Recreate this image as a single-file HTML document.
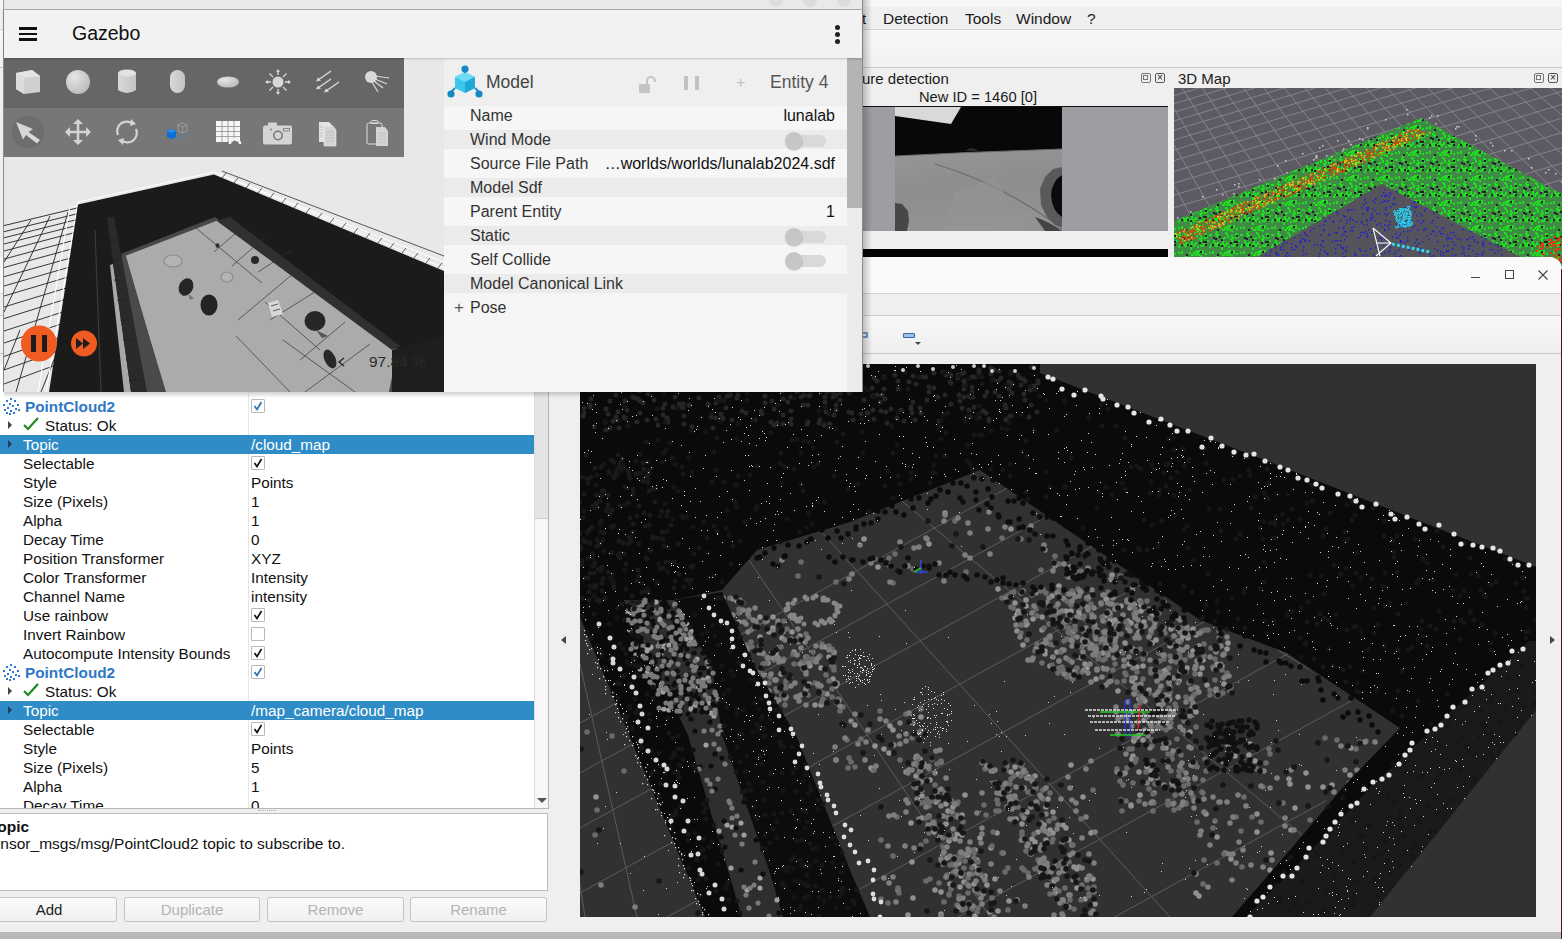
<!DOCTYPE html>
<html><head><meta charset="utf-8">
<style>
*{margin:0;padding:0;box-sizing:border-box}
html,body{width:1562px;height:939px;overflow:hidden;background:#efefef;font-family:"Liberation Sans",sans-serif;color:#1a1a1a}
.a{position:absolute}
.t{position:absolute;white-space:nowrap;line-height:1}
</style></head><body>

<!-- ============ BACK APP (top right) ============ -->
<div class="a" style="left:0;top:0;width:1562px;height:257px;background:#efefef">
  <div class="a" style="left:0;top:0;width:1562px;height:8px;background:#f7f7f7;border-bottom:1px solid #cfcfcf"></div>
  <div class="a" style="left:0;top:7px;width:1562px;height:23px;background:#efefef;border-bottom:1px solid #d2d2d2"></div>
  <div class="t" style="left:862px;top:11px;font-size:15px">t</div>
  <div class="t" style="left:883px;top:11px;font-size:15.5px">Detection</div>
  <div class="t" style="left:965px;top:11px;font-size:15.5px">Tools</div>
  <div class="t" style="left:1016px;top:11px;font-size:15.5px">Window</div>
  <div class="t" style="left:1087px;top:11px;font-size:15.5px">?</div>
  <div class="a" style="left:0;top:30px;width:1562px;height:38px;background:linear-gradient(#f8f8f8,#f1f1f1);border-bottom:1px solid #c9c9c9"></div>
  <!-- dock titles -->
  <div class="t" style="left:862px;top:71px;font-size:15px">ure detection</div>
  <div class="t" style="left:1178px;top:71px;font-size:15px">3D Map</div>
  <div class="t" style="left:919px;top:90px;font-size:14.7px">New ID = 1460 [0]</div>
  <!-- feature detection image -->
  <div class="a" style="left:862px;top:106px;width:306px;height:125px;background:#9e9da2;border-top:1px solid #111"></div>
  <svg class="a" style="left:895px;top:107px" width="167" height="124" viewBox="0 0 167 124">
    <defs><linearGradient id="gr" x1="0" y1="0" x2="0.2" y2="1"><stop offset="0" stop-color="#979797"/><stop offset="0.5" stop-color="#8d8d8d"/><stop offset="1" stop-color="#939393"/></linearGradient></defs>
    <rect width="167" height="124" fill="#080808"/>
    <polygon points="0,0 66,0 56,17 0,9" fill="#d9d9d9"/>
    <path d="M0 49 L73 45.5 L167 42 L167 124 L0 124Z" fill="url(#gr)"/>
    <path d="M0 49 L73 45.5 L167 42" stroke="#6a6a6a" stroke-width="1" fill="none"/>
    <path d="M70 44 Q77 38 83 44Z" fill="#2a2a2a"/>
    <path d="M40 57 Q110 78 167 122" stroke="#6c6c6c" stroke-width="1.3" fill="none"/>
    <path d="M60 85 L100 70 L130 124 L45 124Z" fill="#959595" opacity="0.6"/>
    <path d="M167 60 L158 62 L150 70 L145 82 L146 98 L152 110 L160 118 L167 120Z" fill="#5a5a5a"/>
    <path d="M167 68 Q157 74 156 88 Q157 104 167 110Z" fill="#0b0b0b"/>
    <path d="M0 96 L7 97 L13 104 L14 114 L12 124 L0 124Z" fill="#474747"/>
    <path d="M140 110 Q155 115 167 124 L150 124Z" fill="#444"/>
  </svg>
  <div class="a" style="left:862px;top:249px;width:306px;height:8px;background:#050505"></div>
  <!-- dock buttons -->
  <div class="a" style="left:1141px;top:73px;width:10px;height:10px;border:1px solid #777;border-radius:2px"></div><div class="a" style="left:1143px;top:75px;width:5px;height:5px;border:1px solid #777"></div>
  <div class="a" style="left:1155px;top:73px;width:10px;height:10px;border:1px solid #555;border-radius:2px;font-size:10px;line-height:8px;text-align:center;color:#222">&#215;</div>
  <div class="a" style="left:1534px;top:73px;width:10px;height:10px;border:1px solid #777;border-radius:2px"></div><div class="a" style="left:1536px;top:75px;width:5px;height:5px;border:1px solid #777"></div>
  <div class="a" style="left:1548px;top:73px;width:10px;height:10px;border:1px solid #555;border-radius:2px;font-size:10px;line-height:8px;text-align:center;color:#222">&#215;</div>
  <!-- 3D map -->
  <svg class="a" style="left:1174px;top:88px" width="388" height="182" viewBox="1174 88 388 182">
    <rect x="1174" y="88" width="388" height="182" fill="#5d5a64"/>
<!--MAP--><path d="M1174 60.0L1562 -56.4M1174 66.5L1562 -49.9M1174 73.3L1562 -43.1M1174 80.4L1562 -36.0M1174 87.8L1562 -28.6M1174 95.6L1562 -20.8M1174 103.7L1562 -12.7M1174 112.1L1562 -4.3M1174 121.0L1562 4.6M1174 130.2L1562 13.8M1174 139.9L1562 23.5M1174 150.0L1562 33.6M1174 160.5L1562 44.1M1174 171.5L1562 55.1M1174 183.1L1562 66.7M1174 195.1L1562 78.7M1174 207.7L1562 91.3M1174 220.8L1562 104.4M1174 234.6L1562 118.2M1174 248.9L1562 132.5M1174 263.9L1562 147.5M1174 279.6L1562 163.2M1174 296.0L1562 179.6M1174 313.1L1562 196.7M1095.9 80L1189.2 260M1116.1 80L1214.9 260M1136.4 80L1240.6 260M1156.6 80L1266.4 260M1176.9 80L1292.1 260M1197.1 80L1317.8 260M1217.4 80L1343.5 260M1237.7 80L1369.3 260M1257.9 80L1395.0 260M1278.2 80L1420.7 260M1298.4 80L1446.4 260M1318.7 80L1472.1 260M1338.9 80L1497.9 260M1359.2 80L1523.6 260M1379.5 80L1549.3 260M1399.7 80L1575.0 260M1420.0 80L1600.8 260M1440.2 80L1626.5 260M1460.5 80L1652.2 260M1480.7 80L1677.9 260M1501.0 80L1703.7 260M1521.2 80L1729.4 260M1541.5 80L1755.1 260M1561.8 80L1780.8 260M1582.0 80L1806.6 260M1602.3 80L1832.3 260M1622.5 80L1858.0 260M1642.8 80L1883.7 260M1663.0 80L1909.4 260M1683.3 80L1935.2 260M1703.6 80L1960.9 260M1723.8 80L1986.6 260M1744.1 80L2012.3 260M1764.3 80L2038.1 260M1784.6 80L2063.8 260M1804.8 80L2089.5 260M1825.1 80L2115.2 260M1845.4 80L2141.0 260M1865.6 80L2166.7 260M1885.9 80L2192.4 260" stroke="#8a888e" stroke-width="0.9" fill="none"/>
<defs><pattern id="gp" width="31" height="25" patternUnits="userSpaceOnUse"><rect width="31" height="25" fill="#3f8a45"/><path d="M7 18h2v2h-2zM17 4h2v2h-2zM11 19h2v2h-2zM15 20h2v2h-2zM18 2h2v2h-2zM19 0h2v2h-2zM29 15h2v2h-2zM8 17h2v2h-2zM7 6h2v2h-2zM22 15h2v2h-2zM17 17h2v2h-2zM15 12h2v2h-2zM20 4h2v2h-2zM7 20h2v2h-2zM4 16h2v2h-2zM12 23h2v2h-2zM0 21h2v2h-2zM24 2h2v2h-2zM5 18h2v2h-2zM1 9h2v2h-2zM24 0h2v2h-2zM26 8h2v2h-2zM15 19h2v2h-2zM23 12h2v2h-2zM22 13h2v2h-2zM12 23h2v2h-2zM25 18h2v2h-2zM14 4h2v2h-2zM28 11h2v2h-2zM3 1h2v2h-2zM4 15h2v2h-2zM6 8h2v2h-2zM21 13h2v2h-2zM24 20h2v2h-2zM27 9h2v2h-2zM13 16h2v2h-2zM26 12h2v2h-2zM18 11h2v2h-2zM17 18h2v2h-2zM13 18h2v2h-2zM7 10h2v2h-2zM21 0h2v2h-2zM27 8h2v2h-2zM19 21h2v2h-2zM22 5h2v2h-2zM22 10h2v2h-2zM17 18h2v2h-2zM18 3h2v2h-2zM22 20h2v2h-2zM6 20h2v2h-2zM26 18h2v2h-2zM8 9h2v2h-2zM3 2h2v2h-2zM15 20h2v2h-2zM15 2h2v2h-2zM11 2h2v2h-2zM13 4h2v2h-2zM0 9h2v2h-2zM13 13h2v2h-2zM27 3h2v2h-2zM1 19h2v2h-2zM19 1h2v2h-2zM12 22h2v2h-2zM18 10h2v2h-2zM17 8h2v2h-2zM16 7h2v2h-2zM1 9h2v2h-2zM0 2h2v2h-2zM3 19h2v2h-2zM17 1h2v2h-2z" fill="#1fe01f"/><path d="M6 13h2v2h-2zM9 19h2v2h-2zM8 4h2v2h-2zM22 1h2v2h-2zM27 10h2v2h-2zM10 11h2v2h-2zM4 12h2v2h-2zM12 14h2v2h-2zM27 16h2v2h-2zM12 20h2v2h-2zM27 19h2v2h-2zM21 17h2v2h-2zM3 19h2v2h-2zM25 16h2v2h-2z" fill="#222"/></pattern></defs>
<polygon points="1174,221 1300,168 1421,118 1562,194 1562,270 1545,270 1382,184 1235,270 1174,270" fill="url(#gp)"/>
<path d="M1336 165h1.6v1.6h-1.6zM1418 129h1.6v1.6h-1.6zM1269 200h1.6v1.6h-1.6zM1201 222h1.6v1.6h-1.6zM1258 206h1.6v1.6h-1.6zM1183 239h1.6v1.6h-1.6zM1325 176h1.6v1.6h-1.6zM1408 139h1.6v1.6h-1.6zM1205 231h1.6v1.6h-1.6zM1397 140h1.6v1.6h-1.6zM1343 170h1.6v1.6h-1.6zM1352 160h1.6v1.6h-1.6zM1280 193h1.6v1.6h-1.6zM1394 142h1.6v1.6h-1.6zM1181 243h1.6v1.6h-1.6zM1193 238h1.6v1.6h-1.6zM1186 233h1.6v1.6h-1.6zM1408 130h1.6v1.6h-1.6zM1400 135h1.6v1.6h-1.6zM1321 172h1.6v1.6h-1.6zM1368 154h1.6v1.6h-1.6zM1225 218h1.6v1.6h-1.6zM1228 222h1.6v1.6h-1.6zM1410 129h1.6v1.6h-1.6zM1195 225h1.6v1.6h-1.6zM1221 225h1.6v1.6h-1.6zM1264 204h1.6v1.6h-1.6zM1336 173h1.6v1.6h-1.6zM1280 186h1.6v1.6h-1.6zM1417 131h1.6v1.6h-1.6zM1218 215h1.6v1.6h-1.6zM1256 197h1.6v1.6h-1.6zM1306 186h1.6v1.6h-1.6zM1251 202h1.6v1.6h-1.6zM1366 150h1.6v1.6h-1.6zM1334 174h1.6v1.6h-1.6zM1183 239h1.6v1.6h-1.6zM1179 231h1.6v1.6h-1.6zM1224 218h1.6v1.6h-1.6zM1241 205h1.6v1.6h-1.6zM1216 216h1.6v1.6h-1.6zM1255 197h1.6v1.6h-1.6zM1255 198h1.6v1.6h-1.6zM1254 203h1.6v1.6h-1.6zM1229 218h1.6v1.6h-1.6zM1403 138h1.6v1.6h-1.6zM1278 189h1.6v1.6h-1.6zM1389 141h1.6v1.6h-1.6zM1320 170h1.6v1.6h-1.6zM1352 158h1.6v1.6h-1.6zM1257 196h1.6v1.6h-1.6zM1274 192h1.6v1.6h-1.6zM1379 151h1.6v1.6h-1.6zM1261 195h1.6v1.6h-1.6zM1399 134h1.6v1.6h-1.6zM1257 203h1.6v1.6h-1.6zM1419 132h1.6v1.6h-1.6zM1386 147h1.6v1.6h-1.6zM1309 179h1.6v1.6h-1.6zM1393 148h1.6v1.6h-1.6zM1233 207h1.6v1.6h-1.6zM1395 143h1.6v1.6h-1.6zM1348 160h1.6v1.6h-1.6zM1222 224h1.6v1.6h-1.6zM1357 164h1.6v1.6h-1.6zM1298 190h1.6v1.6h-1.6zM1273 192h1.6v1.6h-1.6zM1201 228h1.6v1.6h-1.6zM1203 224h1.6v1.6h-1.6zM1419 135h1.6v1.6h-1.6zM1219 224h1.6v1.6h-1.6zM1290 186h1.6v1.6h-1.6zM1304 183h1.6v1.6h-1.6zM1318 174h1.6v1.6h-1.6zM1345 165h1.6v1.6h-1.6zM1365 150h1.6v1.6h-1.6zM1256 203h1.6v1.6h-1.6zM1322 171h1.6v1.6h-1.6zM1387 150h1.6v1.6h-1.6zM1311 173h1.6v1.6h-1.6zM1309 179h1.6v1.6h-1.6zM1235 214h1.6v1.6h-1.6zM1391 149h1.6v1.6h-1.6zM1292 182h1.6v1.6h-1.6zM1218 213h1.6v1.6h-1.6zM1307 174h1.6v1.6h-1.6zM1235 206h1.6v1.6h-1.6zM1374 147h1.6v1.6h-1.6zM1292 193h1.6v1.6h-1.6zM1399 135h1.6v1.6h-1.6zM1384 147h1.6v1.6h-1.6zM1348 164h1.6v1.6h-1.6zM1195 234h1.6v1.6h-1.6zM1272 194h1.6v1.6h-1.6zM1201 229h1.6v1.6h-1.6zM1343 169h1.6v1.6h-1.6zM1346 157h1.6v1.6h-1.6zM1235 206h1.6v1.6h-1.6zM1317 177h1.6v1.6h-1.6zM1245 201h1.6v1.6h-1.6zM1237 206h1.6v1.6h-1.6zM1371 154h1.6v1.6h-1.6zM1266 194h1.6v1.6h-1.6zM1205 228h1.6v1.6h-1.6zM1404 132h1.6v1.6h-1.6zM1264 203h1.6v1.6h-1.6zM1299 186h1.6v1.6h-1.6zM1192 229h1.6v1.6h-1.6zM1231 211h1.6v1.6h-1.6zM1332 163h1.6v1.6h-1.6zM1201 234h1.6v1.6h-1.6zM1355 161h1.6v1.6h-1.6zM1386 146h1.6v1.6h-1.6zM1196 225h1.6v1.6h-1.6zM1193 229h1.6v1.6h-1.6zM1405 138h1.6v1.6h-1.6zM1353 157h1.6v1.6h-1.6zM1376 154h1.6v1.6h-1.6zM1404 140h1.6v1.6h-1.6zM1214 225h1.6v1.6h-1.6zM1218 219h1.6v1.6h-1.6zM1416 137h1.6v1.6h-1.6zM1299 187h1.6v1.6h-1.6zM1370 157h1.6v1.6h-1.6zM1385 147h1.6v1.6h-1.6zM1265 194h1.6v1.6h-1.6zM1259 197h1.6v1.6h-1.6zM1335 168h1.6v1.6h-1.6zM1316 170h1.6v1.6h-1.6zM1311 178h1.6v1.6h-1.6zM1268 198h1.6v1.6h-1.6zM1227 213h1.6v1.6h-1.6zM1372 148h1.6v1.6h-1.6zM1274 198h1.6v1.6h-1.6zM1419 133h1.6v1.6h-1.6zM1328 169h1.6v1.6h-1.6zM1203 225h1.6v1.6h-1.6zM1180 230h1.6v1.6h-1.6zM1268 200h1.6v1.6h-1.6zM1288 194h1.6v1.6h-1.6zM1232 220h1.6v1.6h-1.6zM1240 208h1.6v1.6h-1.6zM1236 208h1.6v1.6h-1.6zM1404 135h1.6v1.6h-1.6zM1400 138h1.6v1.6h-1.6zM1328 173h1.6v1.6h-1.6zM1276 193h1.6v1.6h-1.6zM1418 129h1.6v1.6h-1.6zM1382 150h1.6v1.6h-1.6zM1196 233h1.6v1.6h-1.6zM1217 222h1.6v1.6h-1.6zM1366 157h1.6v1.6h-1.6zM1300 188h1.6v1.6h-1.6zM1232 212h1.6v1.6h-1.6zM1333 170h1.6v1.6h-1.6zM1195 237h1.6v1.6h-1.6zM1219 226h1.6v1.6h-1.6zM1215 215h1.6v1.6h-1.6zM1339 168h1.6v1.6h-1.6zM1265 193h1.6v1.6h-1.6zM1344 170h1.6v1.6h-1.6zM1340 171h1.6v1.6h-1.6zM1423 134h1.6v1.6h-1.6zM1217 222h1.6v1.6h-1.6zM1183 242h1.6v1.6h-1.6zM1352 160h1.6v1.6h-1.6zM1286 190h1.6v1.6h-1.6zM1243 208h1.6v1.6h-1.6zM1237 206h1.6v1.6h-1.6zM1242 206h1.6v1.6h-1.6zM1203 233h1.6v1.6h-1.6zM1364 160h1.6v1.6h-1.6zM1344 165h1.6v1.6h-1.6zM1252 207h1.6v1.6h-1.6zM1196 226h1.6v1.6h-1.6zM1209 230h1.6v1.6h-1.6zM1327 169h1.6v1.6h-1.6zM1389 146h1.6v1.6h-1.6zM1291 183h1.6v1.6h-1.6zM1235 212h1.6v1.6h-1.6zM1216 215h1.6v1.6h-1.6zM1359 155h1.6v1.6h-1.6zM1351 165h1.6v1.6h-1.6zM1373 151h1.6v1.6h-1.6zM1212 218h1.6v1.6h-1.6zM1344 161h1.6v1.6h-1.6zM1192 229h1.6v1.6h-1.6zM1202 228h1.6v1.6h-1.6zM1247 205h1.6v1.6h-1.6zM1399 141h1.6v1.6h-1.6zM1278 198h1.6v1.6h-1.6zM1310 178h1.6v1.6h-1.6zM1373 154h1.6v1.6h-1.6zM1344 163h1.6v1.6h-1.6zM1376 152h1.6v1.6h-1.6zM1396 141h1.6v1.6h-1.6zM1178 232h1.6v1.6h-1.6zM1369 153h1.6v1.6h-1.6zM1332 167h1.6v1.6h-1.6zM1191 237h1.6v1.6h-1.6zM1229 212h1.6v1.6h-1.6zM1400 134h1.6v1.6h-1.6zM1331 165h1.6v1.6h-1.6zM1360 157h1.6v1.6h-1.6zM1363 161h1.6v1.6h-1.6zM1334 167h1.6v1.6h-1.6zM1231 214h1.6v1.6h-1.6zM1392 144h1.6v1.6h-1.6zM1412 135h1.6v1.6h-1.6zM1339 169h1.6v1.6h-1.6zM1330 168h1.6v1.6h-1.6zM1228 220h1.6v1.6h-1.6zM1251 211h1.6v1.6h-1.6zM1386 149h1.6v1.6h-1.6zM1239 211h1.6v1.6h-1.6zM1210 229h1.6v1.6h-1.6zM1383 142h1.6v1.6h-1.6zM1297 181h1.6v1.6h-1.6zM1253 200h1.6v1.6h-1.6zM1197 227h1.6v1.6h-1.6zM1399 145h1.6v1.6h-1.6zM1337 171h1.6v1.6h-1.6zM1336 165h1.6v1.6h-1.6zM1190 236h1.6v1.6h-1.6zM1355 157h1.6v1.6h-1.6zM1278 191h1.6v1.6h-1.6zM1380 154h1.6v1.6h-1.6zM1416 138h1.6v1.6h-1.6zM1305 180h1.6v1.6h-1.6zM1338 164h1.6v1.6h-1.6zM1202 228h1.6v1.6h-1.6zM1274 201h1.6v1.6h-1.6zM1344 169h1.6v1.6h-1.6zM1373 148h1.6v1.6h-1.6zM1349 166h1.6v1.6h-1.6zM1391 145h1.6v1.6h-1.6zM1296 185h1.6v1.6h-1.6zM1193 224h1.6v1.6h-1.6zM1259 205h1.6v1.6h-1.6zM1279 186h1.6v1.6h-1.6zM1405 139h1.6v1.6h-1.6zM1211 226h1.6v1.6h-1.6zM1221 222h1.6v1.6h-1.6zM1272 192h1.6v1.6h-1.6zM1271 195h1.6v1.6h-1.6zM1258 198h1.6v1.6h-1.6zM1345 163h1.6v1.6h-1.6zM1259 197h1.6v1.6h-1.6zM1271 191h1.6v1.6h-1.6zM1255 201h1.6v1.6h-1.6zM1185 231h1.6v1.6h-1.6zM1231 209h1.6v1.6h-1.6zM1305 182h1.6v1.6h-1.6zM1223 221h1.6v1.6h-1.6zM1294 186h1.6v1.6h-1.6zM1289 183h1.6v1.6h-1.6zM1194 230h1.6v1.6h-1.6zM1408 138h1.6v1.6h-1.6zM1344 162h1.6v1.6h-1.6zM1185 236h1.6v1.6h-1.6zM1237 210h1.6v1.6h-1.6zM1300 186h1.6v1.6h-1.6zM1245 213h1.6v1.6h-1.6zM1414 134h1.6v1.6h-1.6zM1249 207h1.6v1.6h-1.6zM1236 210h1.6v1.6h-1.6zM1218 218h1.6v1.6h-1.6zM1238 204h1.6v1.6h-1.6zM1249 210h1.6v1.6h-1.6zM1318 176h1.6v1.6h-1.6zM1320 180h1.6v1.6h-1.6zM1235 217h1.6v1.6h-1.6zM1417 130h1.6v1.6h-1.6zM1285 191h1.6v1.6h-1.6zM1182 230h1.6v1.6h-1.6zM1351 155h1.6v1.6h-1.6zM1407 131h1.6v1.6h-1.6zM1242 212h1.6v1.6h-1.6zM1360 151h1.6v1.6h-1.6zM1382 141h1.6v1.6h-1.6zM1176 233h1.6v1.6h-1.6zM1211 221h1.6v1.6h-1.6zM1334 163h1.6v1.6h-1.6zM1287 185h1.6v1.6h-1.6zM1188 238h1.6v1.6h-1.6zM1334 168h1.6v1.6h-1.6zM1221 220h1.6v1.6h-1.6zM1299 178h1.6v1.6h-1.6zM1295 184h1.6v1.6h-1.6zM1275 197h1.6v1.6h-1.6zM1282 187h1.6v1.6h-1.6zM1285 194h1.6v1.6h-1.6zM1362 159h1.6v1.6h-1.6zM1382 144h1.6v1.6h-1.6zM1190 239h1.6v1.6h-1.6zM1212 218h1.6v1.6h-1.6zM1241 207h1.6v1.6h-1.6zM1357 160h1.6v1.6h-1.6zM1183 242h1.6v1.6h-1.6zM1223 211h1.6v1.6h-1.6zM1394 140h1.6v1.6h-1.6zM1344 162h1.6v1.6h-1.6zM1190 231h1.6v1.6h-1.6zM1303 188h1.6v1.6h-1.6zM1214 221h1.6v1.6h-1.6zM1372 147h1.6v1.6h-1.6zM1322 167h1.6v1.6h-1.6zM1257 204h1.6v1.6h-1.6zM1206 222h1.6v1.6h-1.6zM1393 142h1.6v1.6h-1.6zM1189 234h1.6v1.6h-1.6zM1411 134h1.6v1.6h-1.6zM1294 192h1.6v1.6h-1.6zM1255 208h1.6v1.6h-1.6zM1368 159h1.6v1.6h-1.6zM1193 230h1.6v1.6h-1.6zM1336 169h1.6v1.6h-1.6zM1261 195h1.6v1.6h-1.6zM1296 191h1.6v1.6h-1.6zM1225 211h1.6v1.6h-1.6zM1368 159h1.6v1.6h-1.6zM1331 172h1.6v1.6h-1.6zM1345 167h1.6v1.6h-1.6zM1287 184h1.6v1.6h-1.6zM1253 205h1.6v1.6h-1.6zM1229 209h1.6v1.6h-1.6zM1203 233h1.6v1.6h-1.6zM1294 191h1.6v1.6h-1.6zM1318 171h1.6v1.6h-1.6zM1400 139h1.6v1.6h-1.6zM1382 147h1.6v1.6h-1.6zM1354 165h1.6v1.6h-1.6zM1367 155h1.6v1.6h-1.6zM1229 218h1.6v1.6h-1.6zM1360 162h1.6v1.6h-1.6zM1412 130h1.6v1.6h-1.6zM1370 151h1.6v1.6h-1.6zM1330 169h1.6v1.6h-1.6zM1312 173h1.6v1.6h-1.6zM1183 235h1.6v1.6h-1.6zM1181 236h1.6v1.6h-1.6zM1416 129h1.6v1.6h-1.6zM1411 136h1.6v1.6h-1.6zM1189 234h1.6v1.6h-1.6zM1311 175h1.6v1.6h-1.6zM1180 241h1.6v1.6h-1.6zM1182 236h1.6v1.6h-1.6zM1255 197h1.6v1.6h-1.6zM1192 236h1.6v1.6h-1.6zM1273 191h1.6v1.6h-1.6zM1187 238h1.6v1.6h-1.6zM1347 162h1.6v1.6h-1.6zM1232 209h1.6v1.6h-1.6zM1250 210h1.6v1.6h-1.6zM1249 207h1.6v1.6h-1.6zM1254 204h1.6v1.6h-1.6zM1258 208h1.6v1.6h-1.6zM1413 136h1.6v1.6h-1.6zM1263 204h1.6v1.6h-1.6zM1219 220h1.6v1.6h-1.6zM1214 216h1.6v1.6h-1.6zM1379 145h1.6v1.6h-1.6zM1307 180h1.6v1.6h-1.6zM1368 153h1.6v1.6h-1.6zM1390 149h1.6v1.6h-1.6zM1181 241h1.6v1.6h-1.6zM1335 169h1.6v1.6h-1.6zM1212 217h1.6v1.6h-1.6zM1308 178h1.6v1.6h-1.6zM1286 196h1.6v1.6h-1.6zM1414 130h1.6v1.6h-1.6zM1340 161h1.6v1.6h-1.6zM1224 215h1.6v1.6h-1.6zM1415 129h1.6v1.6h-1.6zM1323 179h1.6v1.6h-1.6zM1414 130h1.6v1.6h-1.6zM1220 214h1.6v1.6h-1.6zM1397 140h1.6v1.6h-1.6zM1204 221h1.6v1.6h-1.6zM1378 143h1.6v1.6h-1.6zM1357 154h1.6v1.6h-1.6zM1299 189h1.6v1.6h-1.6zM1264 201h1.6v1.6h-1.6zM1375 145h1.6v1.6h-1.6zM1211 228h1.6v1.6h-1.6zM1224 218h1.6v1.6h-1.6zM1218 223h1.6v1.6h-1.6zM1194 227h1.6v1.6h-1.6zM1204 226h1.6v1.6h-1.6zM1201 226h1.6v1.6h-1.6zM1338 163h1.6v1.6h-1.6zM1364 155h1.6v1.6h-1.6zM1208 224h1.6v1.6h-1.6zM1263 199h1.6v1.6h-1.6zM1419 135h1.6v1.6h-1.6zM1242 210h1.6v1.6h-1.6zM1228 219h1.6v1.6h-1.6zM1365 152h1.6v1.6h-1.6zM1266 195h1.6v1.6h-1.6zM1404 132h1.6v1.6h-1.6zM1397 142h1.6v1.6h-1.6zM1210 225h1.6v1.6h-1.6zM1254 198h1.6v1.6h-1.6zM1187 230h1.6v1.6h-1.6zM1274 199h1.6v1.6h-1.6zM1224 218h1.6v1.6h-1.6zM1199 226h1.6v1.6h-1.6zM1204 228h1.6v1.6h-1.6zM1242 209h1.6v1.6h-1.6zM1394 144h1.6v1.6h-1.6zM1270 199h1.6v1.6h-1.6zM1305 186h1.6v1.6h-1.6zM1208 220h1.6v1.6h-1.6zM1285 191h1.6v1.6h-1.6zM1318 177h1.6v1.6h-1.6zM1418 131h1.6v1.6h-1.6zM1402 138h1.6v1.6h-1.6zM1342 171h1.6v1.6h-1.6zM1303 176h1.6v1.6h-1.6zM1257 205h1.6v1.6h-1.6zM1185 237h1.6v1.6h-1.6zM1312 180h1.6v1.6h-1.6zM1189 237h1.6v1.6h-1.6zM1233 209h1.6v1.6h-1.6zM1409 131h1.6v1.6h-1.6zM1185 239h1.6v1.6h-1.6zM1279 189h1.6v1.6h-1.6zM1324 171h1.6v1.6h-1.6zM1192 238h1.6v1.6h-1.6zM1336 171h1.6v1.6h-1.6zM1379 143h1.6v1.6h-1.6zM1312 177h1.6v1.6h-1.6zM1207 220h1.6v1.6h-1.6zM1383 153h1.6v1.6h-1.6zM1238 215h1.6v1.6h-1.6zM1324 176h1.6v1.6h-1.6zM1264 198h1.6v1.6h-1.6zM1198 222h1.6v1.6h-1.6zM1385 146h1.6v1.6h-1.6zM1333 166h1.6v1.6h-1.6zM1185 232h1.6v1.6h-1.6zM1211 227h1.6v1.6h-1.6zM1350 160h1.6v1.6h-1.6zM1405 132h1.6v1.6h-1.6zM1301 185h1.6v1.6h-1.6zM1412 139h1.6v1.6h-1.6zM1241 203h1.6v1.6h-1.6zM1367 153h1.6v1.6h-1.6zM1314 183h1.6v1.6h-1.6zM1197 226h1.6v1.6h-1.6zM1263 196h1.6v1.6h-1.6zM1298 183h1.6v1.6h-1.6zM1365 156h1.6v1.6h-1.6zM1246 207h1.6v1.6h-1.6zM1210 225h1.6v1.6h-1.6zM1399 135h1.6v1.6h-1.6zM1251 204h1.6v1.6h-1.6zM1201 227h1.6v1.6h-1.6zM1387 139h1.6v1.6h-1.6zM1399 143h1.6v1.6h-1.6zM1402 139h1.6v1.6h-1.6zM1314 173h1.6v1.6h-1.6zM1304 179h1.6v1.6h-1.6zM1291 191h1.6v1.6h-1.6zM1243 204h1.6v1.6h-1.6zM1257 196h1.6v1.6h-1.6zM1405 137h1.6v1.6h-1.6zM1347 159h1.6v1.6h-1.6zM1351 155h1.6v1.6h-1.6zM1398 138h1.6v1.6h-1.6zM1249 201h1.6v1.6h-1.6zM1293 187h1.6v1.6h-1.6zM1330 171h1.6v1.6h-1.6zM1190 236h1.6v1.6h-1.6zM1279 197h1.6v1.6h-1.6zM1349 157h1.6v1.6h-1.6zM1268 201h1.6v1.6h-1.6zM1201 228h1.6v1.6h-1.6zM1233 216h1.6v1.6h-1.6zM1257 206h1.6v1.6h-1.6zM1282 194h1.6v1.6h-1.6zM1383 144h1.6v1.6h-1.6zM1322 177h1.6v1.6h-1.6zM1237 217h1.6v1.6h-1.6zM1230 214h1.6v1.6h-1.6zM1222 215h1.6v1.6h-1.6zM1181 239h1.6v1.6h-1.6zM1332 172h1.6v1.6h-1.6zM1334 174h1.6v1.6h-1.6zM1233 208h1.6v1.6h-1.6zM1307 175h1.6v1.6h-1.6zM1341 171h1.6v1.6h-1.6zM1374 150h1.6v1.6h-1.6zM1263 204h1.6v1.6h-1.6zM1308 178h1.6v1.6h-1.6zM1422 131h1.6v1.6h-1.6zM1219 225h1.6v1.6h-1.6zM1401 142h1.6v1.6h-1.6zM1193 229h1.6v1.6h-1.6zM1344 167h1.6v1.6h-1.6zM1368 150h1.6v1.6h-1.6zM1185 238h1.6v1.6h-1.6zM1284 197h1.6v1.6h-1.6zM1202 229h1.6v1.6h-1.6zM1361 157h1.6v1.6h-1.6zM1210 221h1.6v1.6h-1.6zM1300 182h1.6v1.6h-1.6zM1240 204h1.6v1.6h-1.6zM1237 209h1.6v1.6h-1.6zM1187 229h1.6v1.6h-1.6zM1394 137h1.6v1.6h-1.6zM1363 159h1.6v1.6h-1.6zM1402 137h1.6v1.6h-1.6zM1275 198h1.6v1.6h-1.6zM1368 152h1.6v1.6h-1.6zM1404 136h1.6v1.6h-1.6zM1358 153h1.6v1.6h-1.6zM1312 177h1.6v1.6h-1.6zM1272 193h1.6v1.6h-1.6zM1325 173h1.6v1.6h-1.6zM1364 162h1.6v1.6h-1.6zM1298 187h1.6v1.6h-1.6zM1211 227h1.6v1.6h-1.6zM1232 208h1.6v1.6h-1.6zM1188 235h1.6v1.6h-1.6zM1366 152h1.6v1.6h-1.6zM1255 206h1.6v1.6h-1.6zM1205 221h1.6v1.6h-1.6zM1188 232h1.6v1.6h-1.6zM1407 142h1.6v1.6h-1.6zM1348 165h1.6v1.6h-1.6zM1293 182h1.6v1.6h-1.6zM1297 181h1.6v1.6h-1.6zM1404 140h1.6v1.6h-1.6zM1257 208h1.6v1.6h-1.6zM1362 154h1.6v1.6h-1.6zM1340 170h1.6v1.6h-1.6zM1398 138h1.6v1.6h-1.6zM1266 196h1.6v1.6h-1.6zM1194 237h1.6v1.6h-1.6zM1218 227h1.6v1.6h-1.6zM1206 218h1.6v1.6h-1.6zM1372 155h1.6v1.6h-1.6zM1225 219h1.6v1.6h-1.6zM1246 211h1.6v1.6h-1.6zM1193 231h1.6v1.6h-1.6zM1181 229h1.6v1.6h-1.6zM1210 229h1.6v1.6h-1.6zM1247 203h1.6v1.6h-1.6zM1303 184h1.6v1.6h-1.6zM1213 228h1.6v1.6h-1.6zM1304 179h1.6v1.6h-1.6zM1266 200h1.6v1.6h-1.6zM1395 139h1.6v1.6h-1.6zM1385 148h1.6v1.6h-1.6zM1308 181h1.6v1.6h-1.6zM1230 214h1.6v1.6h-1.6zM1423 132h1.6v1.6h-1.6zM1198 222h1.6v1.6h-1.6zM1398 141h1.6v1.6h-1.6zM1240 210h1.6v1.6h-1.6zM1223 217h1.6v1.6h-1.6zM1268 201h1.6v1.6h-1.6zM1378 155h1.6v1.6h-1.6zM1269 193h1.6v1.6h-1.6zM1248 210h1.6v1.6h-1.6zM1329 166h1.6v1.6h-1.6zM1355 159h1.6v1.6h-1.6zM1300 178h1.6v1.6h-1.6zM1318 178h1.6v1.6h-1.6zM1314 179h1.6v1.6h-1.6zM1320 175h1.6v1.6h-1.6zM1407 135h1.6v1.6h-1.6zM1254 197h1.6v1.6h-1.6zM1424 132h1.6v1.6h-1.6zM1184 236h1.6v1.6h-1.6zM1310 177h1.6v1.6h-1.6zM1370 153h1.6v1.6h-1.6zM1288 193h1.6v1.6h-1.6zM1250 208h1.6v1.6h-1.6zM1230 211h1.6v1.6h-1.6zM1337 168h1.6v1.6h-1.6zM1333 165h1.6v1.6h-1.6zM1213 228h1.6v1.6h-1.6zM1293 180h1.6v1.6h-1.6zM1407 135h1.6v1.6h-1.6zM1253 206h1.6v1.6h-1.6zM1258 204h1.6v1.6h-1.6zM1243 202h1.6v1.6h-1.6zM1179 238h1.6v1.6h-1.6zM1297 189h1.6v1.6h-1.6zM1366 150h1.6v1.6h-1.6zM1299 183h1.6v1.6h-1.6zM1337 173h1.6v1.6h-1.6zM1333 169h1.6v1.6h-1.6zM1291 185h1.6v1.6h-1.6zM1215 225h1.6v1.6h-1.6zM1421 131h1.6v1.6h-1.6zM1307 181h1.6v1.6h-1.6zM1294 185h1.6v1.6h-1.6zM1409 140h1.6v1.6h-1.6zM1265 195h1.6v1.6h-1.6zM1265 204h1.6v1.6h-1.6zM1279 193h1.6v1.6h-1.6zM1214 222h1.6v1.6h-1.6zM1371 157h1.6v1.6h-1.6zM1191 231h1.6v1.6h-1.6zM1359 155h1.6v1.6h-1.6zM1217 224h1.6v1.6h-1.6zM1383 150h1.6v1.6h-1.6zM1201 232h1.6v1.6h-1.6zM1212 227h1.6v1.6h-1.6zM1202 230h1.6v1.6h-1.6zM1333 170h1.6v1.6h-1.6zM1189 229h1.6v1.6h-1.6zM1287 195h1.6v1.6h-1.6zM1241 213h1.6v1.6h-1.6zM1193 237h1.6v1.6h-1.6zM1401 135h1.6v1.6h-1.6zM1311 176h1.6v1.6h-1.6zM1380 151h1.6v1.6h-1.6zM1301 180h1.6v1.6h-1.6zM1283 189h1.6v1.6h-1.6zM1219 224h1.6v1.6h-1.6zM1245 202h1.6v1.6h-1.6zM1309 181h1.6v1.6h-1.6zM1259 197h1.6v1.6h-1.6zM1261 206h1.6v1.6h-1.6zM1265 195h1.6v1.6h-1.6zM1335 167h1.6v1.6h-1.6zM1375 144h1.6v1.6h-1.6zM1382 146h1.6v1.6h-1.6zM1203 228h1.6v1.6h-1.6zM1399 135h1.6v1.6h-1.6zM1282 191h1.6v1.6h-1.6zM1193 233h1.6v1.6h-1.6zM1259 200h1.6v1.6h-1.6zM1347 161h1.6v1.6h-1.6zM1281 189h1.6v1.6h-1.6zM1192 230h1.6v1.6h-1.6zM1311 179h1.6v1.6h-1.6zM1396 143h1.6v1.6h-1.6zM1220 214h1.6v1.6h-1.6zM1249 212h1.6v1.6h-1.6zM1270 199h1.6v1.6h-1.6zM1294 191h1.6v1.6h-1.6zM1180 242h1.6v1.6h-1.6zM1240 211h1.6v1.6h-1.6zM1342 161h1.6v1.6h-1.6zM1351 162h1.6v1.6h-1.6zM1347 158h1.6v1.6h-1.6zM1191 230h1.6v1.6h-1.6zM1403 141h1.6v1.6h-1.6zM1304 182h1.6v1.6h-1.6zM1312 183h1.6v1.6h-1.6zM1250 209h1.6v1.6h-1.6zM1408 131h1.6v1.6h-1.6zM1317 180h1.6v1.6h-1.6zM1351 162h1.6v1.6h-1.6zM1372 152h1.6v1.6h-1.6z" fill="#d04a10"/>
<path d="M1335 163h1.5v1.5h-1.5zM1209 220h1.5v1.5h-1.5zM1290 185h1.5v1.5h-1.5zM1212 222h1.5v1.5h-1.5zM1223 223h1.5v1.5h-1.5zM1248 207h1.5v1.5h-1.5zM1361 155h1.5v1.5h-1.5zM1226 216h1.5v1.5h-1.5zM1240 209h1.5v1.5h-1.5zM1302 178h1.5v1.5h-1.5zM1215 226h1.5v1.5h-1.5zM1386 144h1.5v1.5h-1.5zM1299 181h1.5v1.5h-1.5zM1375 149h1.5v1.5h-1.5zM1188 239h1.5v1.5h-1.5zM1257 202h1.5v1.5h-1.5zM1371 156h1.5v1.5h-1.5zM1283 186h1.5v1.5h-1.5zM1343 168h1.5v1.5h-1.5zM1344 162h1.5v1.5h-1.5zM1318 169h1.5v1.5h-1.5zM1252 201h1.5v1.5h-1.5zM1275 189h1.5v1.5h-1.5zM1384 149h1.5v1.5h-1.5zM1308 182h1.5v1.5h-1.5zM1406 135h1.5v1.5h-1.5zM1336 170h1.5v1.5h-1.5zM1239 211h1.5v1.5h-1.5zM1228 215h1.5v1.5h-1.5zM1399 143h1.5v1.5h-1.5zM1257 206h1.5v1.5h-1.5zM1231 215h1.5v1.5h-1.5zM1255 200h1.5v1.5h-1.5zM1330 176h1.5v1.5h-1.5zM1352 163h1.5v1.5h-1.5zM1385 147h1.5v1.5h-1.5zM1337 169h1.5v1.5h-1.5zM1220 216h1.5v1.5h-1.5zM1405 138h1.5v1.5h-1.5zM1358 152h1.5v1.5h-1.5zM1393 148h1.5v1.5h-1.5zM1179 237h1.5v1.5h-1.5zM1291 184h1.5v1.5h-1.5zM1333 174h1.5v1.5h-1.5zM1348 162h1.5v1.5h-1.5zM1313 181h1.5v1.5h-1.5zM1311 180h1.5v1.5h-1.5zM1231 210h1.5v1.5h-1.5zM1386 143h1.5v1.5h-1.5zM1383 143h1.5v1.5h-1.5zM1305 182h1.5v1.5h-1.5zM1232 215h1.5v1.5h-1.5zM1316 175h1.5v1.5h-1.5zM1397 144h1.5v1.5h-1.5zM1355 164h1.5v1.5h-1.5zM1299 188h1.5v1.5h-1.5zM1273 191h1.5v1.5h-1.5zM1269 197h1.5v1.5h-1.5zM1175 233h1.5v1.5h-1.5zM1314 183h1.5v1.5h-1.5zM1377 144h1.5v1.5h-1.5zM1392 140h1.5v1.5h-1.5zM1176 234h1.5v1.5h-1.5zM1187 234h1.5v1.5h-1.5zM1310 183h1.5v1.5h-1.5zM1423 133h1.5v1.5h-1.5zM1303 177h1.5v1.5h-1.5zM1212 227h1.5v1.5h-1.5zM1256 203h1.5v1.5h-1.5zM1322 174h1.5v1.5h-1.5zM1337 168h1.5v1.5h-1.5zM1385 141h1.5v1.5h-1.5zM1344 160h1.5v1.5h-1.5zM1393 140h1.5v1.5h-1.5zM1382 147h1.5v1.5h-1.5zM1264 194h1.5v1.5h-1.5zM1323 172h1.5v1.5h-1.5zM1243 211h1.5v1.5h-1.5zM1212 225h1.5v1.5h-1.5zM1256 207h1.5v1.5h-1.5zM1401 140h1.5v1.5h-1.5zM1292 181h1.5v1.5h-1.5zM1394 146h1.5v1.5h-1.5zM1241 214h1.5v1.5h-1.5zM1324 168h1.5v1.5h-1.5zM1419 134h1.5v1.5h-1.5zM1257 205h1.5v1.5h-1.5zM1401 145h1.5v1.5h-1.5zM1333 164h1.5v1.5h-1.5zM1351 161h1.5v1.5h-1.5zM1298 182h1.5v1.5h-1.5zM1333 164h1.5v1.5h-1.5zM1429 132h1.5v1.5h-1.5zM1218 223h1.5v1.5h-1.5zM1308 180h1.5v1.5h-1.5zM1238 215h1.5v1.5h-1.5zM1217 216h1.5v1.5h-1.5zM1345 158h1.5v1.5h-1.5zM1272 201h1.5v1.5h-1.5zM1235 211h1.5v1.5h-1.5zM1285 184h1.5v1.5h-1.5zM1415 131h1.5v1.5h-1.5zM1351 159h1.5v1.5h-1.5zM1263 206h1.5v1.5h-1.5zM1271 199h1.5v1.5h-1.5zM1182 238h1.5v1.5h-1.5zM1285 185h1.5v1.5h-1.5zM1366 149h1.5v1.5h-1.5zM1199 221h1.5v1.5h-1.5zM1219 218h1.5v1.5h-1.5zM1224 221h1.5v1.5h-1.5zM1208 227h1.5v1.5h-1.5zM1392 146h1.5v1.5h-1.5zM1275 189h1.5v1.5h-1.5zM1290 192h1.5v1.5h-1.5zM1322 174h1.5v1.5h-1.5zM1218 225h1.5v1.5h-1.5zM1388 147h1.5v1.5h-1.5zM1183 231h1.5v1.5h-1.5zM1219 224h1.5v1.5h-1.5zM1373 156h1.5v1.5h-1.5zM1294 188h1.5v1.5h-1.5zM1267 191h1.5v1.5h-1.5zM1306 186h1.5v1.5h-1.5zM1401 138h1.5v1.5h-1.5zM1406 139h1.5v1.5h-1.5zM1347 169h1.5v1.5h-1.5zM1222 222h1.5v1.5h-1.5zM1184 229h1.5v1.5h-1.5zM1289 182h1.5v1.5h-1.5zM1364 155h1.5v1.5h-1.5zM1176 236h1.5v1.5h-1.5zM1292 182h1.5v1.5h-1.5zM1263 201h1.5v1.5h-1.5zM1285 191h1.5v1.5h-1.5zM1250 207h1.5v1.5h-1.5zM1203 230h1.5v1.5h-1.5zM1406 140h1.5v1.5h-1.5zM1230 209h1.5v1.5h-1.5zM1418 137h1.5v1.5h-1.5zM1330 165h1.5v1.5h-1.5zM1395 136h1.5v1.5h-1.5zM1388 145h1.5v1.5h-1.5zM1337 171h1.5v1.5h-1.5zM1241 203h1.5v1.5h-1.5zM1406 133h1.5v1.5h-1.5zM1360 152h1.5v1.5h-1.5zM1277 198h1.5v1.5h-1.5zM1285 194h1.5v1.5h-1.5zM1192 226h1.5v1.5h-1.5zM1214 226h1.5v1.5h-1.5zM1198 229h1.5v1.5h-1.5zM1311 183h1.5v1.5h-1.5zM1337 170h1.5v1.5h-1.5zM1265 204h1.5v1.5h-1.5zM1197 231h1.5v1.5h-1.5zM1303 183h1.5v1.5h-1.5zM1364 159h1.5v1.5h-1.5zM1240 211h1.5v1.5h-1.5zM1279 190h1.5v1.5h-1.5zM1393 144h1.5v1.5h-1.5zM1245 208h1.5v1.5h-1.5zM1266 202h1.5v1.5h-1.5zM1239 207h1.5v1.5h-1.5zM1226 211h1.5v1.5h-1.5zM1285 188h1.5v1.5h-1.5zM1179 232h1.5v1.5h-1.5zM1404 142h1.5v1.5h-1.5zM1230 211h1.5v1.5h-1.5zM1259 201h1.5v1.5h-1.5zM1257 197h1.5v1.5h-1.5zM1416 135h1.5v1.5h-1.5zM1240 210h1.5v1.5h-1.5zM1297 189h1.5v1.5h-1.5zM1417 135h1.5v1.5h-1.5zM1268 201h1.5v1.5h-1.5zM1380 152h1.5v1.5h-1.5zM1417 129h1.5v1.5h-1.5zM1318 179h1.5v1.5h-1.5zM1357 152h1.5v1.5h-1.5zM1224 212h1.5v1.5h-1.5zM1196 224h1.5v1.5h-1.5zM1184 240h1.5v1.5h-1.5zM1320 177h1.5v1.5h-1.5zM1272 202h1.5v1.5h-1.5zM1351 155h1.5v1.5h-1.5zM1310 174h1.5v1.5h-1.5zM1381 142h1.5v1.5h-1.5zM1188 235h1.5v1.5h-1.5zM1237 207h1.5v1.5h-1.5zM1191 227h1.5v1.5h-1.5zM1375 147h1.5v1.5h-1.5zM1211 228h1.5v1.5h-1.5zM1224 214h1.5v1.5h-1.5zM1419 135h1.5v1.5h-1.5zM1355 159h1.5v1.5h-1.5zM1264 196h1.5v1.5h-1.5zM1179 237h1.5v1.5h-1.5zM1404 136h1.5v1.5h-1.5zM1210 225h1.5v1.5h-1.5zM1374 157h1.5v1.5h-1.5zM1387 150h1.5v1.5h-1.5zM1355 162h1.5v1.5h-1.5zM1223 224h1.5v1.5h-1.5zM1292 184h1.5v1.5h-1.5zM1323 179h1.5v1.5h-1.5zM1296 191h1.5v1.5h-1.5zM1199 226h1.5v1.5h-1.5zM1254 198h1.5v1.5h-1.5zM1199 233h1.5v1.5h-1.5zM1317 176h1.5v1.5h-1.5zM1308 183h1.5v1.5h-1.5zM1190 233h1.5v1.5h-1.5zM1197 228h1.5v1.5h-1.5zM1247 201h1.5v1.5h-1.5zM1395 137h1.5v1.5h-1.5zM1346 160h1.5v1.5h-1.5zM1218 216h1.5v1.5h-1.5zM1345 161h1.5v1.5h-1.5zM1376 147h1.5v1.5h-1.5zM1392 137h1.5v1.5h-1.5zM1379 143h1.5v1.5h-1.5zM1371 153h1.5v1.5h-1.5zM1236 210h1.5v1.5h-1.5zM1289 184h1.5v1.5h-1.5zM1288 193h1.5v1.5h-1.5zM1262 203h1.5v1.5h-1.5zM1353 160h1.5v1.5h-1.5zM1278 193h1.5v1.5h-1.5zM1356 162h1.5v1.5h-1.5zM1237 205h1.5v1.5h-1.5zM1363 157h1.5v1.5h-1.5zM1214 222h1.5v1.5h-1.5zM1403 132h1.5v1.5h-1.5zM1258 201h1.5v1.5h-1.5zM1249 209h1.5v1.5h-1.5zM1230 211h1.5v1.5h-1.5zM1252 206h1.5v1.5h-1.5zM1265 194h1.5v1.5h-1.5zM1230 221h1.5v1.5h-1.5zM1196 226h1.5v1.5h-1.5zM1238 218h1.5v1.5h-1.5zM1297 181h1.5v1.5h-1.5zM1219 226h1.5v1.5h-1.5zM1356 155h1.5v1.5h-1.5zM1276 195h1.5v1.5h-1.5zM1336 170h1.5v1.5h-1.5zM1354 155h1.5v1.5h-1.5zM1314 173h1.5v1.5h-1.5zM1325 169h1.5v1.5h-1.5zM1305 179h1.5v1.5h-1.5zM1389 149h1.5v1.5h-1.5zM1407 130h1.5v1.5h-1.5zM1221 213h1.5v1.5h-1.5zM1273 194h1.5v1.5h-1.5zM1191 237h1.5v1.5h-1.5zM1277 187h1.5v1.5h-1.5zM1398 139h1.5v1.5h-1.5zM1358 161h1.5v1.5h-1.5zM1411 132h1.5v1.5h-1.5zM1406 137h1.5v1.5h-1.5zM1416 134h1.5v1.5h-1.5zM1296 188h1.5v1.5h-1.5zM1206 222h1.5v1.5h-1.5z" fill="#d8d020"/>
<polygon points="1235,270 1382,184 1545,270" fill="#55535c"/>
<path d="M1485 269h1.4v1.4h-1.4zM1390 194h1.4v1.4h-1.4zM1369 270h1.4v1.4h-1.4zM1500 249h1.4v1.4h-1.4zM1494 252h1.4v1.4h-1.4zM1344 256h1.4v1.4h-1.4zM1358 237h1.4v1.4h-1.4zM1346 222h1.4v1.4h-1.4zM1323 229h1.4v1.4h-1.4zM1387 213h1.4v1.4h-1.4zM1342 248h1.4v1.4h-1.4zM1451 224h1.4v1.4h-1.4zM1374 220h1.4v1.4h-1.4zM1340 245h1.4v1.4h-1.4zM1372 200h1.4v1.4h-1.4zM1414 206h1.4v1.4h-1.4zM1404 224h1.4v1.4h-1.4zM1272 268h1.4v1.4h-1.4zM1425 227h1.4v1.4h-1.4zM1431 256h1.4v1.4h-1.4zM1423 220h1.4v1.4h-1.4zM1405 224h1.4v1.4h-1.4zM1417 220h1.4v1.4h-1.4zM1364 199h1.4v1.4h-1.4zM1329 268h1.4v1.4h-1.4zM1481 236h1.4v1.4h-1.4zM1294 237h1.4v1.4h-1.4zM1424 229h1.4v1.4h-1.4zM1430 233h1.4v1.4h-1.4zM1415 207h1.4v1.4h-1.4zM1395 262h1.4v1.4h-1.4zM1477 242h1.4v1.4h-1.4zM1468 248h1.4v1.4h-1.4zM1425 208h1.4v1.4h-1.4zM1356 221h1.4v1.4h-1.4zM1369 267h1.4v1.4h-1.4zM1352 219h1.4v1.4h-1.4zM1241 268h1.4v1.4h-1.4zM1322 241h1.4v1.4h-1.4zM1482 244h1.4v1.4h-1.4zM1387 225h1.4v1.4h-1.4zM1362 213h1.4v1.4h-1.4zM1253 264h1.4v1.4h-1.4zM1476 256h1.4v1.4h-1.4zM1506 260h1.4v1.4h-1.4zM1402 264h1.4v1.4h-1.4zM1376 242h1.4v1.4h-1.4zM1381 241h1.4v1.4h-1.4zM1401 220h1.4v1.4h-1.4zM1339 261h1.4v1.4h-1.4zM1472 236h1.4v1.4h-1.4zM1400 255h1.4v1.4h-1.4zM1458 258h1.4v1.4h-1.4zM1304 232h1.4v1.4h-1.4zM1256 265h1.4v1.4h-1.4zM1370 217h1.4v1.4h-1.4zM1350 209h1.4v1.4h-1.4zM1453 232h1.4v1.4h-1.4zM1433 264h1.4v1.4h-1.4zM1389 224h1.4v1.4h-1.4zM1467 260h1.4v1.4h-1.4zM1299 241h1.4v1.4h-1.4zM1384 230h1.4v1.4h-1.4zM1310 263h1.4v1.4h-1.4zM1296 259h1.4v1.4h-1.4zM1446 251h1.4v1.4h-1.4zM1341 263h1.4v1.4h-1.4zM1366 208h1.4v1.4h-1.4zM1319 253h1.4v1.4h-1.4zM1266 266h1.4v1.4h-1.4zM1344 216h1.4v1.4h-1.4zM1380 202h1.4v1.4h-1.4zM1365 231h1.4v1.4h-1.4zM1343 268h1.4v1.4h-1.4zM1406 261h1.4v1.4h-1.4zM1345 250h1.4v1.4h-1.4zM1435 235h1.4v1.4h-1.4zM1465 269h1.4v1.4h-1.4zM1437 241h1.4v1.4h-1.4zM1314 244h1.4v1.4h-1.4zM1385 209h1.4v1.4h-1.4zM1319 256h1.4v1.4h-1.4zM1423 229h1.4v1.4h-1.4zM1395 256h1.4v1.4h-1.4zM1400 241h1.4v1.4h-1.4zM1286 252h1.4v1.4h-1.4zM1376 224h1.4v1.4h-1.4zM1269 266h1.4v1.4h-1.4zM1388 200h1.4v1.4h-1.4zM1299 269h1.4v1.4h-1.4zM1372 217h1.4v1.4h-1.4zM1428 239h1.4v1.4h-1.4zM1439 265h1.4v1.4h-1.4zM1367 209h1.4v1.4h-1.4zM1328 234h1.4v1.4h-1.4zM1414 225h1.4v1.4h-1.4zM1317 244h1.4v1.4h-1.4zM1362 255h1.4v1.4h-1.4zM1322 246h1.4v1.4h-1.4zM1343 256h1.4v1.4h-1.4zM1355 254h1.4v1.4h-1.4zM1434 269h1.4v1.4h-1.4zM1333 221h1.4v1.4h-1.4zM1296 262h1.4v1.4h-1.4zM1389 244h1.4v1.4h-1.4zM1288 260h1.4v1.4h-1.4zM1420 223h1.4v1.4h-1.4zM1384 224h1.4v1.4h-1.4zM1367 235h1.4v1.4h-1.4zM1410 230h1.4v1.4h-1.4zM1403 221h1.4v1.4h-1.4zM1398 249h1.4v1.4h-1.4zM1374 229h1.4v1.4h-1.4zM1362 255h1.4v1.4h-1.4zM1309 240h1.4v1.4h-1.4zM1466 239h1.4v1.4h-1.4zM1375 198h1.4v1.4h-1.4zM1273 269h1.4v1.4h-1.4zM1332 221h1.4v1.4h-1.4zM1297 264h1.4v1.4h-1.4zM1383 201h1.4v1.4h-1.4zM1448 238h1.4v1.4h-1.4zM1421 265h1.4v1.4h-1.4zM1366 254h1.4v1.4h-1.4zM1375 262h1.4v1.4h-1.4zM1419 252h1.4v1.4h-1.4zM1418 243h1.4v1.4h-1.4zM1311 269h1.4v1.4h-1.4zM1398 260h1.4v1.4h-1.4zM1413 202h1.4v1.4h-1.4zM1433 267h1.4v1.4h-1.4zM1399 256h1.4v1.4h-1.4zM1433 255h1.4v1.4h-1.4zM1401 259h1.4v1.4h-1.4zM1386 194h1.4v1.4h-1.4zM1253 262h1.4v1.4h-1.4zM1363 204h1.4v1.4h-1.4zM1304 240h1.4v1.4h-1.4zM1506 266h1.4v1.4h-1.4zM1461 253h1.4v1.4h-1.4zM1401 214h1.4v1.4h-1.4zM1312 269h1.4v1.4h-1.4zM1467 262h1.4v1.4h-1.4zM1341 266h1.4v1.4h-1.4zM1477 242h1.4v1.4h-1.4zM1346 246h1.4v1.4h-1.4zM1260 263h1.4v1.4h-1.4zM1305 239h1.4v1.4h-1.4zM1355 264h1.4v1.4h-1.4zM1280 249h1.4v1.4h-1.4zM1360 235h1.4v1.4h-1.4zM1455 254h1.4v1.4h-1.4zM1381 233h1.4v1.4h-1.4zM1498 266h1.4v1.4h-1.4zM1374 210h1.4v1.4h-1.4zM1451 238h1.4v1.4h-1.4zM1497 250h1.4v1.4h-1.4zM1384 260h1.4v1.4h-1.4zM1410 219h1.4v1.4h-1.4zM1343 256h1.4v1.4h-1.4zM1388 265h1.4v1.4h-1.4zM1345 251h1.4v1.4h-1.4zM1443 227h1.4v1.4h-1.4zM1306 253h1.4v1.4h-1.4zM1365 250h1.4v1.4h-1.4zM1305 240h1.4v1.4h-1.4zM1416 206h1.4v1.4h-1.4zM1381 238h1.4v1.4h-1.4zM1495 244h1.4v1.4h-1.4zM1414 242h1.4v1.4h-1.4zM1305 234h1.4v1.4h-1.4zM1416 215h1.4v1.4h-1.4zM1283 242h1.4v1.4h-1.4zM1506 259h1.4v1.4h-1.4zM1275 252h1.4v1.4h-1.4zM1476 267h1.4v1.4h-1.4zM1370 219h1.4v1.4h-1.4zM1470 231h1.4v1.4h-1.4zM1464 264h1.4v1.4h-1.4zM1319 225h1.4v1.4h-1.4zM1379 213h1.4v1.4h-1.4zM1437 258h1.4v1.4h-1.4zM1329 234h1.4v1.4h-1.4zM1338 227h1.4v1.4h-1.4zM1393 198h1.4v1.4h-1.4zM1486 257h1.4v1.4h-1.4zM1343 233h1.4v1.4h-1.4zM1463 252h1.4v1.4h-1.4zM1504 268h1.4v1.4h-1.4zM1320 244h1.4v1.4h-1.4zM1420 213h1.4v1.4h-1.4zM1418 249h1.4v1.4h-1.4zM1282 245h1.4v1.4h-1.4zM1440 233h1.4v1.4h-1.4zM1399 225h1.4v1.4h-1.4zM1441 258h1.4v1.4h-1.4zM1400 240h1.4v1.4h-1.4zM1286 242h1.4v1.4h-1.4zM1437 250h1.4v1.4h-1.4zM1265 258h1.4v1.4h-1.4zM1442 252h1.4v1.4h-1.4zM1448 250h1.4v1.4h-1.4zM1398 221h1.4v1.4h-1.4zM1335 240h1.4v1.4h-1.4zM1405 221h1.4v1.4h-1.4zM1352 263h1.4v1.4h-1.4zM1356 270h1.4v1.4h-1.4zM1294 249h1.4v1.4h-1.4zM1437 217h1.4v1.4h-1.4zM1335 232h1.4v1.4h-1.4zM1420 248h1.4v1.4h-1.4zM1344 239h1.4v1.4h-1.4zM1346 219h1.4v1.4h-1.4zM1436 226h1.4v1.4h-1.4zM1336 211h1.4v1.4h-1.4zM1259 268h1.4v1.4h-1.4zM1353 209h1.4v1.4h-1.4zM1326 267h1.4v1.4h-1.4zM1400 233h1.4v1.4h-1.4zM1396 225h1.4v1.4h-1.4zM1275 247h1.4v1.4h-1.4zM1384 252h1.4v1.4h-1.4zM1302 250h1.4v1.4h-1.4zM1379 223h1.4v1.4h-1.4zM1352 230h1.4v1.4h-1.4zM1493 262h1.4v1.4h-1.4zM1248 263h1.4v1.4h-1.4zM1348 257h1.4v1.4h-1.4zM1395 233h1.4v1.4h-1.4zM1386 201h1.4v1.4h-1.4zM1472 265h1.4v1.4h-1.4zM1420 259h1.4v1.4h-1.4zM1299 235h1.4v1.4h-1.4zM1335 248h1.4v1.4h-1.4zM1440 264h1.4v1.4h-1.4zM1401 241h1.4v1.4h-1.4zM1482 243h1.4v1.4h-1.4zM1416 245h1.4v1.4h-1.4zM1322 262h1.4v1.4h-1.4zM1289 255h1.4v1.4h-1.4zM1285 255h1.4v1.4h-1.4zM1456 265h1.4v1.4h-1.4zM1408 223h1.4v1.4h-1.4zM1278 254h1.4v1.4h-1.4zM1407 240h1.4v1.4h-1.4zM1443 255h1.4v1.4h-1.4zM1292 249h1.4v1.4h-1.4zM1381 261h1.4v1.4h-1.4zM1510 266h1.4v1.4h-1.4zM1337 244h1.4v1.4h-1.4zM1464 268h1.4v1.4h-1.4zM1359 248h1.4v1.4h-1.4zM1399 235h1.4v1.4h-1.4zM1422 265h1.4v1.4h-1.4zM1483 245h1.4v1.4h-1.4zM1426 259h1.4v1.4h-1.4zM1315 269h1.4v1.4h-1.4zM1361 221h1.4v1.4h-1.4zM1384 195h1.4v1.4h-1.4zM1412 227h1.4v1.4h-1.4zM1279 257h1.4v1.4h-1.4zM1385 196h1.4v1.4h-1.4zM1265 254h1.4v1.4h-1.4zM1467 239h1.4v1.4h-1.4zM1345 231h1.4v1.4h-1.4zM1389 192h1.4v1.4h-1.4zM1369 260h1.4v1.4h-1.4zM1432 220h1.4v1.4h-1.4zM1429 266h1.4v1.4h-1.4zM1483 251h1.4v1.4h-1.4zM1322 246h1.4v1.4h-1.4zM1327 253h1.4v1.4h-1.4zM1269 255h1.4v1.4h-1.4zM1396 218h1.4v1.4h-1.4zM1474 241h1.4v1.4h-1.4zM1489 243h1.4v1.4h-1.4zM1483 241h1.4v1.4h-1.4zM1404 207h1.4v1.4h-1.4zM1324 250h1.4v1.4h-1.4zM1493 267h1.4v1.4h-1.4zM1308 264h1.4v1.4h-1.4zM1402 227h1.4v1.4h-1.4zM1297 261h1.4v1.4h-1.4zM1306 268h1.4v1.4h-1.4zM1363 224h1.4v1.4h-1.4zM1376 244h1.4v1.4h-1.4zM1433 212h1.4v1.4h-1.4zM1385 220h1.4v1.4h-1.4zM1405 221h1.4v1.4h-1.4zM1402 259h1.4v1.4h-1.4zM1324 221h1.4v1.4h-1.4zM1287 257h1.4v1.4h-1.4zM1337 240h1.4v1.4h-1.4zM1325 220h1.4v1.4h-1.4zM1347 210h1.4v1.4h-1.4zM1367 210h1.4v1.4h-1.4zM1441 228h1.4v1.4h-1.4zM1385 207h1.4v1.4h-1.4zM1327 265h1.4v1.4h-1.4zM1389 221h1.4v1.4h-1.4zM1394 197h1.4v1.4h-1.4zM1281 270h1.4v1.4h-1.4zM1354 255h1.4v1.4h-1.4zM1389 250h1.4v1.4h-1.4zM1306 258h1.4v1.4h-1.4zM1426 235h1.4v1.4h-1.4zM1383 192h1.4v1.4h-1.4zM1387 260h1.4v1.4h-1.4zM1468 255h1.4v1.4h-1.4zM1314 257h1.4v1.4h-1.4zM1285 256h1.4v1.4h-1.4zM1307 235h1.4v1.4h-1.4zM1464 255h1.4v1.4h-1.4zM1460 239h1.4v1.4h-1.4zM1447 234h1.4v1.4h-1.4zM1388 251h1.4v1.4h-1.4zM1440 251h1.4v1.4h-1.4zM1304 259h1.4v1.4h-1.4zM1468 245h1.4v1.4h-1.4zM1533 267h1.4v1.4h-1.4zM1372 208h1.4v1.4h-1.4zM1469 237h1.4v1.4h-1.4zM1342 253h1.4v1.4h-1.4zM1407 231h1.4v1.4h-1.4zM1390 206h1.4v1.4h-1.4zM1295 245h1.4v1.4h-1.4zM1381 226h1.4v1.4h-1.4zM1288 263h1.4v1.4h-1.4zM1375 199h1.4v1.4h-1.4zM1450 232h1.4v1.4h-1.4zM1408 249h1.4v1.4h-1.4zM1445 267h1.4v1.4h-1.4zM1406 212h1.4v1.4h-1.4zM1481 254h1.4v1.4h-1.4zM1336 232h1.4v1.4h-1.4zM1461 261h1.4v1.4h-1.4zM1462 229h1.4v1.4h-1.4zM1373 259h1.4v1.4h-1.4zM1447 266h1.4v1.4h-1.4zM1397 237h1.4v1.4h-1.4zM1416 239h1.4v1.4h-1.4zM1410 266h1.4v1.4h-1.4zM1489 249h1.4v1.4h-1.4zM1375 246h1.4v1.4h-1.4zM1402 220h1.4v1.4h-1.4zM1418 267h1.4v1.4h-1.4zM1300 240h1.4v1.4h-1.4zM1332 241h1.4v1.4h-1.4zM1366 224h1.4v1.4h-1.4zM1458 267h1.4v1.4h-1.4zM1403 231h1.4v1.4h-1.4zM1426 266h1.4v1.4h-1.4zM1323 230h1.4v1.4h-1.4zM1373 254h1.4v1.4h-1.4zM1472 250h1.4v1.4h-1.4zM1485 238h1.4v1.4h-1.4zM1463 249h1.4v1.4h-1.4zM1452 255h1.4v1.4h-1.4zM1291 243h1.4v1.4h-1.4zM1396 237h1.4v1.4h-1.4zM1310 230h1.4v1.4h-1.4zM1320 234h1.4v1.4h-1.4zM1381 261h1.4v1.4h-1.4zM1463 247h1.4v1.4h-1.4zM1339 270h1.4v1.4h-1.4zM1344 231h1.4v1.4h-1.4zM1429 253h1.4v1.4h-1.4zM1325 267h1.4v1.4h-1.4zM1292 258h1.4v1.4h-1.4zM1440 254h1.4v1.4h-1.4zM1276 254h1.4v1.4h-1.4zM1386 215h1.4v1.4h-1.4zM1352 262h1.4v1.4h-1.4zM1367 221h1.4v1.4h-1.4zM1390 247h1.4v1.4h-1.4zM1301 238h1.4v1.4h-1.4zM1482 253h1.4v1.4h-1.4zM1422 241h1.4v1.4h-1.4zM1343 215h1.4v1.4h-1.4zM1291 247h1.4v1.4h-1.4zM1396 215h1.4v1.4h-1.4zM1407 237h1.4v1.4h-1.4zM1446 237h1.4v1.4h-1.4zM1432 230h1.4v1.4h-1.4zM1303 246h1.4v1.4h-1.4zM1391 260h1.4v1.4h-1.4zM1343 226h1.4v1.4h-1.4zM1349 219h1.4v1.4h-1.4zM1395 251h1.4v1.4h-1.4zM1446 250h1.4v1.4h-1.4zM1341 235h1.4v1.4h-1.4zM1322 240h1.4v1.4h-1.4zM1411 268h1.4v1.4h-1.4zM1475 253h1.4v1.4h-1.4zM1340 240h1.4v1.4h-1.4zM1337 261h1.4v1.4h-1.4zM1384 213h1.4v1.4h-1.4zM1317 257h1.4v1.4h-1.4zM1379 237h1.4v1.4h-1.4zM1307 262h1.4v1.4h-1.4zM1509 261h1.4v1.4h-1.4zM1517 258h1.4v1.4h-1.4zM1473 239h1.4v1.4h-1.4zM1414 211h1.4v1.4h-1.4zM1404 242h1.4v1.4h-1.4zM1508 267h1.4v1.4h-1.4zM1398 210h1.4v1.4h-1.4zM1394 253h1.4v1.4h-1.4zM1276 267h1.4v1.4h-1.4zM1528 266h1.4v1.4h-1.4zM1501 264h1.4v1.4h-1.4zM1366 207h1.4v1.4h-1.4zM1327 254h1.4v1.4h-1.4zM1363 232h1.4v1.4h-1.4zM1432 220h1.4v1.4h-1.4zM1457 238h1.4v1.4h-1.4zM1365 202h1.4v1.4h-1.4zM1444 259h1.4v1.4h-1.4zM1411 205h1.4v1.4h-1.4zM1268 259h1.4v1.4h-1.4zM1461 246h1.4v1.4h-1.4zM1421 215h1.4v1.4h-1.4zM1303 254h1.4v1.4h-1.4zM1417 229h1.4v1.4h-1.4zM1313 228h1.4v1.4h-1.4zM1354 252h1.4v1.4h-1.4zM1353 226h1.4v1.4h-1.4zM1443 245h1.4v1.4h-1.4zM1347 209h1.4v1.4h-1.4zM1489 264h1.4v1.4h-1.4zM1283 249h1.4v1.4h-1.4zM1424 210h1.4v1.4h-1.4zM1394 204h1.4v1.4h-1.4zM1452 241h1.4v1.4h-1.4zM1320 249h1.4v1.4h-1.4zM1371 213h1.4v1.4h-1.4zM1392 236h1.4v1.4h-1.4zM1335 252h1.4v1.4h-1.4zM1361 207h1.4v1.4h-1.4zM1350 230h1.4v1.4h-1.4zM1295 262h1.4v1.4h-1.4zM1433 231h1.4v1.4h-1.4zM1383 269h1.4v1.4h-1.4zM1361 222h1.4v1.4h-1.4zM1395 258h1.4v1.4h-1.4zM1373 256h1.4v1.4h-1.4zM1422 221h1.4v1.4h-1.4zM1296 246h1.4v1.4h-1.4zM1492 249h1.4v1.4h-1.4zM1371 215h1.4v1.4h-1.4zM1353 263h1.4v1.4h-1.4zM1256 269h1.4v1.4h-1.4zM1388 228h1.4v1.4h-1.4zM1370 248h1.4v1.4h-1.4zM1414 201h1.4v1.4h-1.4zM1303 238h1.4v1.4h-1.4zM1383 245h1.4v1.4h-1.4zM1376 213h1.4v1.4h-1.4zM1452 248h1.4v1.4h-1.4zM1323 224h1.4v1.4h-1.4zM1451 267h1.4v1.4h-1.4zM1343 247h1.4v1.4h-1.4zM1501 254h1.4v1.4h-1.4zM1469 259h1.4v1.4h-1.4zM1366 236h1.4v1.4h-1.4zM1260 266h1.4v1.4h-1.4zM1409 222h1.4v1.4h-1.4zM1477 254h1.4v1.4h-1.4zM1434 248h1.4v1.4h-1.4zM1384 229h1.4v1.4h-1.4zM1366 219h1.4v1.4h-1.4zM1508 269h1.4v1.4h-1.4zM1332 259h1.4v1.4h-1.4zM1381 253h1.4v1.4h-1.4zM1366 233h1.4v1.4h-1.4zM1323 266h1.4v1.4h-1.4zM1373 260h1.4v1.4h-1.4zM1360 250h1.4v1.4h-1.4zM1488 269h1.4v1.4h-1.4zM1277 257h1.4v1.4h-1.4zM1396 191h1.4v1.4h-1.4zM1384 189h1.4v1.4h-1.4zM1343 228h1.4v1.4h-1.4zM1329 217h1.4v1.4h-1.4zM1442 260h1.4v1.4h-1.4zM1521 266h1.4v1.4h-1.4zM1280 247h1.4v1.4h-1.4zM1368 207h1.4v1.4h-1.4zM1366 267h1.4v1.4h-1.4zM1518 265h1.4v1.4h-1.4zM1337 213h1.4v1.4h-1.4zM1287 253h1.4v1.4h-1.4zM1454 244h1.4v1.4h-1.4zM1497 246h1.4v1.4h-1.4zM1338 258h1.4v1.4h-1.4zM1341 247h1.4v1.4h-1.4zM1325 252h1.4v1.4h-1.4zM1482 270h1.4v1.4h-1.4zM1488 258h1.4v1.4h-1.4zM1396 269h1.4v1.4h-1.4zM1388 196h1.4v1.4h-1.4zM1416 258h1.4v1.4h-1.4zM1449 237h1.4v1.4h-1.4zM1431 261h1.4v1.4h-1.4zM1374 202h1.4v1.4h-1.4zM1276 253h1.4v1.4h-1.4zM1297 262h1.4v1.4h-1.4zM1371 232h1.4v1.4h-1.4zM1300 242h1.4v1.4h-1.4zM1439 231h1.4v1.4h-1.4zM1384 200h1.4v1.4h-1.4zM1270 251h1.4v1.4h-1.4zM1381 195h1.4v1.4h-1.4zM1454 235h1.4v1.4h-1.4zM1442 233h1.4v1.4h-1.4zM1351 227h1.4v1.4h-1.4zM1360 232h1.4v1.4h-1.4zM1469 245h1.4v1.4h-1.4zM1350 217h1.4v1.4h-1.4zM1245 266h1.4v1.4h-1.4zM1452 266h1.4v1.4h-1.4zM1431 222h1.4v1.4h-1.4zM1270 249h1.4v1.4h-1.4zM1446 239h1.4v1.4h-1.4zM1517 265h1.4v1.4h-1.4zM1392 203h1.4v1.4h-1.4zM1368 229h1.4v1.4h-1.4zM1292 268h1.4v1.4h-1.4zM1254 268h1.4v1.4h-1.4zM1346 236h1.4v1.4h-1.4zM1340 220h1.4v1.4h-1.4zM1447 245h1.4v1.4h-1.4zM1258 265h1.4v1.4h-1.4z" fill="#1c1cd8"/>
<path d="M1401 224h1.6v1.6h-1.6zM1403 214h1.6v1.6h-1.6zM1399 210h1.6v1.6h-1.6zM1404 217h1.6v1.6h-1.6zM1395 226h1.6v1.6h-1.6zM1402 209h1.6v1.6h-1.6zM1408 216h1.6v1.6h-1.6zM1399 220h1.6v1.6h-1.6zM1399 222h1.6v1.6h-1.6zM1398 223h1.6v1.6h-1.6zM1406 216h1.6v1.6h-1.6zM1396 217h1.6v1.6h-1.6zM1396 212h1.6v1.6h-1.6zM1405 223h1.6v1.6h-1.6zM1394 213h1.6v1.6h-1.6zM1396 220h1.6v1.6h-1.6zM1402 221h1.6v1.6h-1.6zM1399 213h1.6v1.6h-1.6zM1393 211h1.6v1.6h-1.6zM1405 222h1.6v1.6h-1.6zM1396 218h1.6v1.6h-1.6zM1402 220h1.6v1.6h-1.6zM1406 209h1.6v1.6h-1.6zM1399 208h1.6v1.6h-1.6zM1410 218h1.6v1.6h-1.6zM1410 221h1.6v1.6h-1.6zM1408 206h1.6v1.6h-1.6zM1400 225h1.6v1.6h-1.6zM1399 218h1.6v1.6h-1.6zM1405 226h1.6v1.6h-1.6zM1410 221h1.6v1.6h-1.6zM1406 212h1.6v1.6h-1.6zM1395 212h1.6v1.6h-1.6zM1403 222h1.6v1.6h-1.6zM1401 208h1.6v1.6h-1.6zM1408 208h1.6v1.6h-1.6zM1406 213h1.6v1.6h-1.6zM1404 212h1.6v1.6h-1.6zM1409 221h1.6v1.6h-1.6zM1409 212h1.6v1.6h-1.6zM1396 214h1.6v1.6h-1.6zM1400 223h1.6v1.6h-1.6zM1405 225h1.6v1.6h-1.6zM1409 206h1.6v1.6h-1.6zM1402 222h1.6v1.6h-1.6zM1398 220h1.6v1.6h-1.6zM1400 208h1.6v1.6h-1.6zM1400 209h1.6v1.6h-1.6zM1402 226h1.6v1.6h-1.6zM1401 210h1.6v1.6h-1.6zM1408 220h1.6v1.6h-1.6zM1404 217h1.6v1.6h-1.6zM1407 213h1.6v1.6h-1.6zM1410 213h1.6v1.6h-1.6zM1401 221h1.6v1.6h-1.6zM1404 209h1.6v1.6h-1.6zM1401 219h1.6v1.6h-1.6zM1396 220h1.6v1.6h-1.6zM1395 215h1.6v1.6h-1.6zM1397 221h1.6v1.6h-1.6zM1403 222h1.6v1.6h-1.6zM1402 211h1.6v1.6h-1.6zM1408 206h1.6v1.6h-1.6zM1403 225h1.6v1.6h-1.6zM1397 210h1.6v1.6h-1.6zM1403 221h1.6v1.6h-1.6zM1402 217h1.6v1.6h-1.6zM1404 213h1.6v1.6h-1.6zM1401 224h1.6v1.6h-1.6zM1406 225h1.6v1.6h-1.6zM1409 216h1.6v1.6h-1.6zM1405 218h1.6v1.6h-1.6zM1411 224h1.6v1.6h-1.6zM1409 223h1.6v1.6h-1.6zM1405 215h1.6v1.6h-1.6zM1399 216h1.6v1.6h-1.6zM1397 213h1.6v1.6h-1.6zM1410 215h1.6v1.6h-1.6zM1410 213h1.6v1.6h-1.6zM1409 217h1.6v1.6h-1.6zM1396 220h1.6v1.6h-1.6zM1394 214h1.6v1.6h-1.6zM1398 220h1.6v1.6h-1.6zM1401 219h1.6v1.6h-1.6zM1400 215h1.6v1.6h-1.6zM1407 221h1.6v1.6h-1.6zM1398 215h1.6v1.6h-1.6zM1408 220h1.6v1.6h-1.6zM1396 218h1.6v1.6h-1.6zM1408 225h1.6v1.6h-1.6zM1399 218h1.6v1.6h-1.6zM1396 220h1.6v1.6h-1.6zM1404 216h1.6v1.6h-1.6zM1404 219h1.6v1.6h-1.6zM1406 212h1.6v1.6h-1.6zM1402 212h1.6v1.6h-1.6zM1404 216h1.6v1.6h-1.6zM1401 214h1.6v1.6h-1.6zM1406 214h1.6v1.6h-1.6zM1407 224h1.6v1.6h-1.6zM1394 210h1.6v1.6h-1.6zM1408 221h1.6v1.6h-1.6zM1397 225h1.6v1.6h-1.6zM1393 211h1.6v1.6h-1.6zM1396 227h1.6v1.6h-1.6zM1404 226h1.6v1.6h-1.6zM1400 211h1.6v1.6h-1.6zM1403 217h1.6v1.6h-1.6zM1405 208h1.6v1.6h-1.6zM1403 216h1.6v1.6h-1.6zM1409 217h1.6v1.6h-1.6zM1408 208h1.6v1.6h-1.6zM1408 208h1.6v1.6h-1.6zM1407 210h1.6v1.6h-1.6zM1404 222h1.6v1.6h-1.6zM1403 219h1.6v1.6h-1.6zM1403 215h1.6v1.6h-1.6zM1405 210h1.6v1.6h-1.6zM1402 211h1.6v1.6h-1.6zM1410 211h1.6v1.6h-1.6zM1403 226h1.6v1.6h-1.6zM1410 214h1.6v1.6h-1.6zM1399 222h1.6v1.6h-1.6zM1409 217h1.6v1.6h-1.6zM1396 217h1.6v1.6h-1.6zM1408 223h1.6v1.6h-1.6zM1404 222h1.6v1.6h-1.6zM1408 210h1.6v1.6h-1.6zM1408 220h1.6v1.6h-1.6zM1401 210h1.6v1.6h-1.6zM1396 216h1.6v1.6h-1.6zM1409 213h1.6v1.6h-1.6zM1403 208h1.6v1.6h-1.6zM1403 223h1.6v1.6h-1.6zM1398 210h1.6v1.6h-1.6zM1411 222h1.6v1.6h-1.6zM1398 226h1.6v1.6h-1.6zM1411 223h1.6v1.6h-1.6zM1397 212h1.6v1.6h-1.6zM1409 211h1.6v1.6h-1.6zM1409 219h1.6v1.6h-1.6zM1408 218h1.6v1.6h-1.6zM1407 218h1.6v1.6h-1.6zM1407 222h1.6v1.6h-1.6zM1402 222h1.6v1.6h-1.6zM1401 224h1.6v1.6h-1.6zM1407 206h1.6v1.6h-1.6zM1408 219h1.6v1.6h-1.6zM1395 218h1.6v1.6h-1.6zM1401 222h1.6v1.6h-1.6zM1397 225h1.6v1.6h-1.6zM1397 219h1.6v1.6h-1.6zM1406 225h1.6v1.6h-1.6zM1399 212h1.6v1.6h-1.6zM1402 210h1.6v1.6h-1.6zM1403 219h1.6v1.6h-1.6zM1404 209h1.6v1.6h-1.6zM1399 220h1.6v1.6h-1.6zM1406 212h1.6v1.6h-1.6zM1410 224h1.6v1.6h-1.6zM1408 219h1.6v1.6h-1.6zM1399 222h1.6v1.6h-1.6zM1394 213h1.6v1.6h-1.6zM1407 209h1.6v1.6h-1.6zM1409 225h1.6v1.6h-1.6z" fill="#27d0e8"/>
<path d="M1555 251h2v2h-2zM1540 259h2v2h-2zM1555 261h2v2h-2zM1559 248h2v2h-2zM1562 253h2v2h-2zM1555 257h2v2h-2zM1544 257h2v2h-2zM1554 250h2v2h-2zM1561 255h2v2h-2zM1550 259h2v2h-2zM1555 245h2v2h-2zM1545 261h2v2h-2zM1555 257h2v2h-2zM1542 260h2v2h-2zM1547 256h2v2h-2zM1557 239h2v2h-2zM1548 239h2v2h-2zM1553 254h2v2h-2zM1558 238h2v2h-2zM1536 250h2v2h-2zM1548 243h2v2h-2zM1558 260h2v2h-2zM1551 245h2v2h-2zM1556 255h2v2h-2zM1561 243h2v2h-2zM1542 244h2v2h-2zM1550 239h2v2h-2zM1550 252h2v2h-2zM1550 258h2v2h-2zM1559 237h2v2h-2zM1557 248h2v2h-2zM1541 248h2v2h-2zM1554 236h2v2h-2zM1559 257h2v2h-2zM1558 259h2v2h-2zM1551 248h2v2h-2zM1550 242h2v2h-2zM1556 248h2v2h-2zM1542 242h2v2h-2zM1556 239h2v2h-2zM1539 248h2v2h-2zM1554 250h2v2h-2zM1549 243h2v2h-2zM1542 259h2v2h-2zM1548 243h2v2h-2zM1558 244h2v2h-2zM1554 241h2v2h-2zM1552 241h2v2h-2zM1541 245h2v2h-2zM1552 258h2v2h-2zM1550 258h2v2h-2zM1541 243h2v2h-2zM1551 245h2v2h-2zM1555 244h2v2h-2zM1541 260h2v2h-2zM1542 253h2v2h-2zM1547 246h2v2h-2zM1552 258h2v2h-2zM1554 244h2v2h-2zM1537 246h2v2h-2zM1542 246h2v2h-2zM1539 258h2v2h-2zM1560 260h2v2h-2zM1559 259h2v2h-2zM1562 262h2v2h-2zM1539 248h2v2h-2zM1544 260h2v2h-2zM1561 241h2v2h-2zM1552 244h2v2h-2zM1549 242h2v2h-2zM1547 260h2v2h-2z" fill="#e03a10"/>
<path d="M1373 228 L1391 243 L1376 256 M1373 228 L1380 256 M1376 243 L1391 243" stroke="#fff" stroke-width="1.1" fill="none"/>
<path d="M1392 244 L1430 252" stroke="#30d8f0" stroke-width="3" stroke-dasharray="3 2"/>
<path d="M1316 156h1.5v1.5h-1.5zM1367 128h1.5v1.5h-1.5zM1316 155h1.5v1.5h-1.5zM1435 123h1.5v1.5h-1.5zM1548 169h1.5v1.5h-1.5zM1456 126h1.5v1.5h-1.5zM1431 115h1.5v1.5h-1.5zM1348 140h1.5v1.5h-1.5zM1406 109h1.5v1.5h-1.5zM1359 138h1.5v1.5h-1.5zM1322 145h1.5v1.5h-1.5zM1190 211h1.5v1.5h-1.5zM1555 173h1.5v1.5h-1.5zM1511 150h1.5v1.5h-1.5zM1342 150h1.5v1.5h-1.5zM1302 153h1.5v1.5h-1.5zM1216 189h1.5v1.5h-1.5zM1343 148h1.5v1.5h-1.5zM1475 139h1.5v1.5h-1.5zM1531 167h1.5v1.5h-1.5zM1337 140h1.5v1.5h-1.5zM1238 183h1.5v1.5h-1.5zM1285 160h1.5v1.5h-1.5zM1286 172h1.5v1.5h-1.5zM1475 135h1.5v1.5h-1.5zM1455 128h1.5v1.5h-1.5zM1277 165h1.5v1.5h-1.5zM1233 193h1.5v1.5h-1.5zM1202 196h1.5v1.5h-1.5zM1319 147h1.5v1.5h-1.5zM1313 159h1.5v1.5h-1.5zM1331 156h1.5v1.5h-1.5zM1367 127h1.5v1.5h-1.5zM1528 158h1.5v1.5h-1.5zM1561 181h1.5v1.5h-1.5zM1259 179h1.5v1.5h-1.5zM1458 126h1.5v1.5h-1.5zM1350 144h1.5v1.5h-1.5zM1177 217h1.5v1.5h-1.5zM1490 142h1.5v1.5h-1.5zM1315 157h1.5v1.5h-1.5zM1504 150h1.5v1.5h-1.5zM1234 184h1.5v1.5h-1.5zM1429 117h1.5v1.5h-1.5zM1222 194h1.5v1.5h-1.5zM1326 155h1.5v1.5h-1.5zM1407 114h1.5v1.5h-1.5zM1437 115h1.5v1.5h-1.5zM1492 145h1.5v1.5h-1.5zM1362 139h1.5v1.5h-1.5zM1545 172h1.5v1.5h-1.5zM1238 186h1.5v1.5h-1.5zM1385 119h1.5v1.5h-1.5zM1274 178h1.5v1.5h-1.5z" fill="#cfcfcf"/><!--/MAP-->
  </svg>
</div>

<!-- ============ RVIZ WINDOW ============ -->
<div class="a" id="rviz" style="left:0;top:257px;width:1562px;height:682px;background:#efefef;border-top-right-radius:12px">
  <div class="a" style="left:0;top:0;width:1561px;height:37px;background:#fafafa;border-top-right-radius:12px;border-bottom:1px solid #d3d3d3"></div>
  <div class="a" style="left:0;top:37px;width:1561px;height:22px;background:#efefef;border-bottom:1px solid #d0d0d0"></div>
  <div class="a" style="left:0;top:59px;width:1561px;height:38px;background:linear-gradient(#f7f7f7,#efefef);border-bottom:1px solid #c4c4c4"></div>
  <div class="a" style="left:1561px;top:12px;width:1px;height:670px;background:#5a1010"></div>
  <!-- title buttons -->
  <div class="a" style="left:1471px;top:20px;width:9px;height:1.2px;background:#444"></div>
  <div class="a" style="left:1505px;top:13px;width:9px;height:9px;border:1.1px solid #444"></div>
  <svg class="a" style="left:1537px;top:12px" width="12" height="12" viewBox="0 0 12 12"><path d="M1.5 1.5L10.5 10.5M10.5 1.5L1.5 10.5" stroke="#444" stroke-width="1.1"/></svg>
  <!-- toolbar icons -->
  <svg class="a" style="left:855px;top:70px" width="80" height="24" viewBox="0 0 80 24"><path d="M7 2 V16" stroke="#3b68a8" stroke-width="1.5"/><rect x="7" y="6" width="5" height="4" fill="none" stroke="#3b68a8" stroke-width="1.3"/><rect x="48.5" y="6.5" width="11" height="4" rx="1" fill="#9fc3ea" stroke="#3b68a8" stroke-width="1.2"/><path d="M60 15 L66 15 L63 18Z" fill="#444"/></svg>
  <!-- viewport side arrows -->
  <div class="a" style="left:561px;top:379px;width:0;height:0;border-right:5px solid #444;border-top:4px solid transparent;border-bottom:4px solid transparent"></div>
  <div class="a" style="left:1550px;top:379px;width:0;height:0;border-left:5px solid #444;border-top:4px solid transparent;border-bottom:4px solid transparent"></div>
  <div class="a" style="left:1533px;top:675px;width:27px;height:7px;background:#fff;border-radius:4px 4px 0 0;border:1px solid #999"></div>
  <!-- status bar -->
  <div class="a" style="left:0;top:675px;width:1561px;height:7px;background:#b9b9b9"></div>
</div>

<!--VP-->
<svg class="a" style="left:580px;top:364px" width="956" height="553" viewBox="580 364 956 553">
<rect x="580" y="364" width="956" height="553" fill="#313131"/>
<defs><clipPath id="fc"><polygon points="580,640 624,600 674,600 668,560 757,535 980,470 1040,511 1287,653 1380,722 1246,917 580,917"/></clipPath></defs>
<path clip-path="url(#fc)" d="M580 723L1400 272M580 773L1400 322M580 828L1400 377M580 893L1400 442M580 965L1400 514M580 1043L1400 592M580 1125L1400 674M580 1211L1400 760M580 1303L1400 852M460 132L585 917M460 132L637 917M460 132L735 917M460 132L850 917M460 132L990 917M460 132L1170 917M460 132L1400 917M460 132L1700 917M460 132L2100 917" stroke="#5c5c5c" stroke-width="1" fill="none"/>
<path d="M723 657h0M825 647h0M687 603h0M833 679h0M647 602h0M810 666h0M671 624h0M792 632h0M705 645h0M679 616h0M663 636h0M776 702h0M760 637h0M782 638h0M729 621h0M821 668h0M720 694h0M654 650h0M692 683h0M723 598h0M773 617h0M776 653h0M741 683h0M643 644h0M697 682h0M834 652h0M677 676h0M681 606h0M666 603h0M736 643h0M837 684h0M775 680h0M769 632h0M744 651h0M660 647h0M839 700h0M738 699h0M836 686h0M634 602h0M641 608h0M800 636h0M773 628h0M643 629h0M686 611h0M778 658h0M827 694h0M704 635h0M806 657h0M643 604h0M781 674h0M809 684h0M638 629h0M692 656h0M705 683h0M643 625h0M706 655h0M829 657h0M655 605h0M664 640h0M735 667h0M708 632h0M714 597h0M768 663h0M803 663h0M760 617h0M643 622h0M821 705h0M707 661h0M727 641h0M713 643h0M747 695h0M739 622h0M691 639h0M815 705h0M669 665h0M721 604h0M816 660h0M674 628h0M644 627h0M685 656h0M794 652h0M673 659h0M749 692h0M664 612h0M629 650h0M657 630h0M634 630h0M710 689h0M737 601h0M657 618h0M686 674h0M769 701h0M776 656h0M682 669h0M1139 632h0M1217 664h0M1015 603h0M1026 625h0M1087 668h0M1075 671h0M1128 628h0M1200 674h0M1112 621h0M1118 691h0M1080 616h0M1135 678h0M1105 616h0M1033 619h0M1042 630h0M1122 652h0M1017 615h0M1178 697h0M1228 643h0M1152 643h0M1085 644h0M1125 643h0M1036 649h0M1115 620h0M1107 600h0M1112 623h0M1079 612h0M1071 611h0M1179 681h0M1129 664h0M1219 695h0M1057 652h0M1128 621h0M1151 672h0M1023 645h0M1062 670h0M1098 656h0M1090 644h0M1199 646h0M1104 632h0M1105 633h0M1183 636h0M1222 666h0M1156 640h0M1152 615h0M1096 679h0M1136 685h0M1196 635h0M1188 638h0M1164 671h0M1109 649h0M1144 622h0M1161 676h0M1103 653h0M1050 666h0M1042 617h0M1066 611h0M1087 607h0M1141 611h0M1045 654h0M998 589h0M1144 608h0M1193 629h0M1202 668h0M1110 620h0M1159 705h0M1169 695h0M1097 670h0M1026 600h0M1142 692h0M1187 668h0M1026 606h0M1073 593h0M1216 691h0M1166 670h0M1132 681h0M1071 640h0M1137 667h0M1095 650h0M1045 651h0M1081 617h0M1181 640h0M1006 598h0M1073 632h0M1023 591h0M1018 611h0M1172 624h0M1027 624h0M1015 618h0M1171 629h0M1052 596h0M1131 623h0M1083 641h0M1139 699h0M1062 650h0M1170 646h0M1085 664h0M1203 660h0M1224 684h0M1149 690h0M1180 671h0M1141 605h0M1227 649h0M1207 685h0M1216 668h0M1145 701h0M1193 651h0M1017 631h0M1143 666h0M930 780h0M929 816h0M917 757h0M942 826h0M975 850h0M923 764h0M946 824h0M964 882h0M922 796h0M948 811h0M959 863h0M974 884h0M953 807h0M947 858h0M960 887h0M941 762h0M987 885h0M962 855h0M924 764h0M936 802h0M950 884h0M955 839h0M961 876h0M934 832h0M998 911h0M978 869h0M975 916h0M916 758h0M966 855h0M962 815h0M909 770h0M990 912h0M985 876h0M916 776h0M977 860h0M968 855h0M962 835h0M946 804h0M1069 840h0M1043 846h0M1011 772h0M1093 879h0M1065 863h0M1085 899h0M1055 880h0M1043 830h0M1027 812h0M1079 867h0M999 793h0M1023 810h0M1009 790h0M1054 881h0M1027 778h0M1018 774h0M987 766h0M1046 807h0M1074 867h0M1032 839h0M995 784h0M1053 833h0M1033 849h0M1035 842h0M1031 807h0M1016 819h0M1072 845h0M1022 824h0M1024 788h0M1053 812h0M993 771h0M1029 777h0M1015 767h0M1077 869h0M1057 864h0M1066 905h0M1063 900h0M1031 854h0M1077 888h0M1050 830h0M1038 832h0M995 879h0M949 841h0M911 823h0M1071 765h0M1091 833h0M908 915h0M1069 895h0M1066 828h0M980 838h0M898 890h0M913 898h0M1009 901h0M965 795h0M1035 776h0M1063 825h0M941 914h0M991 848h0M997 833h0M1048 799h0M974 866h0M957 834h0M1083 797h0M935 890h0M1046 840h0M1017 900h0M1003 853h0M1044 825h0M1095 904h0M922 818h0M912 862h0M941 892h0M1087 879h0M999 785h0M1139 735h0M1166 761h0M1144 720h0M1167 723h0M1132 759h0M1137 737h0M1166 748h0M1190 732h0M1172 783h0M1153 802h0M1143 740h0M1131 712h0M1125 773h0M1194 709h0M1131 805h0M1151 771h0M1151 779h0M1156 771h0M1134 741h0M1131 806h0M1140 795h0M1196 712h0M1139 772h0M1173 712h0M1147 767h0M1154 793h0M1133 756h0M871 768h0M890 726h0M889 753h0M921 717h0M855 725h0M884 749h0M875 746h0M873 770h0M836 760h0M906 772h0M920 759h0M920 771h0M920 732h0M893 730h0M1206 814h0M1235 756h0M1332 785h0M1291 830h0M1249 755h0M1255 761h0M1270 870h0M1350 775h0M1196 893h0M1228 745h0M1257 814h0M1289 779h0M1323 787h0M1217 837h0M1199 896h0M1308 787h0M1250 744h0M1231 859h0M1306 773h0M1271 853h0M1290 784h0M1225 853h0M1351 748h0M1257 832h0M1295 808h0M864 539h0M945 513h0M1011 529h0M929 544h0M878 567h0M1140 601h0M1074 631h0M1133 587h0M1130 608h0M1059 586h0M1087 598h0M1121 606h0M1106 599h0M1112 575h0M1070 567h0M596 797h0" stroke="#919191" stroke-width="5.6" stroke-linecap="round"/>
<path d="M735 660h0M665 652h0M766 663h0M720 689h0M737 666h0M733 669h0M832 689h0M625 618h0M644 632h0M650 622h0M746 645h0M650 642h0M671 625h0M671 639h0M832 649h0M749 691h0M664 612h0M785 699h0M676 673h0M640 620h0M774 660h0M729 676h0M820 692h0M812 659h0M784 659h0M720 688h0M690 670h0M669 614h0M751 630h0M722 626h0M629 610h0M655 600h0M826 675h0M760 696h0M706 658h0M815 683h0M829 646h0M837 703h0M730 598h0M655 612h0M807 657h0M808 695h0M749 617h0M741 641h0M832 697h0M666 664h0M702 664h0M706 641h0M739 613h0M763 654h0M785 685h0M734 679h0M696 647h0M776 689h0M664 645h0M777 691h0M786 681h0M763 664h0M758 677h0M636 617h0M706 606h0M754 679h0M662 650h0M767 657h0M678 600h0M781 647h0M739 609h0M721 669h0M751 642h0M793 654h0M784 621h0M794 664h0M823 693h0M744 665h0M786 688h0M695 656h0M717 636h0M671 668h0M823 699h0M822 644h0M679 635h0M710 638h0M667 658h0M743 658h0M834 667h0M784 695h0M765 622h0M673 680h0M834 670h0M803 669h0M832 666h0M785 705h0M665 619h0M729 620h0M798 638h0M659 612h0M813 652h0M729 647h0M692 629h0M703 671h0M747 646h0M806 661h0M659 609h0M713 603h0M629 632h0M820 656h0M750 672h0M703 646h0M742 657h0M802 662h0M743 603h0M632 615h0M838 699h0M770 677h0M656 638h0M760 672h0M806 690h0M739 653h0M782 695h0M787 629h0M822 702h0M747 695h0M652 655h0M818 686h0M711 635h0M806 634h0M727 614h0M636 607h0M673 629h0M664 621h0M769 683h0M705 668h0M740 600h0M745 667h0M703 668h0M720 681h0M676 649h0M682 660h0M731 680h0M723 678h0M633 622h0M790 676h0M675 623h0M704 632h0M812 661h0M672 634h0M671 647h0M692 645h0M708 603h0M695 638h0M695 681h0M692 642h0M688 633h0M770 697h0M696 650h0M699 642h0M658 660h0M637 650h0M752 647h0M630 634h0M758 701h0M703 659h0M829 681h0M1123 653h0M1021 633h0M1069 660h0M1075 626h0M1195 667h0M1204 644h0M1080 608h0M1121 634h0M1170 656h0M1022 625h0M1178 683h0M1135 694h0M1126 675h0M1215 680h0M1219 631h0M1170 699h0M1014 592h0M1160 689h0M1082 647h0M1096 646h0M1069 628h0M1160 661h0M1094 628h0M1077 668h0M1152 619h0M1076 674h0M1049 637h0M1183 629h0M1105 633h0M1108 611h0M1036 609h0M1041 591h0M1065 600h0M1115 645h0M1064 641h0M1211 648h0M1099 654h0M1189 683h0M1070 618h0M1185 660h0M1230 691h0M1162 678h0M1204 656h0M1221 664h0M1052 665h0M1151 669h0M1217 696h0M1181 628h0M1027 640h0M1011 607h0M1073 679h0M1223 693h0M1101 604h0M1151 669h0M1002 598h0M1095 636h0M1101 642h0M1180 642h0M1068 674h0M1180 652h0M1059 661h0M1137 672h0M1135 618h0M1075 674h0M1132 651h0M1107 651h0M1113 670h0M1050 644h0M1190 656h0M1051 615h0M1193 696h0M1082 672h0M1084 616h0M1022 591h0M1062 667h0M1108 623h0M1083 618h0M1176 662h0M1109 651h0M1124 681h0M1105 635h0M1178 658h0M1135 609h0M1077 657h0M1012 593h0M1046 593h0M1037 644h0M1042 663h0M1143 698h0M1058 673h0M1179 655h0M1088 599h0M1140 696h0M1149 609h0M1090 644h0M1044 628h0M1165 633h0M1067 677h0M1202 631h0M1064 627h0M1078 589h0M1053 645h0M1219 638h0M1073 636h0M1159 653h0M1170 692h0M1140 649h0M1029 660h0M1098 659h0M1068 632h0M1103 660h0M1144 626h0M1117 605h0M1128 626h0M1115 664h0M1084 632h0M1164 659h0M1143 679h0M1151 633h0M1095 632h0M1150 618h0M1186 697h0M1069 633h0M1149 693h0M1205 630h0M1067 639h0M1105 659h0M1035 651h0M1059 668h0M1231 687h0M1037 616h0M1210 695h0M1110 604h0M1151 673h0M1106 644h0M1160 672h0M1071 605h0M1072 679h0M1105 631h0M1215 659h0M1159 613h0M1210 690h0M1065 623h0M1138 685h0M1087 621h0M1068 602h0M1129 647h0M1117 682h0M1195 694h0M1169 668h0M1107 651h0M1143 659h0M1072 591h0M1170 687h0M1227 673h0M1195 687h0M1008 596h0M1103 668h0M1169 683h0M1056 616h0M1050 638h0M1213 667h0M1138 689h0M1075 630h0M1063 670h0M1021 625h0M1091 604h0M1061 652h0M1138 690h0M1049 624h0M1180 657h0M1096 651h0M1063 623h0M1208 630h0M1043 589h0M1013 608h0M1068 616h0M1195 674h0M1056 607h0M1068 594h0M1206 630h0M1125 673h0M1222 670h0M945 795h0M954 862h0M950 865h0M929 769h0M954 872h0M900 760h0M943 838h0M977 912h0M956 872h0M966 905h0M962 832h0M965 861h0M947 875h0M962 856h0M974 858h0M983 877h0M962 910h0M952 801h0M936 795h0M918 766h0M958 802h0M919 780h0M955 857h0M914 787h0M992 898h0M959 860h0M951 835h0M967 884h0M929 801h0M963 874h0M957 804h0M915 764h0M917 762h0M965 909h0M960 853h0M935 785h0M926 818h0M945 792h0M929 806h0M926 780h0M919 802h0M951 889h0M934 822h0M921 803h0M922 791h0M980 874h0M929 766h0M943 847h0M956 874h0M957 815h0M978 908h0M972 868h0M929 833h0M963 822h0M969 852h0M933 822h0M959 896h0M973 850h0M927 799h0M978 862h0M957 905h0M932 801h0M929 817h0M979 873h0M953 873h0M968 893h0M972 909h0M941 761h0M916 788h0M919 773h0M937 793h0M978 893h0M937 764h0M952 818h0M957 858h0M1016 800h0M1069 862h0M1015 807h0M1030 854h0M1022 832h0M1022 764h0M985 769h0M1082 885h0M1034 834h0M1014 820h0M1006 770h0M1002 788h0M1089 896h0M1021 766h0M1064 840h0M1090 876h0M1073 845h0M1062 843h0M1036 788h0M1022 835h0M1053 839h0M1038 860h0M1059 891h0M1088 888h0M1037 868h0M1018 807h0M1007 766h0M1035 788h0M982 763h0M1058 866h0M1032 793h0M1022 815h0M1062 862h0M1077 879h0M1045 863h0M1021 776h0M1004 793h0M1094 887h0M1045 831h0M1046 870h0M1037 804h0M1037 802h0M1021 840h0M1081 900h0M1043 830h0M1052 842h0M1035 869h0M1065 888h0M1006 783h0M1011 796h0M1045 863h0M1028 792h0M1049 821h0M1060 864h0M994 783h0M1026 773h0M1032 779h0M1074 909h0M1014 776h0M1048 872h0M1043 799h0M984 805h0M997 800h0M968 878h0M1054 818h0M1005 872h0M939 883h0M921 845h0M1022 868h0M1028 873h0M1010 784h0M998 804h0M881 840h0M944 902h0M949 894h0M1050 878h0M1050 793h0M1024 870h0M893 856h0M1043 790h0M898 888h0M881 899h0M972 874h0M926 841h0M1093 912h0M899 893h0M930 879h0M1089 894h0M1050 885h0M1026 851h0M937 826h0M993 832h0M897 817h0M1081 819h0M1070 900h0M1008 910h0M947 817h0M1002 853h0M992 846h0M926 881h0M974 853h0M949 895h0M1050 894h0M925 802h0M986 815h0M943 854h0M953 865h0M996 811h0M888 903h0M1000 786h0M1008 868h0M1011 779h0M964 868h0M999 811h0M1094 892h0M1093 790h0M1123 785h0M1152 746h0M1146 772h0M1153 794h0M1166 730h0M1193 705h0M1167 711h0M1172 715h0M1122 811h0M1174 803h0M1153 761h0M1163 718h0M1188 784h0M1154 803h0M1186 803h0M1184 786h0M1171 723h0M1136 759h0M1117 769h0M1168 801h0M1126 801h0M1168 754h0M1121 717h0M1159 716h0M1152 723h0M1169 743h0M1177 739h0M1127 768h0M1186 804h0M1195 763h0M1183 780h0M1182 770h0M1140 703h0M1135 762h0M1179 808h0M1161 728h0M1179 776h0M1168 805h0M1168 803h0M1175 795h0M1184 721h0M1147 717h0M1186 778h0M1178 750h0M1181 755h0M1136 706h0M1138 722h0M1120 781h0M1172 754h0M1157 727h0M1133 783h0M1132 749h0M1126 719h0M1159 710h0M1169 708h0M1172 759h0M1176 707h0M1193 797h0M1141 700h0M1153 811h0M1179 771h0M1167 721h0M1129 749h0M1196 727h0M1149 789h0M1186 734h0M1174 810h0M1197 767h0M1193 766h0M1139 801h0M1171 771h0M1152 740h0M1175 704h0M1155 784h0M921 731h0M848 768h0M849 758h0M906 714h0M840 711h0M921 709h0M861 739h0M855 767h0M847 740h0M912 738h0M913 723h0M918 758h0M874 770h0M851 762h0M843 707h0M880 711h0M1337 740h0M1197 822h0M1217 863h0M1203 884h0M1195 779h0M1244 797h0M1236 817h0M1203 793h0M1261 822h0M1252 817h0M1324 856h0M1224 759h0M1339 827h0M1213 828h0M1215 821h0M1257 769h0M1206 771h0M1269 749h0M1366 741h0M1205 759h0M1360 772h0M1202 792h0M1281 873h0M1283 803h0M1203 780h0M1349 783h0M1242 867h0M1325 738h0M1356 749h0M1204 860h0M1343 810h0M1224 854h0M1241 831h0M1270 754h0M1326 852h0M1263 787h0M1300 846h0M1310 820h0M1266 763h0M801 562h0M895 554h0M966 572h0M893 583h0M1021 539h0M955 521h0M889 558h0M875 559h0M798 576h0M889 565h0M836 582h0M913 569h0M1002 538h0M1120 576h0M1076 572h0M1108 592h0M1115 627h0M1126 622h0M1134 614h0M1100 576h0M1110 616h0M1141 602h0M1041 570h0M1088 569h0M1102 617h0M1056 619h0M1054 562h0M1055 556h0M1068 577h0M1081 571h0M1147 601h0M1059 564h0M1058 615h0M1059 590h0M612 736h0M597 810h0M595 835h0M624 771h0M587 732h0" stroke="#6a6a6a" stroke-width="5.6" stroke-linecap="round"/>
<path d="M761 683h0M666 622h0M631 646h0M840 706h0M806 674h0M693 620h0M791 639h0M808 638h0M822 647h0M677 662h0M821 686h0M816 662h0M716 607h0M754 628h0M746 690h0M758 626h0M629 625h0M721 602h0M749 610h0M641 656h0M796 697h0M701 671h0M751 663h0M799 696h0M806 689h0M779 700h0M685 614h0M778 658h0M799 701h0M728 615h0M627 647h0M684 633h0M710 683h0M653 645h0M764 675h0M806 672h0M829 650h0M673 653h0M763 653h0M692 637h0M834 653h0M741 651h0M712 684h0M747 650h0M683 648h0M652 643h0M801 695h0M667 620h0M773 631h0M679 617h0M809 663h0M805 642h0M744 652h0M748 611h0M665 618h0M806 705h0M725 680h0M785 640h0M667 613h0M818 684h0M699 647h0M768 658h0M776 680h0M680 640h0M739 661h0M686 675h0M718 648h0M755 608h0M760 646h0M669 601h0M723 624h0M773 658h0M684 642h0M670 633h0M800 664h0M717 624h0M786 697h0M747 649h0M782 672h0M798 629h0M797 655h0M743 682h0M710 632h0M798 642h0M706 614h0M753 620h0M801 648h0M767 621h0M627 647h0M779 662h0M763 705h0M742 653h0M641 629h0M726 674h0M628 637h0M778 621h0M710 669h0M783 632h0M771 674h0M644 620h0M791 686h0M712 673h0M837 683h0M699 667h0M648 637h0M701 651h0M746 624h0M668 647h0M748 614h0M748 632h0M694 601h0M783 661h0M734 639h0M676 603h0M769 691h0M673 678h0M691 650h0M727 618h0M775 699h0M733 615h0M734 689h0M756 621h0M795 683h0M733 599h0M754 674h0M719 644h0M759 653h0M662 623h0M704 619h0M710 628h0M744 622h0M634 640h0M699 672h0M816 646h0M707 682h0M665 656h0M660 618h0M664 624h0M703 612h0M743 610h0M778 624h0M713 638h0M672 600h0M747 685h0M638 638h0M685 613h0M712 648h0M661 669h0M818 658h0M665 647h0M1083 639h0M1104 595h0M1092 615h0M1072 646h0M1137 626h0M1115 649h0M1145 654h0M1097 669h0M1102 677h0M1087 641h0M1101 603h0M1127 602h0M1223 655h0M1096 652h0M1136 613h0M1081 658h0M1134 688h0M1106 646h0M1163 655h0M1124 660h0M1058 604h0M1065 621h0M1124 666h0M1059 595h0M1105 632h0M1183 650h0M1131 605h0M1164 699h0M1216 689h0M1114 658h0M1143 698h0M1080 591h0M1180 620h0M1111 681h0M1077 617h0M1157 681h0M1178 618h0M1066 658h0M1173 645h0M1116 634h0M1032 613h0M1158 692h0M1169 700h0M1026 621h0M1132 678h0M1016 625h0M1117 608h0M1187 647h0M1070 594h0M1059 661h0M1145 626h0M1135 638h0M1199 692h0M1053 657h0M1221 646h0M1214 669h0M1186 672h0M1114 634h0M1081 592h0M1062 611h0M1064 650h0M1110 676h0M1057 612h0M1135 617h0M1075 597h0M1149 637h0M1094 617h0M1160 678h0M1168 674h0M1106 640h0M1174 636h0M1137 626h0M1072 662h0M1095 625h0M1050 636h0M1164 655h0M1115 609h0M1155 623h0M1032 660h0M1161 686h0M1083 652h0M1072 641h0M1102 639h0M1130 631h0M1138 620h0M1154 670h0M1116 637h0M1090 648h0M1195 669h0M1090 664h0M1157 614h0M1049 598h0M1224 654h0M1163 704h0M1088 673h0M1114 596h0M1086 628h0M1033 658h0M1116 647h0M1043 644h0M1197 661h0M1174 678h0M1036 593h0M1132 648h0M1137 635h0M1165 695h0M1229 676h0M1210 657h0M1196 666h0M1093 655h0M1084 670h0M1072 676h0M1107 669h0M1133 668h0M1021 593h0M1106 685h0M1200 633h0M1028 660h0M1129 657h0M1188 635h0M1092 645h0M1034 606h0M1178 641h0M1112 604h0M1177 628h0M1227 637h0M1151 630h0M1197 634h0M1072 601h0M1110 613h0M1064 674h0M1187 627h0M1097 630h0M1134 604h0M1020 637h0M1134 694h0M1224 678h0M1096 649h0M1032 595h0M1108 655h0M1127 600h0M1046 643h0M1088 608h0M1191 699h0M1047 603h0M1137 687h0M1088 610h0M1169 682h0M1109 682h0M1135 650h0M1191 689h0M1131 606h0M1063 598h0M1165 675h0M1103 621h0M1077 637h0M1150 660h0M1019 614h0M1179 649h0M1154 627h0M1197 688h0M1192 655h0M1104 669h0M1127 602h0M1171 661h0M1141 684h0M1092 590h0M1139 638h0M1187 629h0M1123 615h0M1113 650h0M1089 597h0M1155 695h0M1115 641h0M1164 628h0M1180 632h0M1225 677h0M1216 652h0M1046 640h0M1091 682h0M908 773h0M952 812h0M994 917h0M944 852h0M941 859h0M946 778h0M959 907h0M956 871h0M955 804h0M975 890h0M928 827h0M960 841h0M932 759h0M914 764h0M958 817h0M935 773h0M917 799h0M969 874h0M969 903h0M940 864h0M961 852h0M982 904h0M959 899h0M928 767h0M969 886h0M977 873h0M941 806h0M936 751h0M928 825h0M921 782h0M947 847h0M983 894h0M949 838h0M940 750h0M981 898h0M933 823h0M963 898h0M937 791h0M923 767h0M912 770h0M973 906h0M976 881h0M966 854h0M970 842h0M941 789h0M956 865h0M940 837h0M950 856h0M943 864h0M949 818h0M968 849h0M946 877h0M1082 868h0M1022 840h0M1055 893h0M1070 855h0M1040 863h0M1010 819h0M997 793h0M1005 784h0M1027 846h0M1063 916h0M1064 871h0M1063 869h0M1060 903h0M1041 823h0M1057 829h0M1069 907h0M1089 876h0M1040 848h0M1024 818h0M1023 772h0M1015 796h0M1051 872h0M1063 900h0M1093 911h0M1059 873h0M1028 778h0M991 771h0M1041 850h0M1045 831h0M1070 895h0M1041 860h0M1028 844h0M987 767h0M1073 880h0M1057 879h0M1010 802h0M1032 781h0M995 770h0M1032 806h0M1024 770h0M1002 794h0M1042 845h0M1007 807h0M1009 797h0M1047 863h0M1045 865h0M1087 880h0M1062 914h0M1049 834h0M1043 828h0M1040 871h0M1036 802h0M1047 885h0M1055 889h0M1016 787h0M1047 865h0M1041 797h0M1046 814h0M983 761h0M1013 819h0M896 902h0M991 864h0M1011 800h0M1044 858h0M888 846h0M1094 863h0M1025 906h0M981 843h0M953 829h0M1012 809h0M1068 777h0M893 877h0M1070 788h0M1076 803h0M1073 853h0M1040 795h0M943 816h0M941 916h0M889 816h0M1086 817h0M889 883h0M985 880h0M919 819h0M1091 761h0M977 813h0M982 793h0M906 800h0M1082 838h0M1072 800h0M1059 900h0M905 846h0M914 848h0M894 815h0M1047 867h0M1086 769h0M1089 854h0M1076 811h0M982 834h0M1058 825h0M938 800h0M926 807h0M1029 877h0M997 783h0M1095 832h0M1061 799h0M908 803h0M1046 788h0M1025 839h0M969 851h0M884 878h0M1054 915h0M906 812h0M1091 913h0M982 828h0M1000 891h0M1181 793h0M1157 778h0M1151 726h0M1150 748h0M1121 800h0M1148 736h0M1191 748h0M1123 774h0M1193 703h0M1132 726h0M1169 716h0M1118 734h0M1161 723h0M1117 772h0M1173 804h0M1183 730h0M1180 766h0M1159 723h0M1163 748h0M1194 801h0M1128 702h0M1190 716h0M1116 712h0M1164 740h0M1191 765h0M1192 708h0M1151 803h0M1164 743h0M1186 702h0M1170 727h0M1173 787h0M1152 731h0M1180 727h0M1188 779h0M1126 716h0M1171 718h0M1186 773h0M1168 767h0M1194 808h0M1126 754h0M1164 785h0M1145 730h0M1183 802h0M1145 714h0M1152 802h0M1189 747h0M1182 763h0M1182 794h0M1128 721h0M1150 724h0M1118 719h0M1174 714h0M1173 751h0M1134 738h0M1116 707h0M1191 793h0M1145 804h0M1147 783h0M1160 708h0M1182 805h0M835 747h0M886 721h0M906 741h0M906 734h0M845 738h0M868 730h0M836 760h0M894 745h0M899 736h0M909 713h0M876 766h0M866 742h0M908 771h0M851 721h0M865 760h0M855 714h0M880 719h0M917 756h0M900 744h0M858 744h0M900 723h0M1223 762h0M1227 802h0M1360 742h0M1264 771h0M1294 830h0M1232 880h0M1233 854h0M1334 792h0M1229 854h0M1345 770h0M1196 874h0M1357 770h0M1230 823h0M1238 795h0M1195 778h0M1285 818h0M1261 786h0M1227 744h0M1233 817h0M1220 802h0M1236 863h0M1285 826h0M1243 850h0M1291 770h0M1208 887h0M1272 860h0M1263 867h0M1210 845h0M1365 742h0M1375 742h0M1239 842h0M1251 865h0M1341 746h0M1277 778h0M1204 812h0M1354 786h0M1200 835h0M1305 853h0M1246 806h0M1213 797h0M1201 831h0M1270 788h0M1219 802h0M1204 799h0M970 558h0M927 539h0M1005 527h0M900 542h0M1031 526h0M852 574h0M782 560h0M926 538h0M914 548h0M871 563h0M908 566h0M944 521h0M958 518h0M919 547h0M989 512h0M860 545h0M988 529h0M990 554h0M970 533h0M945 515h0M965 555h0M849 579h0M890 582h0M939 563h0M944 581h0M968 523h0M1079 596h0M1070 577h0M1088 568h0M1094 608h0M1064 564h0M1055 566h0M1103 595h0M1113 598h0M1096 639h0M1108 603h0M1092 619h0M1111 579h0M1164 602h0M1044 545h0M1053 571h0M1087 571h0M1057 593h0M1118 623h0M1045 550h0M635 907h0M601 885h0" stroke="#7e7e7e" stroke-width="5.6" stroke-linecap="round"/>
<path d="M645 629h0M837 702h0M739 602h0M724 626h0M666 676h0M653 666h0M835 684h0M689 603h0M644 660h0M784 695h0M784 673h0M715 683h0M776 650h0M758 697h0M696 669h0M668 643h0M671 641h0M760 650h0M761 645h0M761 668h0M758 679h0M766 618h0M781 686h0M744 680h0M737 675h0M688 676h0M728 630h0M652 652h0M740 643h0M669 665h0M712 671h0M629 617h0M772 696h0M734 671h0M736 597h0M761 640h0M755 651h0M801 640h0M819 693h0M790 640h0M627 634h0M740 638h0M834 658h0M704 627h0M703 625h0M753 665h0M742 603h0M706 648h0M766 705h0M642 604h0M702 676h0M704 608h0M694 639h0M738 680h0M732 655h0M805 694h0M738 674h0M716 611h0M669 642h0M638 646h0M751 696h0M633 607h0M676 675h0M665 626h0M743 701h0M739 652h0M695 624h0M683 654h0M808 686h0M831 660h0M795 641h0M648 639h0M804 668h0M758 627h0M689 632h0M680 617h0M781 632h0M735 683h0M780 688h0M677 659h0M767 629h0M737 624h0M832 662h0M789 678h0M652 645h0M716 684h0M678 628h0M695 602h0M827 703h0M782 630h0M819 692h0M825 669h0M685 666h0M720 654h0M755 627h0M725 678h0M773 653h0M748 655h0M660 672h0M804 682h0M638 641h0M717 603h0M774 635h0M779 625h0M790 675h0M710 621h0M634 612h0M782 669h0M672 672h0M717 639h0M677 605h0M710 635h0M639 640h0M695 623h0M1020 618h0M1093 622h0M1230 686h0M1191 681h0M1176 657h0M1074 675h0M1217 647h0M1161 634h0M1083 657h0M1053 620h0M1059 597h0M1193 633h0M1167 640h0M1144 654h0M1050 612h0M1216 670h0M1168 623h0M1060 618h0M1058 623h0M1200 660h0M1117 655h0M1220 666h0M1042 651h0M1160 650h0M1228 687h0M1136 651h0M1121 619h0M1053 624h0M1185 633h0M1167 700h0M1043 605h0M1041 603h0M1076 656h0M1140 688h0M1093 595h0M1160 630h0M1130 647h0M1216 649h0M1087 589h0M1134 663h0M1197 648h0M1119 629h0M1181 670h0M1120 626h0M1202 652h0M1011 597h0M1070 615h0M1202 649h0M1185 672h0M1156 676h0M1178 676h0M1146 694h0M1069 670h0M1088 621h0M1040 603h0M1172 620h0M1144 607h0M1197 653h0M1162 627h0M1067 620h0M1128 692h0M1126 649h0M1220 640h0M1178 628h0M1169 678h0M1042 647h0M1156 662h0M1114 634h0M1054 611h0M1007 602h0M1024 612h0M1038 652h0M1029 634h0M1183 671h0M1075 621h0M1169 689h0M1181 663h0M1185 623h0M1106 648h0M1215 646h0M1157 614h0M1077 606h0M1109 624h0M1170 643h0M1018 619h0M1043 603h0M1150 644h0M1182 667h0M1023 605h0M1085 642h0M1075 655h0M1032 594h0M1089 631h0M1102 687h0M1127 636h0M1077 646h0M1079 677h0M1110 633h0M1176 646h0M1172 625h0M1205 680h0M1111 629h0M1110 640h0M1218 695h0M1056 643h0M1110 676h0M1155 670h0M1107 613h0M1162 696h0M1082 629h0M1142 632h0M1132 662h0M1156 619h0M1141 626h0M1232 693h0M1230 658h0M1050 606h0M1097 632h0M1022 592h0M1142 691h0M1053 669h0M935 791h0M949 800h0M960 830h0M944 863h0M948 798h0M961 873h0M939 816h0M947 795h0M951 819h0M918 783h0M927 781h0M984 891h0M917 803h0M922 776h0M908 763h0M994 903h0M943 798h0M948 789h0M969 913h0M921 789h0M917 793h0M953 885h0M963 904h0M991 910h0M954 859h0M932 758h0M979 870h0M991 892h0M941 832h0M949 835h0M961 827h0M921 767h0M938 797h0M935 829h0M922 763h0M914 784h0M942 827h0M940 825h0M1053 868h0M1039 824h0M1049 877h0M1045 844h0M1047 843h0M1076 876h0M1078 855h0M1067 876h0M990 766h0M1005 763h0M1029 820h0M1021 763h0M1042 815h0M1064 863h0M1066 869h0M1041 878h0M1047 805h0M1083 916h0M999 783h0M1035 847h0M1034 851h0M1085 910h0M1085 915h0M1064 850h0M1032 817h0M1066 906h0M1041 868h0M998 788h0M1016 803h0M1044 849h0M1004 793h0M1011 804h0M1044 869h0M1063 840h0M1076 882h0M1055 861h0M1093 890h0M1096 914h0M1038 809h0M1004 770h0M1031 853h0M1081 889h0M983 761h0M1035 784h0M1008 789h0M1074 877h0M1090 905h0M1023 810h0M1022 788h0M1008 808h0M1066 907h0M995 784h0M1044 877h0M1033 792h0M1015 822h0M1013 760h0M1057 899h0M1043 875h0M1031 804h0M1036 806h0M1061 847h0M1066 839h0M981 851h0M1061 785h0M1003 799h0M1085 860h0M1063 852h0M920 849h0M881 807h0M930 860h0M963 833h0M932 797h0M952 877h0M1016 901h0M1094 899h0M991 904h0M1089 861h0M928 829h0M961 818h0M1066 859h0M943 830h0M938 840h0M1062 820h0M1052 886h0M1047 779h0M938 865h0M927 911h0M977 889h0M971 862h0M956 911h0M1025 839h0M919 822h0M969 904h0M1165 788h0M1198 801h0M1151 713h0M1188 723h0M1176 781h0M1194 788h0M1184 717h0M1156 776h0M1155 741h0M1131 765h0M1168 761h0M1138 730h0M1189 736h0M1195 707h0M1166 743h0M1147 732h0M1163 761h0M1163 723h0M1172 790h0M1138 745h0M1120 774h0M1143 782h0M1193 762h0M1152 775h0M1190 711h0M1188 735h0M1146 711h0M1179 790h0M1155 772h0M1165 739h0M1160 740h0M1121 801h0M1158 709h0M1196 741h0M1157 713h0M1120 748h0M1183 711h0M1181 716h0M1165 712h0M1146 745h0M1159 712h0M1157 700h0M1179 751h0M1122 739h0M925 734h0M861 715h0M914 734h0M842 724h0M870 724h0M909 722h0M879 737h0M844 725h0M894 753h0M863 753h0M891 745h0M919 740h0M925 751h0M882 740h0M1312 834h0M1330 788h0M1326 792h0M1313 851h0M1216 809h0M1194 873h0M1348 746h0M1356 762h0M1279 803h0M1327 760h0M1212 835h0M1266 860h0M1294 767h0M1201 748h0M1286 772h0M1301 842h0M1308 806h0M1276 741h0M1326 835h0M1223 785h0M1251 786h0M1318 743h0M1360 743h0M1278 750h0M1018 539h0M898 571h0M956 534h0M928 521h0M819 577h0M983 547h0M952 546h0M901 547h0M784 557h0M778 566h0M844 584h0M929 566h0M1029 540h0M1086 635h0M1047 613h0M1061 627h0M1043 549h0M1088 571h0M1083 604h0M1118 608h0M1121 578h0M1054 563h0M1133 585h0M581 872h0M659 881h0M581 749h0M698 913h0M599 830h0" stroke="#161616" stroke-width="5.6" stroke-linecap="round"/>
<path d="M798 621h0M792 618h0M824 598h0M793 603h0M822 621h0M830 619h0M837 610h0M838 612h0M799 621h0M788 604h0M794 616h0M786 610h0M822 621h0M797 619h0M799 620h0M828 600h0M825 623h0M816 596h0M807 599h0M831 622h0M805 597h0M832 621h0M829 620h0M824 623h0M788 608h0M801 618h0M795 600h0M835 616h0M835 615h0M788 609h0M791 615h0M825 600h0M790 616h0M815 623h0M836 604h0M795 619h0M821 621h0M837 608h0M804 624h0M823 600h0M786 609h0M813 598h0M788 604h0M818 625h0M794 615h0M840 606h0M823 598h0M827 600h0M834 603h0M797 621h0" stroke="#858585" stroke-width="5" stroke-linecap="round"/>
<path d="M697 569h0M707 580h0M718 583h0M716 569h0M727 570h0M735 569h0M740 564h0M740 563h0M747 558h0M757 558h0M760 557h0M765 553h0M773 564h0M774 548h0M785 556h0M788 545h0M792 534h0M799 546h0M807 542h0M811 539h0M815 529h0M822 530h0M828 538h0M837 531h0M841 538h0M848 534h0M856 529h0M856 527h0M864 524h0M871 523h0M878 519h0M878 511h0M885 512h0M892 506h0M896 512h0M904 515h0M913 508h0M911 499h0M919 498h0M928 503h0M931 499h0M936 496h0M940 490h0M948 492h0M953 483h0M961 483h0M967 486h0M976 492h0M974 478h0M982 479h0M993 480h0M988 489h0M992 497h0M1008 485h0M1008 501h0M1014 501h0M1019 498h0M1023 503h0M1019 519h0M1033 513h0M1040 517h0M1047 517h0M1053 518h0M1047 536h0M1053 536h0M1066 526h0M1066 541h0M1068 545h0M1080 547h0M1088 543h0M1095 539h0M1097 542h0M1099 550h0M1103 563h0M1109 559h0M1114 561h0M1117 570h0M1127 566h0M1132 567h0M1135 575h0M1149 566h0M1143 588h0M1146 590h0M1157 590h0M1162 594h0M1168 591h0M1167 606h0M1181 596h0M1187 601h0M1185 610h0M1195 610h0M1206 606h0M1203 615h0M1217 610h0M1217 619h0M1220 629h0M1221 634h0M1235 629h0M1242 623h0M1245 636h0M1240 646h0M1257 633h0M1254 650h0M1260 652h0M1266 653h0M1266 662h0M1279 661h0M1281 663h0M1286 663h0M1291 666h0M1300 667h0M1302 681h0M1307 681h0M1318 678h0M1319 681h0M1321 690h0M1323 700h0M1334 694h0M1338 698h0M1351 698h0M1343 717h0M1348 713h0M1358 712h0M1360 720h0M1369 716h0M1372 725h0M1378 732h0" stroke="#0c0c0c" stroke-width="5.5" stroke-linecap="round"/>
<path d="M829 557h0M835 562h0M843 557h0M852 560h0M853 560h0M863 562h0M870 559h0M873 558h0M881 560h0M886 563h0M891 566h0M900 572h0M905 566h0M908 558h0M916 569h0M923 566h0M929 568h0M935 564h0M939 575h0M946 575h0M950 572h0M955 575h0M964 576h0M967 579h0M977 575h0M985 577h0M991 582h0M997 580h0M1003 578h0M1003 583h0M1009 584h0M1016 585h0M1023 583h0M1033 587h0M1035 590h0M1041 587h0M1052 585h0M1052 589h0M1064 590h0M960 498h0M963 502h0M976 500h0M979 510h0M987 504h0M991 508h0M998 515h0M999 517h0M1008 522h0M1010 522h0M1019 528h0M1023 527h0M1030 530h0M1035 534h0M1101 570h0M1167 592h0M1104 581h0M1157 599h0M1164 605h0M1080 550h0M1078 577h0M1142 580h0M1072 553h0M1101 588h0M1074 571h0M1109 567h0M1069 573h0M1175 614h0M1168 606h0M1156 613h0M1172 617h0M1184 610h0M1104 564h0M1138 576h0M1163 602h0M1149 611h0M1073 577h0M1131 600h0M1151 611h0M1146 590h0M1131 575h0M1085 556h0M1115 582h0M1092 574h0M1173 617h0M1072 554h0M1147 584h0M1125 582h0M1132 573h0M1100 576h0M1083 577h0M1066 557h0M1170 591h0M1080 564h0M1079 576h0M1142 583h0M1088 554h0M1093 572h0M1101 561h0M1111 595h0M1087 571h0M1099 568h0M1115 592h0M1104 576h0M1079 578h0M1154 608h0M1132 593h0M1076 579h0M1158 591h0M1067 574h0M1107 563h0M1168 606h0M1087 554h0M1101 576h0M1161 609h0M1100 559h0M1099 572h0M1127 590h0M1078 555h0M1115 594h0M1127 574h0M1084 575h0M1075 568h0M1067 569h0M1167 594h0M1135 585h0M1073 567h0M1067 559h0M1067 558h0M1176 616h0M1184 618h0" stroke="#0e0e0e" stroke-width="5.5" stroke-linecap="round"/>
<path d="M1253 734h0M1207 725h0M1207 738h0M1230 757h0M1228 724h0M1228 755h0M1239 721h0M1229 757h0M1216 738h0M1249 764h0M1222 724h0M1219 760h0M1247 727h0M1225 742h0M1233 738h0M1209 740h0M1236 768h0M1207 762h0M1229 731h0M1249 720h0M1218 744h0M1224 759h0M1209 747h0M1212 721h0M1218 725h0M1213 739h0M1260 771h0M1220 733h0M1228 730h0M1246 745h0M1240 742h0M1218 727h0M1215 740h0M1233 722h0M1229 732h0M1243 769h0M1230 723h0M1237 751h0M1229 749h0M1251 732h0M1226 759h0M1211 756h0M1216 735h0M1250 760h0M1229 759h0M1216 752h0M1237 768h0M1253 747h0M1220 729h0M1257 725h0M1221 749h0M1210 769h0M1244 765h0M1231 755h0M1207 763h0M1252 746h0M1242 731h0M1222 741h0M1247 770h0M1217 769h0M1243 727h0M1249 735h0M1209 741h0M1213 767h0M1217 733h0M1211 745h0M1234 732h0M1245 768h0M1215 734h0M1218 742h0M1230 738h0M1236 767h0M1237 726h0M1234 748h0M1233 733h0M1227 737h0M1238 771h0M1231 738h0M1211 727h0M1220 749h0M1241 740h0M1251 771h0M1226 764h0M1234 732h0M1214 745h0M1243 740h0M1242 757h0M1209 739h0M1241 762h0M1214 754h0M1224 770h0M1236 771h0M1249 748h0M1224 734h0M1221 725h0M1260 763h0M1242 727h0M1257 747h0M1240 731h0M1255 722h0M1229 742h0M1257 749h0M1236 743h0M1242 721h0M1253 767h0M1232 743h0M1235 750h0M1250 760h0M1226 731h0M1257 728h0" stroke="#101010" stroke-width="5.5" stroke-linecap="round"/>
<path d="M1146 760h0M1147 764h0M1153 765h0M1157 770h0M1158 783h0M1165 787h0M1173 781h0M1178 784h0" stroke="#111111" stroke-width="5.5" stroke-linecap="round"/>
<path d="M1080 897h1v1h-1zM1144 892h1v1h-1zM1069 817h1v1h-1zM692 809h1v1h-1zM940 855h1v1h-1zM1125 651h1v1h-1zM623 734h1v1h-1zM996 734h1v1h-1zM1026 825h1v1h-1zM1301 684h1v1h-1zM874 665h1v1h-1zM1152 609h1v1h-1zM914 567h1v1h-1zM1225 751h1v1h-1zM1188 652h1v1h-1zM596 627h1v1h-1zM803 641h1v1h-1zM834 624h1v1h-1zM850 720h1v1h-1zM819 764h1v1h-1zM1176 630h1v1h-1zM1136 604h1v1h-1zM924 832h1v1h-1zM665 713h1v1h-1zM980 811h1v1h-1zM761 764h1v1h-1zM1016 859h1v1h-1zM1282 834h1v1h-1zM1013 596h1v1h-1zM1238 654h1v1h-1zM834 621h1v1h-1zM1271 773h1v1h-1zM1194 756h1v1h-1zM991 787h1v1h-1zM814 878h1v1h-1zM675 661h1v1h-1zM709 761h1v1h-1zM1285 674h1v1h-1zM1276 720h1v1h-1zM1170 610h1v1h-1zM906 643h1v1h-1zM1183 778h1v1h-1zM1111 621h1v1h-1zM607 739h1v1h-1zM692 599h1v1h-1zM1284 851h1v1h-1zM1336 770h1v1h-1zM1049 723h1v1h-1zM1004 681h1v1h-1zM1238 682h1v1h-1zM1207 864h1v1h-1zM1040 534h1v1h-1zM902 767h1v1h-1zM1270 807h1v1h-1zM897 856h1v1h-1zM1091 830h1v1h-1zM1273 694h1v1h-1zM1008 808h1v1h-1zM997 721h1v1h-1zM877 520h1v1h-1zM1177 683h1v1h-1zM1142 733h1v1h-1zM1126 832h1v1h-1zM790 644h1v1h-1zM630 873h1v1h-1zM833 751h1v1h-1zM648 737h1v1h-1zM654 662h1v1h-1zM983 478h1v1h-1zM1006 895h1v1h-1zM711 699h1v1h-1zM927 509h1v1h-1zM675 751h1v1h-1zM881 734h1v1h-1zM786 622h1v1h-1zM722 800h1v1h-1zM824 524h1v1h-1zM899 800h1v1h-1zM1099 895h1v1h-1zM1249 807h1v1h-1zM671 675h1v1h-1zM1213 627h1v1h-1zM944 910h1v1h-1zM746 915h1v1h-1zM1102 666h1v1h-1zM644 856h1v1h-1zM1001 732h1v1h-1zM874 755h1v1h-1zM787 815h1v1h-1zM1073 833h1v1h-1zM914 755h1v1h-1zM802 652h1v1h-1zM740 678h1v1h-1zM927 493h1v1h-1zM592 674h1v1h-1zM741 613h1v1h-1zM959 512h1v1h-1zM1193 775h1v1h-1zM1246 739h1v1h-1zM944 708h1v1h-1zM734 861h1v1h-1zM650 715h1v1h-1zM937 837h1v1h-1zM936 715h1v1h-1zM1134 590h1v1h-1zM731 769h1v1h-1zM762 559h1v1h-1zM758 577h1v1h-1zM1356 737h1v1h-1zM948 743h1v1h-1zM740 723h1v1h-1zM813 753h1v1h-1zM1131 787h1v1h-1zM1070 692h1v1h-1zM1259 851h1v1h-1zM735 896h1v1h-1zM802 857h1v1h-1zM777 567h1v1h-1zM1210 753h1v1h-1zM769 652h1v1h-1zM1086 878h1v1h-1zM1093 717h1v1h-1zM670 742h1v1h-1zM1257 852h1v1h-1zM744 885h1v1h-1zM1131 896h1v1h-1zM1110 581h1v1h-1zM1028 775h1v1h-1zM1011 886h1v1h-1zM777 645h1v1h-1zM919 798h1v1h-1zM793 810h1v1h-1zM1067 865h1v1h-1zM1116 581h1v1h-1zM1336 695h1v1h-1zM606 633h1v1h-1zM618 712h1v1h-1zM1128 779h1v1h-1zM662 784h1v1h-1zM849 637h1v1h-1zM1214 736h1v1h-1zM726 866h1v1h-1zM597 843h1v1h-1zM1008 810h1v1h-1zM981 876h1v1h-1zM1229 734h1v1h-1zM809 651h1v1h-1zM935 769h1v1h-1zM998 877h1v1h-1zM644 673h1v1h-1zM654 706h1v1h-1zM1048 702h1v1h-1zM731 867h1v1h-1zM1099 748h1v1h-1zM696 820h1v1h-1zM1162 863h1v1h-1zM834 521h1v1h-1zM1229 770h1v1h-1zM761 764h1v1h-1zM821 549h1v1h-1zM1299 734h1v1h-1zM603 828h1v1h-1zM1052 887h1v1h-1zM823 892h1v1h-1zM728 654h1v1h-1zM1184 778h1v1h-1zM724 714h1v1h-1zM1189 868h1v1h-1zM842 543h1v1h-1zM606 732h1v1h-1zM762 820h1v1h-1zM879 788h1v1h-1zM967 741h1v1h-1zM815 540h1v1h-1zM737 683h1v1h-1zM767 847h1v1h-1zM1036 513h1v1h-1zM703 650h1v1h-1zM1278 730h1v1h-1zM625 691h1v1h-1zM1123 747h1v1h-1zM1176 602h1v1h-1zM989 714h1v1h-1zM958 908h1v1h-1zM729 687h1v1h-1zM1265 790h1v1h-1zM620 843h1v1h-1zM715 853h1v1h-1zM859 543h1v1h-1zM1242 856h1v1h-1zM1146 889h1v1h-1zM873 513h1v1h-1zM1193 716h1v1h-1zM860 815h1v1h-1zM996 711h1v1h-1zM674 603h1v1h-1zM1087 668h1v1h-1zM1209 755h1v1h-1zM1027 614h1v1h-1zM836 911h1v1h-1zM658 914h1v1h-1zM851 590h1v1h-1zM1198 646h1v1h-1zM670 651h1v1h-1zM836 632h1v1h-1zM867 705h1v1h-1zM905 610h1v1h-1zM868 840h1v1h-1zM961 546h1v1h-1zM1050 657h1v1h-1zM936 772h1v1h-1zM1246 888h1v1h-1zM1185 797h1v1h-1zM749 888h1v1h-1zM1064 734h1v1h-1zM756 758h1v1h-1zM803 878h1v1h-1zM1299 764h1v1h-1zM1161 871h1v1h-1zM1185 879h1v1h-1zM763 866h1v1h-1zM1261 846h1v1h-1zM1216 828h1v1h-1zM1220 681h1v1h-1zM1191 816h1v1h-1zM728 545h1v1h-1zM1301 765h1v1h-1zM809 808h1v1h-1zM976 779h1v1h-1zM949 872h1v1h-1zM1203 714h1v1h-1zM624 621h1v1h-1zM1237 667h1v1h-1zM715 692h1v1h-1zM944 830h1v1h-1zM1186 790h1v1h-1zM842 725h1v1h-1zM1105 564h1v1h-1zM1120 652h1v1h-1zM736 617h1v1h-1zM1095 793h1v1h-1zM807 542h1v1h-1zM888 878h1v1h-1zM990 781h1v1h-1zM999 736h1v1h-1zM691 821h1v1h-1zM792 791h1v1h-1zM686 749h1v1h-1zM1228 760h1v1h-1zM737 845h1v1h-1zM766 673h1v1h-1zM769 600h1v1h-1zM761 869h1v1h-1zM605 806h1v1h-1zM1054 696h1v1h-1zM746 794h1v1h-1zM784 783h1v1h-1zM880 694h1v1h-1zM1057 585h1v1h-1zM901 730h1v1h-1zM848 632h1v1h-1zM1006 736h1v1h-1zM616 792h1v1h-1zM666 888h1v1h-1zM948 637h1v1h-1zM914 697h1v1h-1zM974 705h1v1h-1zM818 714h1v1h-1zM1170 685h1v1h-1zM1196 815h1v1h-1zM906 732h1v1h-1zM1195 622h1v1h-1zM1195 860h1v1h-1zM915 495h1v1h-1zM796 759h1v1h-1zM1286 769h1v1h-1zM1132 740h1v1h-1zM901 816h1v1h-1zM1244 898h1v1h-1zM1271 742h1v1h-1zM1061 636h1v1h-1zM1126 780h1v1h-1zM881 700h1v1h-1zM989 510h1v1h-1zM1136 654h1v1h-1zM1089 800h1v1h-1zM643 890h1v1h-1zM803 771h1v1h-1zM677 882h1v1h-1zM1247 889h1v1h-1zM1072 682h1v1h-1zM1056 892h1v1h-1zM852 538h1v1h-1zM1142 616h1v1h-1zM1244 846h1v1h-1zM679 666h1v1h-1zM1248 680h1v1h-1zM879 636h1v1h-1zM705 862h1v1h-1zM668 850h1v1h-1zM661 626h1v1h-1zM1188 760h1v1h-1zM1039 873h1v1h-1zM1015 613h1v1h-1zM780 766h1v1h-1zM1025 735h1v1h-1zM991 723h1v1h-1zM1165 622h1v1h-1zM895 709h1v1h-1zM949 769h1v1h-1zM904 702h1v1h-1zM975 914h1v1h-1zM716 648h1v1h-1zM1214 822h1v1h-1zM589 714h1v1h-1zM1001 751h1v1h-1zM1072 786h1v1h-1zM759 848h1v1h-1zM914 852h1v1h-1zM1159 651h1v1h-1zM1274 680h1v1h-1zM1057 807h1v1h-1z" fill="#d0d0d0"/>
<path d="M874 668h1v1h-1zM854 664h1v1h-1zM848 669h1v1h-1zM855 687h1v1h-1zM872 667h1v1h-1zM869 660h1v1h-1zM860 671h1v1h-1zM867 679h1v1h-1zM863 652h1v1h-1zM860 681h1v1h-1zM866 670h1v1h-1zM854 663h1v1h-1zM866 675h1v1h-1zM857 665h1v1h-1zM849 670h1v1h-1zM862 672h1v1h-1zM853 658h1v1h-1zM845 675h1v1h-1zM859 679h1v1h-1zM855 687h1v1h-1zM863 656h1v1h-1zM867 680h1v1h-1zM847 655h1v1h-1zM855 654h1v1h-1zM866 672h1v1h-1zM858 684h1v1h-1zM860 649h1v1h-1zM868 671h1v1h-1zM847 657h1v1h-1zM858 659h1v1h-1zM868 682h1v1h-1zM848 676h1v1h-1zM872 671h1v1h-1zM850 682h1v1h-1zM870 676h1v1h-1zM856 676h1v1h-1zM846 681h1v1h-1zM857 667h1v1h-1zM871 674h1v1h-1zM848 669h1v1h-1zM872 658h1v1h-1zM861 667h1v1h-1zM849 683h1v1h-1zM859 658h1v1h-1zM869 654h1v1h-1zM871 663h1v1h-1zM862 670h1v1h-1zM866 660h1v1h-1zM850 682h1v1h-1zM850 662h1v1h-1zM850 676h1v1h-1zM864 666h1v1h-1zM848 672h1v1h-1zM867 656h1v1h-1zM861 655h1v1h-1zM856 678h1v1h-1zM864 666h1v1h-1zM859 664h1v1h-1zM858 678h1v1h-1zM871 664h1v1h-1zM842 666h1v1h-1zM869 679h1v1h-1zM848 661h1v1h-1zM856 680h1v1h-1zM860 671h1v1h-1zM850 652h1v1h-1zM864 679h1v1h-1zM849 655h1v1h-1zM860 680h1v1h-1zM843 675h1v1h-1zM865 684h1v1h-1zM860 658h1v1h-1zM850 660h1v1h-1zM866 674h1v1h-1zM869 676h1v1h-1zM859 663h1v1h-1zM846 679h1v1h-1zM846 657h1v1h-1zM870 672h1v1h-1zM865 666h1v1h-1zM859 657h1v1h-1zM860 655h1v1h-1zM845 666h1v1h-1zM843 666h1v1h-1zM852 671h1v1h-1zM848 678h1v1h-1zM849 679h1v1h-1zM862 668h1v1h-1zM864 656h1v1h-1zM862 682h1v1h-1zM863 669h1v1h-1zM850 672h1v1h-1zM857 673h1v1h-1zM849 670h1v1h-1zM855 649h1v1h-1zM859 661h1v1h-1zM852 669h1v1h-1zM852 682h1v1h-1zM863 670h1v1h-1zM867 668h1v1h-1zM860 667h1v1h-1zM858 676h1v1h-1zM858 659h1v1h-1zM869 681h1v1h-1zM858 655h1v1h-1zM852 650h1v1h-1zM855 650h1v1h-1zM864 683h1v1h-1zM873 669h1v1h-1zM871 665h1v1h-1zM854 660h1v1h-1zM868 658h1v1h-1zM874 668h1v1h-1zM862 680h1v1h-1zM872 669h1v1h-1zM868 673h1v1h-1zM869 676h1v1h-1zM859 675h1v1h-1zM854 673h1v1h-1zM855 660h1v1h-1z" fill="#dddddd"/>
<path d="M933 708h1v1h-1zM938 731h1v1h-1zM950 705h1v1h-1zM943 728h1v1h-1zM928 694h1v1h-1zM913 732h1v1h-1zM947 722h1v1h-1zM951 720h1v1h-1zM948 703h1v1h-1zM919 722h1v1h-1zM914 715h1v1h-1zM919 725h1v1h-1zM934 703h1v1h-1zM928 730h1v1h-1zM917 723h1v1h-1zM920 702h1v1h-1zM947 709h1v1h-1zM930 745h1v1h-1zM913 699h1v1h-1zM930 732h1v1h-1zM914 724h1v1h-1zM923 742h1v1h-1zM935 736h1v1h-1zM922 688h1v1h-1zM935 697h1v1h-1zM934 692h1v1h-1zM930 718h1v1h-1zM941 703h1v1h-1zM919 710h1v1h-1zM951 711h1v1h-1zM942 730h1v1h-1zM940 727h1v1h-1zM913 730h1v1h-1zM941 713h1v1h-1zM937 727h1v1h-1zM927 717h1v1h-1zM920 726h1v1h-1zM913 714h1v1h-1zM922 730h1v1h-1zM946 721h1v1h-1zM935 727h1v1h-1zM913 718h1v1h-1zM914 718h1v1h-1zM922 706h1v1h-1zM939 737h1v1h-1zM918 705h1v1h-1zM928 704h1v1h-1zM928 717h1v1h-1zM918 734h1v1h-1zM911 715h1v1h-1zM946 721h1v1h-1zM917 707h1v1h-1zM923 704h1v1h-1zM914 699h1v1h-1zM935 717h1v1h-1zM927 736h1v1h-1zM944 700h1v1h-1zM938 700h1v1h-1zM925 686h1v1h-1zM932 704h1v1h-1zM922 725h1v1h-1zM941 695h1v1h-1zM939 734h1v1h-1zM928 689h1v1h-1zM943 694h1v1h-1zM941 699h1v1h-1zM922 694h1v1h-1zM935 729h1v1h-1zM934 698h1v1h-1zM927 732h1v1h-1zM936 699h1v1h-1zM947 721h1v1h-1zM921 692h1v1h-1zM926 709h1v1h-1zM942 728h1v1h-1zM951 713h1v1h-1zM921 709h1v1h-1zM931 691h1v1h-1zM934 715h1v1h-1zM928 687h1v1h-1zM931 699h1v1h-1zM936 724h1v1h-1zM910 724h1v1h-1zM919 733h1v1h-1zM936 722h1v1h-1zM916 720h1v1h-1zM924 738h1v1h-1zM933 729h1v1h-1zM917 733h1v1h-1zM924 723h1v1h-1zM947 714h1v1h-1zM922 729h1v1h-1zM947 715h1v1h-1zM948 725h1v1h-1zM924 700h1v1h-1zM928 699h1v1h-1zM912 718h1v1h-1zM937 733h1v1h-1zM912 704h1v1h-1zM942 713h1v1h-1zM928 706h1v1h-1zM916 720h1v1h-1zM920 732h1v1h-1zM927 726h1v1h-1zM920 702h1v1h-1zM943 692h1v1h-1zM937 704h1v1h-1zM923 726h1v1h-1zM925 728h1v1h-1zM930 723h1v1h-1zM949 714h1v1h-1zM930 742h1v1h-1zM914 722h1v1h-1zM920 692h1v1h-1zM946 731h1v1h-1zM927 718h1v1h-1zM913 725h1v1h-1zM920 736h1v1h-1zM946 729h1v1h-1zM928 712h1v1h-1z" fill="#dddddd"/>
<polygon points="1536,641 1536,710 1370,917 1246,917 1293,870 1370,788 1452,711 1529,641" fill="#1a1a1a"/>
<polygon points="580,364 1040,364 1040,373 1300,474 1536,567 1536,641 1529,641 1452,711 1370,788 1293,870 1246,917 1232,917 1290,850 1345,785 1400,728 1287,653 1200,620 1040,511 980,470 850,522 757,550 722,590 674,600 624,600 580,600" fill="#0a0a0a"/>
<polygon points="580,598 624,600 688,735 742,917 705,917 580,617" fill="#0a0a0a"/>
<polygon points="624,600 674,600 712,667 722,735 769,870 783,917 742,917 688,735" fill="#2e2e2e"/>
<polygon points="674,600 722,592 755,667 796,735 850,870 870,917 783,917 769,870 722,735 712,667" fill="#0c0c0c"/>
<path d="M643 610h0M630 630h0M691 705h0M681 635h0M650 648h0M715 695h0M707 666h0M700 690h0M663 692h0M703 680h0M694 670h0M696 705h0M661 654h0M628 613h0M647 649h0M690 643h0M647 651h0M651 647h0M691 709h0M700 689h0M687 624h0M698 645h0M660 619h0M660 620h0M691 631h0M674 628h0M660 643h0M678 617h0M698 688h0M691 638h0M664 709h0M696 696h0M655 602h0M669 710h0M640 669h0M647 673h0M677 633h0M653 610h0M663 644h0M663 649h0M708 678h0M669 645h0M695 645h0M662 690h0M644 605h0M656 602h0M675 605h0M629 609h0M636 655h0M741 823h0M714 716h0M701 684h0M719 831h0M732 827h0M760 888h0M747 890h0M731 868h0M706 745h0M727 825h0M711 713h0M686 639h0M682 625h0M777 900h0M709 703h0M744 835h0M760 878h0M697 659h0" stroke="#a0a0a0" stroke-width="5.2" stroke-linecap="round"/>
<path d="M708 664h0M684 656h0M677 671h0M712 697h0M660 639h0M674 708h0M686 690h0M647 618h0M639 622h0M667 697h0M700 668h0M713 686h0M678 677h0M648 621h0M635 641h0M700 674h0M655 697h0M705 705h0M698 691h0M680 652h0M661 670h0M688 664h0M684 619h0M644 675h0M676 626h0M645 614h0M709 687h0M631 608h0M666 669h0M685 659h0M664 616h0M671 696h0M659 702h0M684 645h0M659 704h0M706 708h0M631 635h0M668 661h0M710 698h0M633 608h0M667 679h0M653 683h0M650 656h0M696 679h0M676 692h0M651 661h0M681 648h0M640 614h0M661 642h0M658 627h0M669 634h0M626 616h0M670 634h0M649 612h0M678 691h0M683 685h0M663 704h0M691 694h0M638 623h0M694 661h0M675 638h0M640 644h0M687 649h0M679 641h0M693 645h0M674 673h0M678 619h0M700 686h0M666 702h0M706 660h0M668 607h0M657 633h0M633 636h0M657 689h0M646 666h0M646 619h0M662 651h0M652 632h0M673 613h0M685 699h0M645 604h0M680 650h0M678 706h0M658 679h0M654 625h0M675 683h0M651 600h0M665 612h0M631 635h0M640 615h0M703 692h0M697 642h0M682 693h0M701 683h0M627 616h0M663 641h0M690 704h0M633 620h0M680 626h0M635 645h0M708 683h0M640 603h0M692 667h0M704 668h0M669 640h0M687 686h0M652 609h0M662 666h0M715 685h0M675 624h0M704 707h0M664 610h0M699 645h0M678 706h0M678 709h0M634 646h0M628 606h0M648 683h0M703 653h0M703 688h0M695 711h0M698 698h0M689 700h0M679 636h0M645 615h0M681 710h0M675 628h0M676 605h0M667 672h0M700 705h0M672 618h0M703 704h0M686 644h0M681 638h0M643 654h0M666 605h0M715 706h0M630 628h0M648 645h0M704 668h0M673 699h0M685 622h0M675 620h0M699 700h0M673 692h0M673 710h0M682 705h0M652 601h0M664 606h0M665 602h0M687 629h0M687 680h0M676 630h0M655 662h0M644 607h0M639 654h0M674 697h0M716 697h0M694 666h0M664 602h0M711 673h0M694 696h0M689 677h0M677 694h0M688 675h0M651 664h0M664 639h0M682 640h0M643 625h0M641 638h0M649 600h0M665 659h0M649 657h0M650 655h0M676 638h0M659 674h0M662 637h0M694 653h0M632 618h0M662 604h0M653 671h0M674 645h0M686 695h0M653 685h0M674 659h0M659 627h0M674 685h0M637 630h0M636 629h0M714 686h0M653 621h0M711 766h0M709 672h0M660 656h0M656 657h0M779 913h0M715 789h0M673 631h0M696 646h0M722 758h0M703 709h0M736 828h0M695 731h0M674 630h0M681 691h0M630 609h0M702 712h0M680 714h0M688 675h0M691 719h0M756 840h0M721 837h0M710 722h0M680 705h0M700 767h0M638 616h0M696 695h0M668 687h0M744 802h0M688 714h0M741 870h0M725 847h0M640 606h0M724 821h0M713 704h0M690 701h0M707 712h0M651 614h0M763 874h0M674 698h0M693 750h0M715 754h0" stroke="#0e0e0e" stroke-width="5.2" stroke-linecap="round"/>
<path d="M680 615h0M661 611h0M633 644h0M646 658h0M696 703h0M690 634h0M652 662h0M718 699h0M681 693h0M681 686h0M698 681h0M648 668h0M644 629h0M682 615h0M692 644h0M656 637h0M715 692h0M671 703h0M682 618h0M705 686h0M673 673h0M707 662h0M669 616h0M645 658h0M658 646h0M672 641h0M680 706h0M658 638h0M679 611h0M667 673h0M638 631h0M693 686h0M644 615h0M708 699h0M653 685h0M679 681h0M669 665h0M672 627h0M636 645h0M686 675h0M636 647h0M645 600h0M695 644h0M661 609h0M645 602h0M680 630h0M675 644h0M655 631h0M695 661h0M665 689h0M640 621h0M661 637h0M683 624h0M654 676h0M658 694h0M705 695h0M709 698h0M713 673h0M694 642h0M700 690h0M689 689h0M670 694h0M681 639h0M651 674h0M692 666h0M716 695h0M643 603h0M694 670h0M703 682h0M657 677h0M693 678h0M682 703h0M633 614h0M659 708h0M657 627h0M674 674h0M644 676h0M648 669h0M632 623h0M715 710h0M667 690h0M675 646h0M702 703h0M702 686h0M631 649h0M674 654h0M676 633h0M676 700h0M641 629h0M677 621h0M647 631h0M709 681h0M643 646h0M676 648h0M671 650h0M669 628h0M671 637h0M681 689h0M670 705h0M639 605h0M628 620h0M696 667h0M659 690h0M642 605h0M653 677h0M691 682h0M666 688h0M685 680h0M664 625h0M680 711h0M678 664h0M686 629h0M643 656h0M650 682h0M662 683h0M661 686h0M646 676h0M671 707h0M681 655h0M657 669h0M666 703h0M684 635h0M639 610h0M675 604h0M689 644h0M662 623h0M688 656h0M712 791h0M640 630h0M699 682h0M729 801h0M699 769h0M719 749h0M730 803h0M718 734h0M662 666h0M636 611h0M689 644h0M735 835h0M725 764h0M754 885h0M712 730h0M707 780h0M682 617h0M658 655h0M704 731h0M721 732h0M742 844h0M718 779h0M647 623h0M687 699h0M720 726h0M654 636h0M750 888h0M633 609h0M706 708h0M714 744h0M755 862h0M710 784h0M744 887h0M746 895h0M657 613h0M749 908h0M758 903h0M677 711h0M732 818h0M671 662h0M737 816h0M664 661h0M635 621h0M769 916h0M715 713h0M732 808h0" stroke="#7a7a7a" stroke-width="5.2" stroke-linecap="round"/>
<path d="M958 378h0M864 388h0M643 403h0M727 396h0M916 384h0M991 368h0M891 409h0M970 417h0M610 428h0M829 424h0M1001 378h0M972 387h0M673 407h0M682 407h0M913 376h0M702 387h0M788 402h0M836 410h0M804 395h0M801 397h0M608 414h0M783 399h0M926 377h0M1012 384h0M882 395h0M884 377h0M964 381h0M761 411h0M913 402h0M825 402h0M654 400h0M884 389h0M616 395h0M922 377h0M915 420h0M1011 373h0M1032 367h0M826 412h0M786 381h0M667 418h0M738 395h0M970 397h0M825 397h0M772 401h0M969 410h0M1037 412h0M964 389h0M938 397h0M783 424h0M803 405h0M972 377h0M851 385h0M638 399h0M824 425h0M782 391h0M1009 388h0M675 397h0M762 382h0M873 410h0M836 405h0M950 382h0M726 408h0M864 400h0M972 392h0M606 430h0M834 389h0M840 400h0M898 389h0M616 417h0M808 405h0M934 388h0M1011 416h0M969 396h0M853 420h0M619 428h0M911 407h0M951 375h0M648 394h0M853 390h0M1012 393h0M752 386h0M732 420h0M644 388h0M809 396h0M970 397h0M881 411h0M708 404h0M594 427h0M987 392h0M663 415h0M819 423h0M939 421h0M640 391h0M716 403h0M773 388h0M820 420h0M901 410h0M774 425h0M946 375h0M877 395h0M895 375h0M943 372h0M904 421h0M647 420h0M840 393h0M994 370h0M872 388h0M783 415h0M606 409h0M590 407h0M765 403h0M833 397h0M625 418h0M945 395h0M816 383h0M742 411h0M979 370h0M1038 383h0M911 409h0M722 419h0M1006 408h0M979 372h0M827 392h0M868 413h0M684 424h0M861 414h0M663 408h0M867 413h0M683 404h0M898 381h0M688 387h0M1010 416h0M668 422h0M624 417h0M1020 378h0M929 387h0M808 422h0M1023 379h0M723 418h0M979 417h0M964 397h0M791 397h0M1009 382h0M830 424h0M843 382h0M1025 400h0M986 413h0M679 404h0M1029 417h0M1006 419h0M786 387h0M973 397h0M909 382h0M958 375h0M1038 381h0M836 395h0M962 408h0M1031 389h0M887 423h0M584 413h0M765 396h0M730 395h0M1031 405h0M857 384h0M810 395h0M721 414h0M807 424h0M991 374h0M1030 390h0M791 424h0M965 385h0M964 373h0M951 404h0M618 412h0M998 381h0M976 377h0M852 413h0M791 411h0M983 411h0M993 380h0M929 392h0M617 420h0M633 397h0M985 396h0M959 395h0M874 378h0M640 401h0M684 416h0M653 389h0M857 390h0M627 410h0M713 428h0M961 374h0M730 395h0M885 399h0M791 419h0M999 371h0M786 389h0M832 391h0M849 412h0M995 392h0M692 427h0M880 402h0M584 408h0M771 422h0M873 396h0M834 394h0M777 423h0M960 401h0M762 414h0M897 418h0M637 422h0M683 408h0M1025 381h0M974 407h0M719 397h0M746 389h0M583 416h0M999 396h0M1006 420h0M699 398h0M920 408h0M640 413h0M1018 375h0M635 398h0M689 405h0M658 425h0M1024 394h0M874 419h0M774 409h0M625 401h0M921 413h0M591 399h0M834 415h0M716 418h0M669 388h0M737 398h0M711 417h0M795 388h0M788 385h0M665 404h0M759 386h0M877 381h0M886 412h0M755 420h0M613 421h0M934 373h0M1034 386h0M927 400h0M1005 405h0M759 383h0M989 419h0M834 377h0M912 413h0M746 413h0M590 405h0M1009 389h0M989 421h0M951 383h0M610 401h0M1021 385h0M797 392h0M656 419h0M849 393h0" stroke="#262626" stroke-width="5" stroke-linecap="round"/>
<path d="M638 570h0M612 510h0M679 574h0M596 587h0M619 541h0M583 540h0M613 583h0M633 532h0M614 462h0M653 489h0M637 581h0M691 567h0M595 563h0M642 592h0M611 578h0M643 463h0M614 478h0M639 576h0M649 471h0M586 454h0M649 491h0M620 506h0M648 482h0M592 527h0M595 468h0M602 567h0M658 583h0M645 592h0M591 477h0M649 473h0M608 572h0M632 596h0M647 476h0M597 600h0M651 550h0M580 533h0M623 468h0M633 494h0M649 525h0M589 600h0M620 465h0M668 511h0M639 506h0M593 506h0M631 541h0M627 488h0M674 588h0M593 566h0M617 475h0M597 546h0M584 494h0M618 555h0M620 558h0M595 585h0M608 495h0M666 562h0M658 538h0M602 491h0M601 467h0M608 508h0M678 544h0M604 491h0M594 573h0M649 593h0M662 532h0M629 475h0M580 549h0M623 543h0M614 476h0M618 469h0M653 538h0M633 524h0M639 602h0M628 544h0M622 604h0M626 589h0M603 540h0M662 511h0M611 527h0M597 506h0M630 518h0M589 530h0M663 539h0M618 455h0M601 532h0M588 558h0M628 503h0M628 471h0M634 609h0M691 580h0M600 501h0M622 459h0M605 598h0M637 516h0M598 569h0M626 564h0M588 578h0M608 505h0M600 544h0M601 571h0M599 600h0M650 550h0M582 477h0M587 479h0M674 562h0M595 508h0M664 532h0M609 473h0M644 513h0M599 601h0M592 587h0M596 495h0M582 598h0M625 487h0M583 518h0M596 503h0M601 496h0M590 543h0M593 554h0M614 526h0M693 566h0M636 474h0M650 515h0M590 573h0M647 559h0M624 554h0M639 473h0M582 565h0M582 561h0M629 537h0M652 603h0M616 472h0M633 489h0M644 469h0M663 568h0M643 481h0M612 553h0M620 463h0M581 547h0M602 591h0M606 511h0M585 542h0M601 521h0M614 588h0M646 558h0M632 602h0M623 467h0M639 544h0M610 514h0M688 580h0M609 472h0M602 583h0M611 460h0M653 537h0M671 525h0M655 502h0M589 592h0M660 569h0M585 578h0M630 478h0M647 589h0M637 603h0M603 578h0M600 601h0M586 455h0M645 526h0M597 540h0M614 587h0M604 533h0M687 580h0" stroke="#1a1a1a" stroke-width="5" stroke-linecap="round"/>
<path d="M724 401h0M1187 526h0M1384 536h0M705 432h0M606 422h0M669 562h0M1454 621h0M1162 521h0M1354 627h0M1274 538h0M724 482h0M1248 458h0M724 400h0M1099 492h0M604 551h0M1346 568h0M1183 449h0M1447 694h0M1423 559h0M716 470h0M900 484h0M814 467h0M634 380h0M1192 592h0M1397 572h0M1347 505h0M1217 601h0M1357 691h0M1484 595h0M1021 415h0M778 405h0M712 482h0M613 581h0M898 476h0M1460 639h0M1330 513h0M1384 646h0M1505 559h0M1437 531h0M800 381h0M675 581h0M941 427h0M813 448h0M893 498h0M855 382h0M1274 621h0M991 431h0M974 435h0M1184 529h0M1453 590h0M1535 620h0M720 421h0M1249 470h0M781 453h0M1347 630h0M1368 649h0M674 487h0M1464 623h0M782 483h0M1345 532h0M1275 524h0M973 471h0M1398 614h0M1255 497h0M1206 605h0M1343 670h0M676 385h0M936 456h0M1283 524h0M1397 536h0M1361 631h0M1244 593h0M1328 807h0M800 532h0M667 371h0M656 489h0M664 546h0M1323 667h0M979 435h0M829 414h0M1372 579h0M1353 586h0M869 511h0M930 483h0M1159 495h0M1317 624h0M1417 583h0M1233 455h0M706 373h0M1522 578h0M1496 582h0M1460 596h0M726 528h0M1251 508h0M665 422h0M670 443h0M883 378h0M897 445h0M1102 426h0M756 509h0M1003 470h0M809 442h0M769 388h0M1357 553h0M797 439h0M1071 458h0M1160 584h0M683 474h0M858 484h0M1152 525h0M667 516h0M1393 764h0M1307 503h0M834 476h0M825 502h0M1263 539h0M640 454h0M733 546h0M1264 582h0M677 408h0M933 472h0M707 553h0M1461 620h0M683 387h0M982 377h0M1282 514h0M829 383h0M1150 493h0M1007 385h0M1482 625h0M1174 495h0M868 390h0M1220 509h0M1101 405h0M694 554h0M1164 473h0M1356 573h0M1307 622h0M1321 576h0M1141 469h0M679 371h0M1464 543h0M887 471h0M863 453h0M1026 492h0M600 524h0M908 389h0M1089 417h0M687 517h0M757 466h0M668 572h0M919 377h0M660 516h0M821 374h0M1240 534h0M736 507h0M682 467h0M862 419h0M699 548h0M1361 578h0M1175 515h0M745 522h0M1385 573h0M1385 521h0M1264 493h0M740 541h0M662 462h0M1201 619h0M1116 426h0M1171 478h0M1215 621h0M773 374h0M1418 701h0M1233 479h0M1352 501h0M898 412h0M1464 591h0M718 401h0M1057 430h0M722 582h0M1320 614h0M1427 646h0M1166 465h0M808 381h0M1393 540h0M1300 519h0M803 491h0M1348 539h0M605 421h0M1526 608h0M727 365h0M625 407h0M767 374h0M1268 499h0M1232 599h0M717 438h0M1363 671h0M969 379h0M828 374h0M1009 423h0M1481 590h0M714 526h0M1270 523h0M750 475h0M1346 682h0M792 440h0M580 502h0M1422 621h0M631 537h0M646 442h0M1345 790h0M944 373h0M818 464h0M1491 584h0M1301 608h0M1022 451h0M1046 497h0M747 393h0M693 527h0M1378 625h0M787 519h0M1343 798h0M1208 574h0M977 418h0M1269 483h0M1026 441h0M665 504h0M714 576h0M807 528h0M848 489h0M794 469h0M738 476h0M1083 528h0M1474 620h0M1328 620h0M684 587h0M1402 716h0M1160 562h0M1491 643h0M948 413h0M1398 650h0M1267 634h0M1529 631h0M1152 465h0M1224 480h0M1189 461h0M663 453h0M1355 515h0M1333 666h0M1122 483h0M1010 476h0M1421 629h0M1260 588h0M780 542h0M968 416h0M1036 390h0M666 450h0M672 458h0M1436 629h0M1011 372h0M1250 475h0M1002 428h0M874 397h0M1169 439h0M659 564h0M801 484h0M625 570h0M1456 575h0M1310 575h0M729 535h0M753 420h0M829 427h0M1291 857h0M1311 485h0M692 472h0M905 372h0M1341 574h0M1383 586h0M843 434h0M1184 466h0M1430 626h0M1047 400h0M636 461h0M1334 565h0M1267 498h0M780 463h0M613 574h0M1511 562h0M1264 562h0M1007 429h0M941 420h0M707 538h0M592 367h0M968 445h0M1336 615h0M682 516h0M1524 591h0M1394 552h0M1356 626h0M1393 711h0M664 393h0M667 531h0M1244 590h0M757 364h0M712 413h0M1471 613h0M982 384h0M704 522h0M587 533h0M1137 466h0M1350 667h0M610 578h0M714 452h0M1305 644h0M590 391h0M945 456h0M706 379h0M959 376h0M1125 438h0M1264 621h0M731 564h0M935 473h0M970 464h0M757 507h0M1168 464h0M1203 618h0M864 388h0M621 471h0M1300 638h0M1528 599h0M1276 885h0M1306 643h0M1491 650h0M1046 472h0M1312 501h0M1352 520h0M1065 401h0M648 462h0M892 426h0M1227 629h0M1065 487h0M1439 611h0M668 548h0M1516 583h0M596 485h0M1374 633h0M642 473h0M657 409h0M1144 520h0M1326 529h0M862 432h0M631 370h0M605 423h0M837 442h0M1390 603h0M1470 611h0M1260 528h0M1034 430h0M1188 548h0M1385 606h0M594 596h0M1131 467h0M1374 608h0M1526 598h0M658 440h0M1138 548h0M690 584h0M678 491h0M1495 633h0M738 376h0M738 424h0M1470 558h0M727 510h0M1394 557h0M683 518h0M771 433h0M1269 484h0M1160 490h0M1184 586h0M818 373h0M709 379h0M1027 456h0M628 426h0M719 401h0M648 480h0M1314 659h0M1427 563h0M717 531h0M594 382h0M1526 638h0M689 458h0M1039 396h0M804 441h0M1486 597h0M1238 619h0M1419 580h0M1284 873h0M1190 490h0M697 390h0M1050 487h0M623 464h0M991 469h0M801 453h0M967 461h0M893 453h0M1406 603h0M1267 469h0M941 439h0M1240 476h0M934 465h0M1221 531h0M1112 495h0M1288 495h0M1236 539h0M1418 639h0M1301 657h0M1526 632h0M675 464h0M1357 683h0M1151 482h0M965 421h0M1324 594h0M691 431h0M1259 568h0M944 415h0M681 365h0M597 475h0M1139 468h0M946 433h0M1287 615h0M584 511h0M1205 449h0M1245 628h0M1140 550h0M1177 472h0M1329 649h0M658 378h0M1287 861h0M794 398h0M1345 540h0M1147 550h0M819 411h0M1324 618h0M1206 463h0M911 473h0M1028 499h0M590 586h0M966 386h0M1108 409h0M1433 580h0M1415 539h0M1288 520h0M735 502h0M982 435h0M737 439h0M1209 509h0M1384 646h0M1359 692h0M911 479h0M1398 691h0M821 392h0M593 558h0M1423 636h0M825 407h0M1373 508h0M1158 546h0M1106 487h0M784 466h0M1097 508h0M1408 650h0M1377 690h0M812 524h0M836 429h0M1264 521h0M1412 647h0M971 395h0M1308 602h0M747 400h0M620 553h0M736 485h0M1218 612h0M1166 486h0M992 380h0M1276 517h0M1193 560h0M1292 611h0M732 373h0M1010 464h0M625 505h0M1443 547h0M809 513h0M1275 522h0M1030 386h0M979 414h0M1174 450h0M1471 574h0M1479 576h0M1292 509h0M885 486h0M1431 724h0M657 583h0M673 519h0M1323 536h0M1154 469h0M1189 459h0M1124 550h0M1402 671h0M978 376h0M642 583h0M588 483h0M1125 489h0M979 406h0M604 464h0M641 739h0M635 658h0M636 644h0M719 845h0M726 889h0M706 819h0M626 654h0M641 740h0M740 913h0M640 746h0M623 717h0M678 736h0M609 624h0M678 773h0M611 659h0M689 868h0M647 694h0M640 665h0M680 765h0M668 718h0M669 733h0M709 847h0M637 627h0M680 807h0M637 674h0M700 896h0M704 812h0M682 749h0M612 658h0M630 708h0M695 833h0M661 784h0M671 758h0M596 648h0M605 668h0M725 888h0M601 655h0M682 857h0M705 857h0M707 800h0M653 687h0M594 614h0M678 749h0M613 693h0M675 773h0M727 885h0M592 637h0M600 651h0M676 814h0M688 834h0M635 699h0M702 849h0M623 649h0M617 618h0M638 667h0M623 676h0M630 684h0M703 876h0M729 900h0M728 882h0M674 815h0M632 729h0M706 879h0M637 710h0M651 751h0M654 771h0M638 637h0M634 660h0M694 766h0M659 753h0M704 839h0M671 827h0M699 875h0M642 748h0M635 665h0M625 720h0M722 851h0M653 698h0M651 774h0M703 804h0M640 676h0M620 644h0M624 620h0M659 797h0M582 616h0M695 769h0M679 778h0M650 720h0M673 816h0M669 766h0M665 773h0M716 891h0M674 753h0M673 738h0M718 864h0M618 698h0M660 804h0M698 880h0M683 760h0M636 713h0M703 850h0M630 706h0M706 808h0M617 683h0M683 831h0M688 840h0M660 766h0M642 650h0M591 638h0M737 901h0M630 664h0M604 667h0M674 756h0M649 714h0M676 811h0M625 721h0M633 659h0M696 771h0M627 662h0M627 717h0M714 825h0M587 632h0M658 794h0M617 608h0M632 633h0M620 684h0M697 860h0M712 842h0M770 843h0M819 897h0M805 765h0M815 886h0M777 838h0M832 863h0M733 637h0M808 793h0M816 848h0M749 784h0M723 680h0M737 747h0M757 819h0M819 916h0M774 702h0M803 781h0M783 883h0M764 683h0M764 736h0M805 884h0M791 811h0M799 821h0M807 822h0M724 694h0M801 906h0M841 872h0M802 800h0M773 829h0M775 735h0M823 804h0M763 782h0M759 757h0M760 756h0M761 699h0M759 709h0M806 775h0M723 734h0M812 849h0M776 710h0M762 716h0M808 886h0M810 844h0M780 710h0M792 747h0M795 828h0M721 598h0M800 860h0M784 747h0M807 875h0M737 709h0M753 807h0M721 701h0M807 774h0M843 864h0M808 896h0M695 615h0M722 666h0M793 773h0M839 896h0M746 791h0M740 762h0M848 908h0M690 627h0M713 625h0M854 904h0M721 700h0M740 637h0M804 865h0M793 868h0M737 714h0M759 729h0M785 886h0M726 624h0M715 636h0M800 882h0M755 703h0M761 764h0M729 690h0M739 663h0M757 725h0M794 897h0M797 841h0M808 913h0M755 680h0M842 889h0M802 810h0M808 867h0M805 775h0M765 736h0M843 888h0M839 896h0M782 773h0M810 787h0M800 908h0M818 809h0M833 838h0M730 651h0M830 897h0M743 710h0M718 645h0M816 861h0M749 659h0M771 774h0M745 799h0M764 728h0M734 676h0M728 627h0M765 815h0M836 908h0M763 750h0M796 768h0M781 745h0M802 840h0M768 701h0M739 737h0M747 756h0M824 901h0M751 679h0M788 867h0M811 790h0M763 729h0M794 857h0M745 771h0M762 849h0M853 901h0M857 890h0M724 726h0M796 791h0M780 742h0M746 655h0M787 871h0M736 772h0M770 719h0M791 860h0M707 632h0M842 853h0M765 835h0M718 598h0M781 746h0M818 800h0M836 844h0M721 624h0M777 822h0M800 910h0M785 868h0M764 800h0M765 849h0M710 661h0M806 812h0M727 707h0M810 866h0M774 814h0M783 791h0M742 734h0M795 881h0M822 890h0M782 885h0M742 792h0M819 898h0M761 719h0M753 732h0M782 813h0M801 865h0M756 816h0M805 828h0M730 757h0M804 898h0M806 810h0M731 671h0M702 634h0M741 664h0M822 865h0M751 790h0M842 893h0M1280 901h0M1340 903h0M1338 898h0M1327 892h0M1370 825h0M1401 827h0M1394 801h0M1467 746h0M1316 853h0M1355 899h0M1465 706h0M1354 896h0M1400 811h0M1418 817h0M1352 820h0M1468 752h0M1524 705h0M1453 716h0M1461 738h0M1536 692h0M1482 724h0M1429 806h0M1386 842h0M1337 895h0M1295 904h0M1387 795h0M1297 871h0M1405 853h0M1387 861h0M1436 780h0M1368 848h0M1404 836h0M1515 734h0M1439 741h0M1415 844h0M1296 897h0M1343 851h0M1360 835h0M1355 881h0M1398 768h0M1353 905h0M1458 741h0M1324 910h0M1400 865h0M1509 678h0M1448 725h0M1521 721h0M1302 881h0M1430 831h0M1491 754h0M1517 691h0M1375 878h0M1485 725h0M1399 818h0M1379 854h0M1479 738h0M1318 856h0M1462 705h0M1481 711h0M1332 833h0M1436 831h0M1413 848h0M1280 896h0M1440 773h0M1420 823h0M1534 703h0M1363 836h0M1500 722h0M1505 707h0M1354 862h0M1470 700h0M1491 734h0M1451 800h0M1481 690h0M1466 746h0M1438 813h0M1321 869h0M1447 726h0M1510 695h0M1385 851h0M1521 666h0M1420 777h0M1391 873h0M1413 857h0M1460 769h0M1475 780h0M1334 875h0M1423 776h0M1374 858h0M1309 903h0M1290 909h0M1335 888h0M1464 783h0M1301 909h0M1493 758h0M1377 896h0M1402 792h0M1393 803h0M1491 699h0" stroke="#161616" stroke-width="5" stroke-linecap="round"/>
<path d="M1178 496h1v1h-1zM1036 473h1v1h-1zM787 447h1v1h-1zM1262 590h1v1h-1zM1406 707h1v1h-1zM780 499h1v1h-1zM1203 556h1v1h-1zM1406 727h1v1h-1zM631 495h1v1h-1zM1449 586h1v1h-1zM1362 698h1v1h-1zM1485 593h1v1h-1zM702 561h1v1h-1zM754 410h1v1h-1zM1028 455h1v1h-1zM811 462h1v1h-1zM593 425h1v1h-1zM920 411h1v1h-1zM590 555h1v1h-1zM759 438h1v1h-1zM756 523h1v1h-1zM1327 580h1v1h-1zM1156 425h1v1h-1zM694 431h1v1h-1zM722 383h1v1h-1zM1284 477h1v1h-1zM1398 754h1v1h-1zM832 366h1v1h-1zM1183 566h1v1h-1zM899 495h1v1h-1zM738 417h1v1h-1zM1278 634h1v1h-1zM858 509h1v1h-1zM868 420h1v1h-1zM598 556h1v1h-1zM1077 391h1v1h-1zM812 505h1v1h-1zM653 579h1v1h-1zM794 510h1v1h-1zM1412 732h1v1h-1zM1430 678h1v1h-1zM808 465h1v1h-1zM622 381h1v1h-1zM746 525h1v1h-1zM1397 733h1v1h-1zM1398 658h1v1h-1zM594 383h1v1h-1zM1450 568h1v1h-1zM866 475h1v1h-1zM686 511h1v1h-1zM608 428h1v1h-1zM1125 431h1v1h-1zM765 518h1v1h-1zM862 390h1v1h-1zM1271 592h1v1h-1zM1364 638h1v1h-1zM621 507h1v1h-1zM1153 548h1v1h-1zM954 439h1v1h-1zM1204 547h1v1h-1zM681 505h1v1h-1zM1394 625h1v1h-1zM1445 619h1v1h-1zM730 424h1v1h-1zM1408 528h1v1h-1zM1025 390h1v1h-1zM1122 453h1v1h-1zM1407 690h1v1h-1zM1143 512h1v1h-1zM1463 603h1v1h-1zM1400 636h1v1h-1zM850 483h1v1h-1zM879 434h1v1h-1zM1092 467h1v1h-1zM717 517h1v1h-1zM790 493h1v1h-1zM1414 667h1v1h-1zM1379 598h1v1h-1zM1089 413h1v1h-1zM1238 568h1v1h-1zM625 534h1v1h-1zM1057 493h1v1h-1zM850 511h1v1h-1zM1263 613h1v1h-1zM1313 647h1v1h-1zM984 427h1v1h-1zM1417 555h1v1h-1zM1385 693h1v1h-1zM1277 591h1v1h-1zM609 553h1v1h-1zM912 467h1v1h-1zM632 416h1v1h-1zM1363 670h1v1h-1zM927 420h1v1h-1zM1015 463h1v1h-1zM678 567h1v1h-1zM719 418h1v1h-1zM608 515h1v1h-1zM584 452h1v1h-1zM787 467h1v1h-1zM682 538h1v1h-1zM801 429h1v1h-1zM895 366h1v1h-1zM856 468h1v1h-1zM979 464h1v1h-1zM1160 591h1v1h-1zM1336 537h1v1h-1zM640 576h1v1h-1zM764 433h1v1h-1zM846 474h1v1h-1zM1185 495h1v1h-1zM894 370h1v1h-1zM1066 447h1v1h-1zM1109 465h1v1h-1zM631 583h1v1h-1zM1231 511h1v1h-1zM788 422h1v1h-1zM1446 644h1v1h-1zM1210 441h1v1h-1zM973 468h1v1h-1zM1158 491h1v1h-1zM1367 766h1v1h-1zM1282 534h1v1h-1zM651 396h1v1h-1zM1426 636h1v1h-1zM1100 482h1v1h-1zM697 426h1v1h-1zM1449 684h1v1h-1zM1122 539h1v1h-1zM1131 444h1v1h-1zM632 570h1v1h-1zM590 462h1v1h-1zM749 490h1v1h-1zM607 565h1v1h-1zM1312 641h1v1h-1zM1058 391h1v1h-1zM1056 393h1v1h-1zM675 571h1v1h-1zM605 494h1v1h-1zM812 455h1v1h-1zM1213 586h1v1h-1zM801 364h1v1h-1zM706 591h1v1h-1zM1362 651h1v1h-1zM739 564h1v1h-1zM926 442h1v1h-1zM1380 659h1v1h-1zM1276 549h1v1h-1zM1438 541h1v1h-1zM1502 637h1v1h-1zM1140 412h1v1h-1zM981 467h1v1h-1zM692 588h1v1h-1zM1432 578h1v1h-1zM648 472h1v1h-1zM637 499h1v1h-1zM593 395h1v1h-1zM875 461h1v1h-1zM1330 616h1v1h-1zM598 507h1v1h-1zM778 514h1v1h-1zM945 476h1v1h-1zM927 446h1v1h-1zM1418 546h1v1h-1zM1479 627h1v1h-1zM840 381h1v1h-1zM1167 471h1v1h-1zM1378 603h1v1h-1zM1328 557h1v1h-1zM860 423h1v1h-1zM880 477h1v1h-1zM816 500h1v1h-1zM695 488h1v1h-1zM690 501h1v1h-1zM627 487h1v1h-1zM690 476h1v1h-1zM1352 685h1v1h-1zM765 440h1v1h-1zM1151 472h1v1h-1zM1067 495h1v1h-1zM1390 606h1v1h-1zM1401 604h1v1h-1zM920 371h1v1h-1zM1097 537h1v1h-1zM1382 590h1v1h-1zM1043 393h1v1h-1zM762 431h1v1h-1zM1307 633h1v1h-1zM741 441h1v1h-1zM632 532h1v1h-1zM905 464h1v1h-1zM836 410h1v1h-1zM658 584h1v1h-1zM775 403h1v1h-1zM1398 640h1v1h-1zM712 368h1v1h-1zM1009 395h1v1h-1zM819 406h1v1h-1zM746 427h1v1h-1zM936 424h1v1h-1zM732 499h1v1h-1zM1276 476h1v1h-1zM1328 613h1v1h-1zM1386 605h1v1h-1zM1106 404h1v1h-1zM1395 563h1v1h-1zM591 451h1v1h-1zM886 466h1v1h-1zM749 443h1v1h-1zM841 404h1v1h-1zM1182 457h1v1h-1zM1317 821h1v1h-1zM639 582h1v1h-1zM834 375h1v1h-1zM1218 447h1v1h-1zM971 453h1v1h-1zM1421 643h1v1h-1zM1248 557h1v1h-1zM1264 545h1v1h-1zM685 573h1v1h-1zM1232 456h1v1h-1zM689 398h1v1h-1zM1328 676h1v1h-1zM809 384h1v1h-1zM743 370h1v1h-1zM1240 555h1v1h-1zM1399 543h1v1h-1zM1007 435h1v1h-1zM759 466h1v1h-1zM960 453h1v1h-1zM622 552h1v1h-1zM1280 863h1v1h-1zM1481 563h1v1h-1zM619 529h1v1h-1zM770 371h1v1h-1zM646 462h1v1h-1zM712 577h1v1h-1zM783 388h1v1h-1zM1276 519h1v1h-1zM1283 530h1v1h-1zM965 417h1v1h-1zM1521 630h1v1h-1zM1507 634h1v1h-1zM1402 589h1v1h-1zM1048 434h1v1h-1zM1360 551h1v1h-1zM609 389h1v1h-1zM1270 478h1v1h-1zM1466 669h1v1h-1zM1000 412h1v1h-1zM620 496h1v1h-1zM1456 616h1v1h-1zM1507 599h1v1h-1zM652 486h1v1h-1zM1289 632h1v1h-1zM750 425h1v1h-1zM644 477h1v1h-1zM1151 566h1v1h-1zM999 409h1v1h-1zM1170 515h1v1h-1zM1119 463h1v1h-1zM812 506h1v1h-1zM776 540h1v1h-1zM1192 467h1v1h-1zM1297 477h1v1h-1zM715 574h1v1h-1zM599 496h1v1h-1zM1070 481h1v1h-1zM1342 808h1v1h-1zM1229 567h1v1h-1zM945 454h1v1h-1zM1450 549h1v1h-1zM956 365h1v1h-1zM1419 540h1v1h-1zM1012 405h1v1h-1zM1488 582h1v1h-1zM1383 645h1v1h-1zM969 418h1v1h-1zM1184 541h1v1h-1zM629 461h1v1h-1zM881 394h1v1h-1zM1074 474h1v1h-1zM635 537h1v1h-1zM1508 645h1v1h-1zM988 464h1v1h-1zM1168 493h1v1h-1zM1303 842h1v1h-1zM1320 552h1v1h-1zM774 374h1v1h-1zM862 409h1v1h-1zM1120 459h1v1h-1zM1127 492h1v1h-1zM1066 504h1v1h-1zM745 455h1v1h-1zM973 412h1v1h-1zM587 403h1v1h-1zM909 416h1v1h-1zM1158 463h1v1h-1zM1213 535h1v1h-1zM1200 531h1v1h-1zM1246 587h1v1h-1zM1266 567h1v1h-1zM1422 659h1v1h-1zM1446 633h1v1h-1zM665 460h1v1h-1zM945 406h1v1h-1zM1268 625h1v1h-1zM1432 690h1v1h-1zM999 369h1v1h-1zM1200 600h1v1h-1zM1102 545h1v1h-1zM766 437h1v1h-1zM646 371h1v1h-1zM1308 511h1v1h-1zM996 389h1v1h-1zM846 480h1v1h-1zM1415 717h1v1h-1zM1077 518h1v1h-1zM896 419h1v1h-1zM1177 457h1v1h-1zM1374 626h1v1h-1zM1358 544h1v1h-1zM1403 735h1v1h-1zM1401 550h1v1h-1zM1027 407h1v1h-1zM637 478h1v1h-1zM1162 447h1v1h-1zM1022 412h1v1h-1zM1005 387h1v1h-1zM656 460h1v1h-1zM1206 600h1v1h-1zM879 402h1v1h-1zM1171 466h1v1h-1zM759 415h1v1h-1zM1121 477h1v1h-1zM605 378h1v1h-1zM737 386h1v1h-1zM1328 551h1v1h-1zM750 518h1v1h-1zM991 461h1v1h-1zM1169 439h1v1h-1zM1270 473h1v1h-1zM717 533h1v1h-1zM727 491h1v1h-1zM1494 651h1v1h-1zM1411 678h1v1h-1zM911 422h1v1h-1zM851 365h1v1h-1zM1091 442h1v1h-1zM1296 473h1v1h-1zM662 487h1v1h-1zM1434 571h1v1h-1zM997 383h1v1h-1zM1356 608h1v1h-1zM1033 432h1v1h-1zM748 455h1v1h-1zM684 495h1v1h-1zM758 377h1v1h-1zM890 477h1v1h-1zM1058 452h1v1h-1zM689 548h1v1h-1zM1179 492h1v1h-1zM903 412h1v1h-1zM961 369h1v1h-1zM1410 588h1v1h-1zM814 440h1v1h-1zM1099 408h1v1h-1zM1088 433h1v1h-1zM834 524h1v1h-1zM1317 583h1v1h-1zM1141 501h1v1h-1zM671 565h1v1h-1zM1376 673h1v1h-1zM1329 649h1v1h-1zM1255 570h1v1h-1zM705 455h1v1h-1zM1409 626h1v1h-1zM701 530h1v1h-1zM641 522h1v1h-1zM1430 539h1v1h-1zM1172 463h1v1h-1zM1290 596h1v1h-1zM672 498h1v1h-1zM1261 488h1v1h-1zM593 369h1v1h-1zM721 512h1v1h-1zM1171 510h1v1h-1zM970 394h1v1h-1zM913 464h1v1h-1zM1181 509h1v1h-1zM1477 682h1v1h-1zM1483 566h1v1h-1zM1397 576h1v1h-1zM595 432h1v1h-1zM1385 651h1v1h-1zM1191 565h1v1h-1zM830 409h1v1h-1zM1273 624h1v1h-1zM1260 466h1v1h-1zM1202 492h1v1h-1zM622 409h1v1h-1zM1491 574h1v1h-1zM621 392h1v1h-1zM1429 682h1v1h-1zM647 382h1v1h-1zM1332 666h1v1h-1zM875 376h1v1h-1zM1396 651h1v1h-1zM1177 483h1v1h-1zM935 400h1v1h-1zM934 395h1v1h-1zM1364 562h1v1h-1zM865 416h1v1h-1zM993 420h1v1h-1zM645 519h1v1h-1zM821 435h1v1h-1zM856 366h1v1h-1zM1315 649h1v1h-1zM1377 687h1v1h-1zM769 496h1v1h-1zM1289 610h1v1h-1zM1076 405h1v1h-1zM632 470h1v1h-1zM620 404h1v1h-1zM1361 791h1v1h-1zM1160 454h1v1h-1zM1378 673h1v1h-1zM605 528h1v1h-1zM1071 452h1v1h-1zM950 377h1v1h-1zM902 463h1v1h-1zM1147 460h1v1h-1zM1336 682h1v1h-1zM838 458h1v1h-1zM1115 560h1v1h-1zM773 530h1v1h-1zM616 365h1v1h-1zM1095 529h1v1h-1zM842 446h1v1h-1zM942 427h1v1h-1zM1416 706h1v1h-1zM1111 517h1v1h-1zM1270 484h1v1h-1zM1388 520h1v1h-1zM1397 561h1v1h-1zM775 514h1v1h-1zM1379 560h1v1h-1zM1264 498h1v1h-1zM1034 375h1v1h-1zM1000 464h1v1h-1zM754 367h1v1h-1zM999 483h1v1h-1zM1247 501h1v1h-1zM1280 558h1v1h-1zM1520 602h1v1h-1zM1277 494h1v1h-1zM1182 450h1v1h-1zM1367 789h1v1h-1zM667 546h1v1h-1zM865 478h1v1h-1zM656 485h1v1h-1zM1192 476h1v1h-1zM1261 528h1v1h-1zM1360 594h1v1h-1zM1389 510h1v1h-1zM1323 502h1v1h-1zM898 385h1v1h-1zM915 475h1v1h-1zM1349 642h1v1h-1zM1437 700h1v1h-1zM835 470h1v1h-1zM931 477h1v1h-1zM749 466h1v1h-1zM1000 400h1v1h-1zM596 412h1v1h-1zM684 387h1v1h-1zM699 391h1v1h-1zM740 419h1v1h-1zM853 519h1v1h-1zM1525 577h1v1h-1zM767 483h1v1h-1zM709 577h1v1h-1zM1033 430h1v1h-1zM590 510h1v1h-1zM1267 635h1v1h-1zM780 393h1v1h-1zM744 480h1v1h-1zM688 410h1v1h-1zM1285 599h1v1h-1zM648 593h1v1h-1zM1370 692h1v1h-1zM1365 600h1v1h-1zM1396 698h1v1h-1zM1088 487h1v1h-1zM1391 551h1v1h-1zM1454 628h1v1h-1zM1332 546h1v1h-1zM909 399h1v1h-1zM1221 580h1v1h-1zM1281 472h1v1h-1zM770 467h1v1h-1zM722 542h1v1h-1zM864 423h1v1h-1zM708 591h1v1h-1zM1164 559h1v1h-1zM615 387h1v1h-1zM1522 571h1v1h-1zM854 486h1v1h-1zM1373 659h1v1h-1zM1440 671h1v1h-1zM1391 540h1v1h-1zM717 534h1v1h-1zM822 376h1v1h-1zM869 405h1v1h-1zM1353 552h1v1h-1zM1214 472h1v1h-1zM769 375h1v1h-1zM895 370h1v1h-1zM627 421h1v1h-1zM1044 394h1v1h-1zM1326 586h1v1h-1zM583 368h1v1h-1zM588 450h1v1h-1zM745 455h1v1h-1zM732 407h1v1h-1zM855 491h1v1h-1zM1016 412h1v1h-1zM1161 566h1v1h-1zM1095 529h1v1h-1zM1293 527h1v1h-1zM1066 414h1v1h-1zM1512 564h1v1h-1zM611 573h1v1h-1zM1265 551h1v1h-1zM1264 486h1v1h-1zM760 521h1v1h-1zM1263 549h1v1h-1zM1305 593h1v1h-1zM788 386h1v1h-1zM1455 653h1v1h-1zM998 455h1v1h-1zM1292 542h1v1h-1zM1314 525h1v1h-1zM793 390h1v1h-1zM691 405h1v1h-1zM1286 860h1v1h-1zM1132 552h1v1h-1zM1116 543h1v1h-1zM1102 493h1v1h-1zM1168 569h1v1h-1zM1125 475h1v1h-1zM744 433h1v1h-1zM1243 632h1v1h-1zM783 473h1v1h-1zM600 478h1v1h-1zM701 417h1v1h-1zM1035 473h1v1h-1zM1165 561h1v1h-1zM1394 653h1v1h-1zM781 477h1v1h-1zM777 425h1v1h-1zM1432 590h1v1h-1zM1441 669h1v1h-1zM731 470h1v1h-1zM924 416h1v1h-1zM1084 469h1v1h-1zM714 398h1v1h-1zM809 387h1v1h-1zM1347 531h1v1h-1zM651 467h1v1h-1zM1059 495h1v1h-1zM861 385h1v1h-1zM1258 482h1v1h-1zM752 466h1v1h-1zM603 600h1v1h-1zM1305 492h1v1h-1zM762 547h1v1h-1zM1426 554h1v1h-1zM991 477h1v1h-1zM1177 555h1v1h-1zM1202 610h1v1h-1zM972 443h1v1h-1zM853 504h1v1h-1zM1431 651h1v1h-1zM596 423h1v1h-1zM1119 529h1v1h-1zM858 457h1v1h-1zM1107 399h1v1h-1zM1286 559h1v1h-1zM627 401h1v1h-1zM719 496h1v1h-1zM1064 416h1v1h-1zM1452 679h1v1h-1zM995 400h1v1h-1zM1338 567h1v1h-1zM1387 587h1v1h-1zM1409 691h1v1h-1zM1116 482h1v1h-1zM1341 810h1v1h-1zM1374 685h1v1h-1zM1176 449h1v1h-1zM1394 514h1v1h-1zM1273 876h1v1h-1zM1002 397h1v1h-1zM899 436h1v1h-1zM1488 641h1v1h-1zM1319 514h1v1h-1zM1125 471h1v1h-1zM671 563h1v1h-1zM958 471h1v1h-1zM1393 625h1v1h-1zM1083 467h1v1h-1zM1049 408h1v1h-1zM1277 537h1v1h-1zM933 396h1v1h-1zM1218 448h1v1h-1zM818 497h1v1h-1zM1357 779h1v1h-1zM1011 489h1v1h-1zM1280 476h1v1h-1zM1099 413h1v1h-1zM1308 522h1v1h-1zM842 517h1v1h-1zM1327 533h1v1h-1zM1453 663h1v1h-1zM1370 587h1v1h-1zM1337 628h1v1h-1zM1372 643h1v1h-1zM668 374h1v1h-1zM1126 492h1v1h-1zM1174 513h1v1h-1zM1183 456h1v1h-1zM1245 554h1v1h-1zM726 430h1v1h-1zM1253 635h1v1h-1zM1227 589h1v1h-1zM708 406h1v1h-1zM707 378h1v1h-1zM1348 581h1v1h-1zM866 513h1v1h-1zM1138 496h1v1h-1zM912 453h1v1h-1zM1482 612h1v1h-1zM832 428h1v1h-1zM716 476h1v1h-1zM1156 469h1v1h-1zM807 435h1v1h-1zM1403 668h1v1h-1zM685 380h1v1h-1zM1158 420h1v1h-1zM643 401h1v1h-1zM1102 496h1v1h-1zM940 431h1v1h-1zM751 418h1v1h-1zM1037 388h1v1h-1zM1366 574h1v1h-1zM1432 647h1v1h-1zM1321 620h1v1h-1zM681 445h1v1h-1zM1021 435h1v1h-1zM1204 440h1v1h-1zM809 387h1v1h-1zM764 407h1v1h-1zM777 511h1v1h-1zM1291 578h1v1h-1zM1221 541h1v1h-1zM785 424h1v1h-1zM1050 488h1v1h-1zM1203 454h1v1h-1zM1495 654h1v1h-1zM1131 446h1v1h-1zM1113 540h1v1h-1zM806 506h1v1h-1zM1314 617h1v1h-1zM1184 462h1v1h-1zM1300 532h1v1h-1zM1067 450h1v1h-1zM1345 789h1v1h-1zM652 415h1v1h-1zM903 436h1v1h-1zM1271 539h1v1h-1zM1194 481h1v1h-1zM1113 545h1v1h-1zM666 480h1v1h-1zM659 376h1v1h-1zM639 553h1v1h-1zM1259 513h1v1h-1zM1061 516h1v1h-1zM1345 542h1v1h-1zM1183 518h1v1h-1zM1212 484h1v1h-1zM663 479h1v1h-1zM757 389h1v1h-1zM1324 828h1v1h-1zM780 400h1v1h-1zM1457 603h1v1h-1zM1152 491h1v1h-1zM583 578h1v1h-1zM973 473h1v1h-1zM646 567h1v1h-1zM712 409h1v1h-1zM1081 440h1v1h-1zM1348 598h1v1h-1zM695 517h1v1h-1zM1263 622h1v1h-1zM1350 567h1v1h-1zM665 372h1v1h-1zM944 474h1v1h-1zM801 447h1v1h-1zM1305 526h1v1h-1zM1196 534h1v1h-1zM592 409h1v1h-1zM1417 626h1v1h-1zM1290 869h1v1h-1zM1363 657h1v1h-1zM779 411h1v1h-1zM723 442h1v1h-1zM1284 647h1v1h-1zM919 457h1v1h-1zM748 435h1v1h-1zM1075 471h1v1h-1zM1435 592h1v1h-1zM901 498h1v1h-1zM1215 442h1v1h-1zM1019 439h1v1h-1zM1075 489h1v1h-1zM700 501h1v1h-1zM933 447h1v1h-1zM1060 516h1v1h-1zM1291 618h1v1h-1zM1159 468h1v1h-1zM1497 606h1v1h-1zM906 367h1v1h-1zM1127 539h1v1h-1zM1022 452h1v1h-1zM1250 911h1v1h-1zM1335 505h1v1h-1zM1376 781h1v1h-1zM1058 458h1v1h-1zM1230 523h1v1h-1zM1487 629h1v1h-1zM665 428h1v1h-1zM849 486h1v1h-1zM925 437h1v1h-1zM607 498h1v1h-1zM1217 522h1v1h-1zM1261 583h1v1h-1zM1244 458h1v1h-1zM1029 468h1v1h-1zM829 427h1v1h-1zM1392 574h1v1h-1zM1426 570h1v1h-1zM1128 540h1v1h-1zM1175 569h1v1h-1zM675 593h1v1h-1zM1128 462h1v1h-1zM801 406h1v1h-1zM684 491h1v1h-1zM774 524h1v1h-1zM1249 496h1v1h-1zM1331 625h1v1h-1zM703 468h1v1h-1zM766 501h1v1h-1zM1095 454h1v1h-1zM1079 488h1v1h-1zM1418 634h1v1h-1zM1273 633h1v1h-1zM1370 687h1v1h-1zM942 412h1v1h-1zM1274 600h1v1h-1zM812 503h1v1h-1zM1158 542h1v1h-1zM1361 639h1v1h-1zM819 461h1v1h-1zM948 372h1v1h-1zM1482 679h1v1h-1zM618 533h1v1h-1zM761 503h1v1h-1zM1405 635h1v1h-1zM1362 692h1v1h-1zM1033 459h1v1h-1zM1027 490h1v1h-1zM1186 430h1v1h-1zM1230 484h1v1h-1zM853 385h1v1h-1zM822 380h1v1h-1zM801 484h1v1h-1zM731 439h1v1h-1zM905 466h1v1h-1zM689 452h1v1h-1zM637 455h1v1h-1zM1429 579h1v1h-1zM1274 562h1v1h-1zM602 438h1v1h-1zM1289 865h1v1h-1zM1338 547h1v1h-1zM1233 627h1v1h-1zM976 454h1v1h-1zM595 404h1v1h-1zM1267 486h1v1h-1zM1087 452h1v1h-1zM840 456h1v1h-1zM1296 474h1v1h-1zM999 411h1v1h-1zM1438 706h1v1h-1zM837 381h1v1h-1zM1168 517h1v1h-1zM1013 384h1v1h-1zM741 400h1v1h-1zM622 458h1v1h-1zM1189 499h1v1h-1zM1402 535h1v1h-1zM1426 654h1v1h-1zM1357 498h1v1h-1zM1257 604h1v1h-1zM1229 610h1v1h-1zM824 380h1v1h-1zM1181 455h1v1h-1zM1286 578h1v1h-1zM1313 596h1v1h-1zM1206 473h1v1h-1zM636 415h1v1h-1zM1258 520h1v1h-1zM799 463h1v1h-1zM793 434h1v1h-1zM639 480h1v1h-1zM865 441h1v1h-1zM784 387h1v1h-1zM590 557h1v1h-1zM781 512h1v1h-1zM1171 458h1v1h-1zM648 548h1v1h-1zM1088 536h1v1h-1zM955 469h1v1h-1zM1274 878h1v1h-1zM580 519h1v1h-1zM750 384h1v1h-1zM1399 520h1v1h-1zM634 371h1v1h-1zM1457 664h1v1h-1zM1485 552h1v1h-1zM1270 550h1v1h-1zM1353 782h1v1h-1zM1299 848h1v1h-1zM708 553h1v1h-1zM864 408h1v1h-1zM1172 433h1v1h-1zM1330 623h1v1h-1zM756 445h1v1h-1zM615 591h1v1h-1zM683 567h1v1h-1zM1182 544h1v1h-1zM707 530h1v1h-1zM1293 489h1v1h-1zM781 486h1v1h-1zM1181 486h1v1h-1zM649 443h1v1h-1zM1209 556h1v1h-1zM647 462h1v1h-1zM1270 463h1v1h-1zM616 420h1v1h-1zM720 555h1v1h-1zM871 375h1v1h-1zM859 376h1v1h-1zM1299 611h1v1h-1zM824 511h1v1h-1zM1267 892h1v1h-1zM582 402h1v1h-1zM644 584h1v1h-1zM1521 601h1v1h-1zM674 572h1v1h-1zM996 418h1v1h-1zM818 454h1v1h-1zM1475 674h1v1h-1zM1527 566h1v1h-1zM1131 511h1v1h-1zM751 465h1v1h-1zM1259 567h1v1h-1zM1389 520h1v1h-1zM1385 746h1v1h-1zM1517 603h1v1h-1zM605 592h1v1h-1zM706 515h1v1h-1zM1272 621h1v1h-1zM832 370h1v1h-1zM732 541h1v1h-1zM1247 537h1v1h-1zM848 421h1v1h-1zM1136 436h1v1h-1zM672 441h1v1h-1zM1294 630h1v1h-1zM1117 499h1v1h-1zM1478 644h1v1h-1zM677 566h1v1h-1zM999 474h1v1h-1zM1268 638h1v1h-1zM917 366h1v1h-1zM1423 725h1v1h-1zM715 412h1v1h-1zM1200 565h1v1h-1zM1097 490h1v1h-1zM696 429h1v1h-1zM1234 504h1v1h-1zM767 540h1v1h-1zM1452 596h1v1h-1zM1210 470h1v1h-1zM1337 577h1v1h-1zM1064 462h1v1h-1zM1308 538h1v1h-1zM1162 536h1v1h-1zM1511 640h1v1h-1zM1469 597h1v1h-1zM1339 667h1v1h-1zM1378 519h1v1h-1zM903 448h1v1h-1zM629 467h1v1h-1zM1253 620h1v1h-1zM1064 448h1v1h-1zM1476 572h1v1h-1zM769 503h1v1h-1zM1112 554h1v1h-1zM1305 527h1v1h-1zM1383 515h1v1h-1zM1390 541h1v1h-1zM1442 564h1v1h-1zM819 393h1v1h-1zM600 543h1v1h-1zM1146 437h1v1h-1zM1443 589h1v1h-1zM1312 492h1v1h-1zM1422 578h1v1h-1zM1450 555h1v1h-1zM673 565h1v1h-1zM878 371h1v1h-1zM656 488h1v1h-1zM583 567h1v1h-1zM678 393h1v1h-1zM1317 512h1v1h-1zM1152 563h1v1h-1zM978 389h1v1h-1zM694 797h1v1h-1zM583 607h1v1h-1zM612 669h1v1h-1zM707 886h1v1h-1zM651 758h1v1h-1zM627 630h1v1h-1zM636 742h1v1h-1zM666 720h1v1h-1zM624 685h1v1h-1zM659 803h1v1h-1zM675 742h1v1h-1zM672 717h1v1h-1zM641 655h1v1h-1zM644 665h1v1h-1zM608 610h1v1h-1zM618 605h1v1h-1zM657 726h1v1h-1zM654 784h1v1h-1zM631 662h1v1h-1zM616 694h1v1h-1zM649 676h1v1h-1zM694 819h1v1h-1zM649 663h1v1h-1zM585 599h1v1h-1zM697 819h1v1h-1zM626 711h1v1h-1zM676 780h1v1h-1zM724 859h1v1h-1zM614 683h1v1h-1zM691 851h1v1h-1zM659 683h1v1h-1zM664 772h1v1h-1zM676 770h1v1h-1zM706 888h1v1h-1zM694 762h1v1h-1zM631 628h1v1h-1zM665 724h1v1h-1zM633 721h1v1h-1zM597 647h1v1h-1zM688 766h1v1h-1zM679 783h1v1h-1zM718 844h1v1h-1zM682 767h1v1h-1zM664 813h1v1h-1zM694 771h1v1h-1zM629 673h1v1h-1zM662 802h1v1h-1zM672 710h1v1h-1zM661 709h1v1h-1zM653 665h1v1h-1zM634 660h1v1h-1zM642 753h1v1h-1zM622 708h1v1h-1zM626 691h1v1h-1zM632 671h1v1h-1zM658 764h1v1h-1zM683 800h1v1h-1zM656 736h1v1h-1zM630 614h1v1h-1zM696 846h1v1h-1zM677 782h1v1h-1zM624 684h1v1h-1zM652 700h1v1h-1zM612 659h1v1h-1zM654 770h1v1h-1zM658 711h1v1h-1zM640 727h1v1h-1zM712 831h1v1h-1zM687 761h1v1h-1zM633 743h1v1h-1zM598 627h1v1h-1zM656 667h1v1h-1zM690 839h1v1h-1zM583 612h1v1h-1zM687 798h1v1h-1zM736 911h1v1h-1zM600 648h1v1h-1zM650 703h1v1h-1zM625 610h1v1h-1zM661 778h1v1h-1zM597 653h1v1h-1zM728 879h1v1h-1zM656 716h1v1h-1zM694 882h1v1h-1zM674 782h1v1h-1zM680 808h1v1h-1zM609 654h1v1h-1zM620 676h1v1h-1zM670 828h1v1h-1zM610 680h1v1h-1zM589 606h1v1h-1zM684 855h1v1h-1zM713 843h1v1h-1zM656 718h1v1h-1zM663 772h1v1h-1zM613 662h1v1h-1zM784 837h1v1h-1zM781 800h1v1h-1zM818 891h1v1h-1zM703 645h1v1h-1zM722 698h1v1h-1zM753 751h1v1h-1zM799 884h1v1h-1zM797 819h1v1h-1zM738 734h1v1h-1zM811 823h1v1h-1zM768 715h1v1h-1zM811 914h1v1h-1zM805 865h1v1h-1zM820 795h1v1h-1zM705 641h1v1h-1zM732 761h1v1h-1zM729 704h1v1h-1zM763 851h1v1h-1zM730 642h1v1h-1zM834 856h1v1h-1zM766 832h1v1h-1zM758 832h1v1h-1zM809 776h1v1h-1zM742 654h1v1h-1zM818 907h1v1h-1zM796 861h1v1h-1zM764 760h1v1h-1zM778 897h1v1h-1zM775 871h1v1h-1zM755 815h1v1h-1zM758 675h1v1h-1zM684 614h1v1h-1zM783 768h1v1h-1zM773 722h1v1h-1zM784 731h1v1h-1zM794 910h1v1h-1zM755 685h1v1h-1zM774 873h1v1h-1zM814 831h1v1h-1zM721 672h1v1h-1zM761 750h1v1h-1zM790 913h1v1h-1zM766 750h1v1h-1zM807 861h1v1h-1zM763 687h1v1h-1zM805 840h1v1h-1zM733 741h1v1h-1zM793 838h1v1h-1zM860 913h1v1h-1zM825 846h1v1h-1zM755 697h1v1h-1zM773 773h1v1h-1zM842 866h1v1h-1zM823 832h1v1h-1zM744 721h1v1h-1zM834 832h1v1h-1zM738 657h1v1h-1zM838 880h1v1h-1zM800 800h1v1h-1zM770 824h1v1h-1zM761 726h1v1h-1zM812 891h1v1h-1zM806 809h1v1h-1zM715 683h1v1h-1zM767 789h1v1h-1zM730 648h1v1h-1zM749 660h1v1h-1zM750 716h1v1h-1zM838 890h1v1h-1zM769 787h1v1h-1zM681 611h1v1h-1zM795 828h1v1h-1zM849 889h1v1h-1zM704 627h1v1h-1zM714 598h1v1h-1zM689 616h1v1h-1zM835 867h1v1h-1zM736 670h1v1h-1zM790 907h1v1h-1zM775 883h1v1h-1zM738 708h1v1h-1zM714 655h1v1h-1zM679 601h1v1h-1zM746 715h1v1h-1zM720 686h1v1h-1zM838 878h1v1h-1zM721 643h1v1h-1zM758 757h1v1h-1zM830 892h1v1h-1zM775 769h1v1h-1zM813 819h1v1h-1zM731 729h1v1h-1zM771 736h1v1h-1zM783 865h1v1h-1zM797 780h1v1h-1zM833 856h1v1h-1zM776 868h1v1h-1zM714 605h1v1h-1zM792 737h1v1h-1zM708 637h1v1h-1zM796 827h1v1h-1zM764 754h1v1h-1zM763 751h1v1h-1zM843 903h1v1h-1zM756 764h1v1h-1zM743 644h1v1h-1zM813 833h1v1h-1zM759 739h1v1h-1zM752 715h1v1h-1zM749 771h1v1h-1zM784 888h1v1h-1zM783 909h1v1h-1zM701 599h1v1h-1zM704 625h1v1h-1zM825 861h1v1h-1zM793 814h1v1h-1zM758 759h1v1h-1zM769 712h1v1h-1zM839 845h1v1h-1zM756 800h1v1h-1zM807 866h1v1h-1zM805 912h1v1h-1zM778 787h1v1h-1zM820 869h1v1h-1zM726 623h1v1h-1zM778 868h1v1h-1zM740 782h1v1h-1zM730 736h1v1h-1zM701 608h1v1h-1zM769 860h1v1h-1zM829 837h1v1h-1zM794 766h1v1h-1zM760 729h1v1h-1zM801 808h1v1h-1zM841 881h1v1h-1zM743 739h1v1h-1zM756 703h1v1h-1zM752 806h1v1h-1zM723 624h1v1h-1zM717 683h1v1h-1zM758 776h1v1h-1zM800 783h1v1h-1zM759 816h1v1h-1zM726 738h1v1h-1zM782 866h1v1h-1zM815 804h1v1h-1zM821 873h1v1h-1zM782 752h1v1h-1zM749 720h1v1h-1zM726 702h1v1h-1zM852 916h1v1h-1zM740 735h1v1h-1zM1446 745h1v1h-1zM1325 917h1v1h-1zM1324 912h1v1h-1zM1409 797h1v1h-1zM1518 698h1v1h-1zM1437 741h1v1h-1zM1399 763h1v1h-1zM1367 871h1v1h-1zM1476 756h1v1h-1zM1376 788h1v1h-1zM1378 887h1v1h-1zM1339 915h1v1h-1zM1443 803h1v1h-1zM1405 760h1v1h-1zM1455 719h1v1h-1zM1347 843h1v1h-1zM1437 794h1v1h-1zM1422 772h1v1h-1zM1403 793h1v1h-1zM1329 893h1v1h-1zM1346 886h1v1h-1zM1432 737h1v1h-1zM1401 831h1v1h-1zM1370 804h1v1h-1zM1534 661h1v1h-1zM1532 682h1v1h-1zM1431 751h1v1h-1zM1382 887h1v1h-1zM1350 879h1v1h-1zM1375 882h1v1h-1zM1338 901h1v1h-1zM1384 863h1v1h-1zM1332 892h1v1h-1zM1415 765h1v1h-1zM1422 846h1v1h-1zM1405 817h1v1h-1zM1395 766h1v1h-1zM1295 896h1v1h-1zM1518 660h1v1h-1zM1387 821h1v1h-1zM1379 878h1v1h-1zM1389 871h1v1h-1zM1488 747h1v1h-1zM1425 742h1v1h-1zM1414 825h1v1h-1zM1313 914h1v1h-1zM1303 912h1v1h-1zM1501 676h1v1h-1zM1393 838h1v1h-1zM1388 850h1v1h-1zM1277 901h1v1h-1zM1320 857h1v1h-1zM1378 793h1v1h-1zM1343 846h1v1h-1zM1257 909h1v1h-1zM1464 798h1v1h-1zM1339 824h1v1h-1zM1430 768h1v1h-1zM1521 710h1v1h-1zM1463 786h1v1h-1zM1342 870h1v1h-1zM1394 825h1v1h-1zM1347 891h1v1h-1zM1474 711h1v1h-1zM1517 717h1v1h-1zM1420 800h1v1h-1zM1379 791h1v1h-1zM1488 717h1v1h-1zM1363 876h1v1h-1zM1262 908h1v1h-1zM1341 899h1v1h-1zM1379 904h1v1h-1zM1348 898h1v1h-1zM1468 747h1v1h-1zM1413 771h1v1h-1zM1472 695h1v1h-1zM1439 767h1v1h-1zM1410 808h1v1h-1zM1393 867h1v1h-1zM1365 857h1v1h-1zM1434 783h1v1h-1zM1535 680h1v1h-1zM1456 761h1v1h-1zM1363 842h1v1h-1zM1499 736h1v1h-1zM1404 785h1v1h-1zM1288 898h1v1h-1zM1510 660h1v1h-1zM1423 816h1v1h-1zM1531 715h1v1h-1zM1449 768h1v1h-1zM1498 703h1v1h-1zM1455 760h1v1h-1zM1519 675h1v1h-1zM1457 787h1v1h-1zM1366 828h1v1h-1zM1389 837h1v1h-1zM1503 742h1v1h-1zM1435 749h1v1h-1zM1486 722h1v1h-1zM1515 732h1v1h-1zM1444 769h1v1h-1zM1383 891h1v1h-1zM1462 759h1v1h-1zM1431 787h1v1h-1zM1364 854h1v1h-1zM1447 808h1v1h-1zM1426 739h1v1h-1zM1496 758h1v1h-1zM1416 803h1v1h-1zM1517 660h1v1h-1zM1383 832h1v1h-1zM1338 835h1v1h-1zM1336 894h1v1h-1zM1339 832h1v1h-1zM1483 734h1v1h-1zM1379 902h1v1h-1zM1318 914h1v1h-1zM1451 808h1v1h-1zM1500 703h1v1h-1zM1506 671h1v1h-1zM1356 893h1v1h-1zM1355 821h1v1h-1zM1394 844h1v1h-1zM1348 878h1v1h-1zM1404 797h1v1h-1zM1509 689h1v1h-1zM1407 850h1v1h-1zM1483 754h1v1h-1zM1327 859h1v1h-1zM1492 742h1v1h-1zM1427 772h1v1h-1zM1344 908h1v1h-1zM1274 897h1v1h-1zM1338 827h1v1h-1zM1428 834h1v1h-1zM1421 851h1v1h-1zM1494 744h1v1h-1zM1380 873h1v1h-1zM1322 865h1v1h-1zM1494 734h1v1h-1zM1518 652h1v1h-1zM1415 799h1v1h-1zM1440 754h1v1h-1zM1332 895h1v1h-1zM1335 907h1v1h-1zM1486 699h1v1h-1zM1377 847h1v1h-1zM1479 706h1v1h-1zM1462 724h1v1h-1zM1318 888h1v1h-1zM1333 881h1v1h-1zM1386 825h1v1h-1zM1484 690h1v1h-1zM1491 694h1v1h-1zM1500 742h1v1h-1zM1436 809h1v1h-1zM1517 688h1v1h-1zM1465 721h1v1h-1zM1320 872h1v1h-1zM1338 865h1v1h-1zM1512 706h1v1h-1zM1469 776h1v1h-1zM1340 914h1v1h-1zM1411 866h1v1h-1zM1328 868h1v1h-1zM1334 913h1v1h-1zM1463 766h1v1h-1zM1392 861h1v1h-1zM1407 772h1v1h-1zM1332 862h1v1h-1zM1268 903h1v1h-1zM1347 890h1v1h-1zM1392 822h1v1h-1z" fill="#dadada"/>
<path d="M1048 377h0M1053 379h0M1062 389h0M1074 395h0M1085 390h0M1101 396h0M1103 399h0M1117 405h0M1128 407h0M1134 413h0M1149 422h0M1161 419h0M1170 425h0M1177 431h0M1188 431h0M1202 447h0M1211 438h0M1222 446h0M1234 452h0M1246 455h0M1254 454h0M1265 461h0M1280 467h0M1288 470h0M1298 478h0M1307 480h0M1316 484h0M1322 488h0M1338 494h0M1350 496h0M1356 501h0M1362 507h0M1376 504h0M1391 514h0M1395 519h0M1407 517h0M1419 524h0M1425 529h0M1439 525h0M1454 534h0M1461 544h0M1473 545h0M1482 547h0M1493 548h0M1500 551h0M1510 559h0M1518 565h0M1529 565h0M1523 649h0M1512 651h0M1508 663h0M1500 665h0M1493 670h0M1488 673h0M1482 687h0M1472 689h0M1465 702h0M1453 707h0M1447 716h0M1441 725h0M1435 729h0M1427 731h0M1412 743h0M1410 750h0M1405 755h0M1399 764h0M1389 775h0M1382 779h0M1373 782h0M1364 789h0M1357 803h0M1351 806h0M1341 814h0M1335 822h0M1330 829h0M1326 836h0M1323 842h0M1309 848h0M1306 857h0M1297 868h0M1292 876h0M1283 876h0M1270 887h0M1263 897h0M1257 901h0M1250 917h0" stroke="#e4e4e4" stroke-width="5.2" stroke-linecap="round"/>
<path d="M704 596h0M709 608h0M714 615h0M721 621h0M727 623h0M732 631h0M732 639h0M733 647h0M745 655h0M743 666h0M750 671h0M753 673h0M758 684h0M765 683h0M766 696h0M769 703h0M770 709h0M779 716h0M779 730h0M791 729h0M793 734h0M802 746h0M799 754h0M795 762h0M807 768h0M818 774h0M820 783h0M821 787h0M827 795h0M828 800h0M834 806h0M836 813h0M845 825h0M851 830h0M844 837h0M850 845h0M855 852h0M859 863h0M868 861h0M874 870h0M873 880h0M873 894h0M874 899h0M881 902h0M880 917h0" stroke="#dcdcdc" stroke-width="4.8" stroke-linecap="round"/>
<path d="M599 624h0M610 638h0M614 647h0M613 659h0M613 663h0M620 669h0M634 677h0M632 687h0M636 693h0M640 706h0M642 714h0M638 722h0M648 728h0M641 741h0M648 751h0M656 760h0M664 765h0M667 769h0M666 785h0M675 786h0M675 797h0M683 801h0M671 821h0M688 821h0M684 831h0M699 838h0M691 855h0M698 854h0M700 870h0M702 874h0M715 885h0M709 893h0M722 899h0M724 909h0" stroke="#d8d8d8" stroke-width="5" stroke-linecap="round"/>
<path d="M868 366h0M888 362h0M903 370h0M918 366h0M933 369h0M953 367h0M974 366h0M984 366h0M992 371h0M1015 371h0M1034 368h0" stroke="#cccccc" stroke-width="4" stroke-linecap="round"/>
<path d="M585 619h1.2v1.2h-1.2zM579 625h1.2v1.2h-1.2zM578 626h1.2v1.2h-1.2zM579 629h1.2v1.2h-1.2zM584 630h1.2v1.2h-1.2zM584 634h1.2v1.2h-1.2zM586 636h1.2v1.2h-1.2zM592 634h1.2v1.2h-1.2zM585 640h1.2v1.2h-1.2zM586 643h1.2v1.2h-1.2zM587 645h1.2v1.2h-1.2zM591 648h1.2v1.2h-1.2zM589 649h1.2v1.2h-1.2zM587 653h1.2v1.2h-1.2zM597 652h1.2v1.2h-1.2zM600 653h1.2v1.2h-1.2zM598 659h1.2v1.2h-1.2zM595 662h1.2v1.2h-1.2zM597 663h1.2v1.2h-1.2zM597 667h1.2v1.2h-1.2zM600 668h1.2v1.2h-1.2zM604 670h1.2v1.2h-1.2zM607 670h1.2v1.2h-1.2zM603 676h1.2v1.2h-1.2zM599 678h1.2v1.2h-1.2zM605 680h1.2v1.2h-1.2zM608 680h1.2v1.2h-1.2zM605 686h1.2v1.2h-1.2zM613 684h1.2v1.2h-1.2zM605 689h1.2v1.2h-1.2zM605 693h1.2v1.2h-1.2zM612 692h1.2v1.2h-1.2zM612 696h1.2v1.2h-1.2zM613 696h1.2v1.2h-1.2zM616 700h1.2v1.2h-1.2zM616 703h1.2v1.2h-1.2zM615 704h1.2v1.2h-1.2zM620 704h1.2v1.2h-1.2zM617 708h1.2v1.2h-1.2zM615 712h1.2v1.2h-1.2zM623 713h1.2v1.2h-1.2zM618 717h1.2v1.2h-1.2zM622 718h1.2v1.2h-1.2zM620 721h1.2v1.2h-1.2zM626 722h1.2v1.2h-1.2zM627 726h1.2v1.2h-1.2zM626 728h1.2v1.2h-1.2zM628 731h1.2v1.2h-1.2zM625 732h1.2v1.2h-1.2zM626 736h1.2v1.2h-1.2zM632 736h1.2v1.2h-1.2zM629 740h1.2v1.2h-1.2zM624 744h1.2v1.2h-1.2zM632 745h1.2v1.2h-1.2zM637 744h1.2v1.2h-1.2zM638 747h1.2v1.2h-1.2zM638 751h1.2v1.2h-1.2zM635 755h1.2v1.2h-1.2zM638 757h1.2v1.2h-1.2zM637 758h1.2v1.2h-1.2zM637 762h1.2v1.2h-1.2zM640 762h1.2v1.2h-1.2zM640 766h1.2v1.2h-1.2zM647 764h1.2v1.2h-1.2zM645 767h1.2v1.2h-1.2zM646 771h1.2v1.2h-1.2zM644 775h1.2v1.2h-1.2zM649 776h1.2v1.2h-1.2zM647 779h1.2v1.2h-1.2zM642 783h1.2v1.2h-1.2zM647 784h1.2v1.2h-1.2zM651 785h1.2v1.2h-1.2zM652 789h1.2v1.2h-1.2zM653 790h1.2v1.2h-1.2zM654 792h1.2v1.2h-1.2zM658 793h1.2v1.2h-1.2zM651 798h1.2v1.2h-1.2zM657 798h1.2v1.2h-1.2zM657 803h1.2v1.2h-1.2zM660 804h1.2v1.2h-1.2zM655 809h1.2v1.2h-1.2zM657 809h1.2v1.2h-1.2zM661 812h1.2v1.2h-1.2zM661 815h1.2v1.2h-1.2zM669 814h1.2v1.2h-1.2zM667 817h1.2v1.2h-1.2zM665 820h1.2v1.2h-1.2zM665 822h1.2v1.2h-1.2zM670 823h1.2v1.2h-1.2zM669 828h1.2v1.2h-1.2zM670 829h1.2v1.2h-1.2zM664 835h1.2v1.2h-1.2zM674 832h1.2v1.2h-1.2zM672 837h1.2v1.2h-1.2zM675 838h1.2v1.2h-1.2zM671 842h1.2v1.2h-1.2zM674 843h1.2v1.2h-1.2zM675 847h1.2v1.2h-1.2zM678 847h1.2v1.2h-1.2zM679 851h1.2v1.2h-1.2zM681 853h1.2v1.2h-1.2zM681 854h1.2v1.2h-1.2zM678 858h1.2v1.2h-1.2zM682 859h1.2v1.2h-1.2zM678 865h1.2v1.2h-1.2zM683 865h1.2v1.2h-1.2zM684 868h1.2v1.2h-1.2zM679 872h1.2v1.2h-1.2zM684 874h1.2v1.2h-1.2zM683 877h1.2v1.2h-1.2zM689 877h1.2v1.2h-1.2zM690 878h1.2v1.2h-1.2zM690 880h1.2v1.2h-1.2zM691 883h1.2v1.2h-1.2zM692 885h1.2v1.2h-1.2zM691 890h1.2v1.2h-1.2zM693 890h1.2v1.2h-1.2zM697 893h1.2v1.2h-1.2zM700 894h1.2v1.2h-1.2zM695 898h1.2v1.2h-1.2zM698 901h1.2v1.2h-1.2zM696 903h1.2v1.2h-1.2zM699 904h1.2v1.2h-1.2zM702 907h1.2v1.2h-1.2zM704 909h1.2v1.2h-1.2zM702 912h1.2v1.2h-1.2zM702 914h1.2v1.2h-1.2zM708 914h1.2v1.2h-1.2z" fill="#dddddd"/>
<g stroke-width="1.5"><path d="M1125 700V735M1130 698V738" stroke="#2233dd"/><path d="M1100 712H1150M1110 735H1145" stroke="#22cc22"/><path d="M1140 705L1138 730" stroke="#dd2222"/></g>
<path d="M1085 710H1178M1088 716H1175M1090 722H1170M1095 730H1160" stroke="#dddddd" stroke-width="1.5" stroke-dasharray="3 1"/>
<path d="M921 560V574M914 572H928" stroke="#3344dd" stroke-width="1.5"/><path d="M914 572L921 568" stroke="#22cc22" stroke-width="1.5"/>
</svg>
<!--/VP-->
<!-- ============ RVIZ LEFT PANEL ============ -->
<div class="a" style="left:0;top:364px;width:549px;height:445px;background:#fff;border-bottom:1px solid #b5b5b5;border-right:1px solid #b5b5b5;overflow:hidden">
  <div class="a" style="left:248px;top:14px;width:1px;height:19px;background:#e6e6e6"></div>
  <div class="a" style="left:248px;top:33px;width:1px;height:19px;background:#e6e6e6"></div>
  <svg class="a" style="left:3px;top:34px" width="17" height="17" viewBox="0 0 17 17"><g fill="#2e7ad0"><rect x="7" y="0" width="2" height="2"/><rect x="3" y="2" width="2" height="2"/><rect x="11" y="2" width="2" height="2"/><rect x="0" y="6" width="2" height="2"/><rect x="6" y="5" width="2" height="2"/><rect x="9" y="7" width="2" height="2"/><rect x="14" y="6" width="2" height="2"/><rect x="4" y="9" width="2" height="2"/><rect x="12" y="10" width="2" height="2"/><rect x="1" y="11" width="2" height="2"/><rect x="7" y="12" width="2" height="2"/><rect x="15" y="11" width="2" height="2"/><rect x="3" y="14" width="2" height="2"/><rect x="10" y="14" width="2" height="2"/><rect x="6" y="15" width="2" height="2"/></g></svg>
  <div class="t" style="left:25px;top:35px;font-size:15.3px;font-weight:bold;color:#2f78c4">PointCloud2</div>
  <div class="a" style="left:251px;top:35px;width:14px;height:14px;border:1px solid #b9b9b9;background:#fff;border-radius:1px"></div>
  <svg class="a" style="left:251px;top:35px" width="14" height="14" viewBox="0 0 14 14"><path d="M3.5 7 L6 10.5 L10.5 3" stroke="#2f6fb8" stroke-width="1.7" fill="none"/></svg>
  <div class="a" style="left:248px;top:52px;width:1px;height:19px;background:#e6e6e6"></div>
  <div class="a" style="left:8px;top:57px;width:0;height:0;border-left:4px solid #444;border-top:4px solid transparent;border-bottom:4px solid transparent"></div>
  <svg class="a" style="left:23px;top:53px" width="16" height="14" viewBox="0 0 16 14"><path d="M1 8 L5 12 L15 1" stroke="#1e8a1e" stroke-width="2.2" fill="none"/></svg>
  <div class="t" style="left:45px;top:54px;font-size:15.3px;color:#111">Status: Ok</div>
  <div class="a" style="left:0;top:71px;width:534px;height:19px;background:#308cc6"></div>
  <div class="a" style="left:248px;top:71px;width:1px;height:19px;background:#308cc6"></div>
  <div class="a" style="left:8px;top:76px;width:0;height:0;border-left:4px solid #1f3f5a;border-top:4px solid transparent;border-bottom:4px solid transparent"></div>
  <div class="t" style="left:23px;top:73px;font-size:15.3px;color:#fff">Topic</div>
  <div class="t" style="left:251px;top:73px;font-size:15.3px;color:#fff">/cloud_map</div>
  <div class="a" style="left:248px;top:90px;width:1px;height:19px;background:#e6e6e6"></div>
  <div class="t" style="left:23px;top:92px;font-size:15.3px;color:#111">Selectable</div>
  <div class="a" style="left:251px;top:92px;width:14px;height:14px;border:1px solid #b9b9b9;background:#fff;border-radius:1px"></div>
  <svg class="a" style="left:251px;top:92px" width="14" height="14" viewBox="0 0 14 14"><path d="M3.5 7 L6 10.5 L10.5 3" stroke="#111" stroke-width="1.7" fill="none"/></svg>
  <div class="a" style="left:248px;top:109px;width:1px;height:19px;background:#e6e6e6"></div>
  <div class="t" style="left:23px;top:111px;font-size:15.3px;color:#111">Style</div>
  <div class="t" style="left:251px;top:111px;font-size:15.3px;color:#111">Points</div>
  <div class="a" style="left:248px;top:128px;width:1px;height:19px;background:#e6e6e6"></div>
  <div class="t" style="left:23px;top:130px;font-size:15.3px;color:#111">Size (Pixels)</div>
  <div class="t" style="left:251px;top:130px;font-size:15.3px;color:#111">1</div>
  <div class="a" style="left:248px;top:147px;width:1px;height:19px;background:#e6e6e6"></div>
  <div class="t" style="left:23px;top:149px;font-size:15.3px;color:#111">Alpha</div>
  <div class="t" style="left:251px;top:149px;font-size:15.3px;color:#111">1</div>
  <div class="a" style="left:248px;top:166px;width:1px;height:19px;background:#e6e6e6"></div>
  <div class="t" style="left:23px;top:168px;font-size:15.3px;color:#111">Decay Time</div>
  <div class="t" style="left:251px;top:168px;font-size:15.3px;color:#111">0</div>
  <div class="a" style="left:248px;top:185px;width:1px;height:19px;background:#e6e6e6"></div>
  <div class="t" style="left:23px;top:187px;font-size:15.3px;color:#111">Position Transformer</div>
  <div class="t" style="left:251px;top:187px;font-size:15.3px;color:#111">XYZ</div>
  <div class="a" style="left:248px;top:204px;width:1px;height:19px;background:#e6e6e6"></div>
  <div class="t" style="left:23px;top:206px;font-size:15.3px;color:#111">Color Transformer</div>
  <div class="t" style="left:251px;top:206px;font-size:15.3px;color:#111">Intensity</div>
  <div class="a" style="left:248px;top:223px;width:1px;height:19px;background:#e6e6e6"></div>
  <div class="t" style="left:23px;top:225px;font-size:15.3px;color:#111">Channel Name</div>
  <div class="t" style="left:251px;top:225px;font-size:15.3px;color:#111">intensity</div>
  <div class="a" style="left:248px;top:242px;width:1px;height:19px;background:#e6e6e6"></div>
  <div class="t" style="left:23px;top:244px;font-size:15.3px;color:#111">Use rainbow</div>
  <div class="a" style="left:251px;top:244px;width:14px;height:14px;border:1px solid #b9b9b9;background:#fff;border-radius:1px"></div>
  <svg class="a" style="left:251px;top:244px" width="14" height="14" viewBox="0 0 14 14"><path d="M3.5 7 L6 10.5 L10.5 3" stroke="#111" stroke-width="1.7" fill="none"/></svg>
  <div class="a" style="left:248px;top:261px;width:1px;height:19px;background:#e6e6e6"></div>
  <div class="t" style="left:23px;top:263px;font-size:15.3px;color:#111">Invert Rainbow</div>
  <div class="a" style="left:251px;top:263px;width:14px;height:14px;border:1px solid #b9b9b9;background:#fff;border-radius:1px"></div>
  <div class="a" style="left:248px;top:280px;width:1px;height:19px;background:#e6e6e6"></div>
  <div class="t" style="left:23px;top:282px;font-size:15.3px;color:#111">Autocompute Intensity Bounds</div>
  <div class="a" style="left:251px;top:282px;width:14px;height:14px;border:1px solid #b9b9b9;background:#fff;border-radius:1px"></div>
  <svg class="a" style="left:251px;top:282px" width="14" height="14" viewBox="0 0 14 14"><path d="M3.5 7 L6 10.5 L10.5 3" stroke="#111" stroke-width="1.7" fill="none"/></svg>
  <div class="a" style="left:248px;top:299px;width:1px;height:19px;background:#e6e6e6"></div>
  <svg class="a" style="left:3px;top:300px" width="17" height="17" viewBox="0 0 17 17"><g fill="#2e7ad0"><rect x="7" y="0" width="2" height="2"/><rect x="3" y="2" width="2" height="2"/><rect x="11" y="2" width="2" height="2"/><rect x="0" y="6" width="2" height="2"/><rect x="6" y="5" width="2" height="2"/><rect x="9" y="7" width="2" height="2"/><rect x="14" y="6" width="2" height="2"/><rect x="4" y="9" width="2" height="2"/><rect x="12" y="10" width="2" height="2"/><rect x="1" y="11" width="2" height="2"/><rect x="7" y="12" width="2" height="2"/><rect x="15" y="11" width="2" height="2"/><rect x="3" y="14" width="2" height="2"/><rect x="10" y="14" width="2" height="2"/><rect x="6" y="15" width="2" height="2"/></g></svg>
  <div class="t" style="left:25px;top:301px;font-size:15.3px;font-weight:bold;color:#2f78c4">PointCloud2</div>
  <div class="a" style="left:251px;top:301px;width:14px;height:14px;border:1px solid #b9b9b9;background:#fff;border-radius:1px"></div>
  <svg class="a" style="left:251px;top:301px" width="14" height="14" viewBox="0 0 14 14"><path d="M3.5 7 L6 10.5 L10.5 3" stroke="#2f6fb8" stroke-width="1.7" fill="none"/></svg>
  <div class="a" style="left:248px;top:318px;width:1px;height:19px;background:#e6e6e6"></div>
  <div class="a" style="left:8px;top:323px;width:0;height:0;border-left:4px solid #444;border-top:4px solid transparent;border-bottom:4px solid transparent"></div>
  <svg class="a" style="left:23px;top:319px" width="16" height="14" viewBox="0 0 16 14"><path d="M1 8 L5 12 L15 1" stroke="#1e8a1e" stroke-width="2.2" fill="none"/></svg>
  <div class="t" style="left:45px;top:320px;font-size:15.3px;color:#111">Status: Ok</div>
  <div class="a" style="left:0;top:337px;width:534px;height:19px;background:#308cc6"></div>
  <div class="a" style="left:248px;top:337px;width:1px;height:19px;background:#308cc6"></div>
  <div class="a" style="left:8px;top:342px;width:0;height:0;border-left:4px solid #1f3f5a;border-top:4px solid transparent;border-bottom:4px solid transparent"></div>
  <div class="t" style="left:23px;top:339px;font-size:15.3px;color:#fff">Topic</div>
  <div class="t" style="left:251px;top:339px;font-size:15.3px;color:#fff">/map_camera/cloud_map</div>
  <div class="a" style="left:248px;top:356px;width:1px;height:19px;background:#e6e6e6"></div>
  <div class="t" style="left:23px;top:358px;font-size:15.3px;color:#111">Selectable</div>
  <div class="a" style="left:251px;top:358px;width:14px;height:14px;border:1px solid #b9b9b9;background:#fff;border-radius:1px"></div>
  <svg class="a" style="left:251px;top:358px" width="14" height="14" viewBox="0 0 14 14"><path d="M3.5 7 L6 10.5 L10.5 3" stroke="#111" stroke-width="1.7" fill="none"/></svg>
  <div class="a" style="left:248px;top:375px;width:1px;height:19px;background:#e6e6e6"></div>
  <div class="t" style="left:23px;top:377px;font-size:15.3px;color:#111">Style</div>
  <div class="t" style="left:251px;top:377px;font-size:15.3px;color:#111">Points</div>
  <div class="a" style="left:248px;top:394px;width:1px;height:19px;background:#e6e6e6"></div>
  <div class="t" style="left:23px;top:396px;font-size:15.3px;color:#111">Size (Pixels)</div>
  <div class="t" style="left:251px;top:396px;font-size:15.3px;color:#111">5</div>
  <div class="a" style="left:248px;top:413px;width:1px;height:19px;background:#e6e6e6"></div>
  <div class="t" style="left:23px;top:415px;font-size:15.3px;color:#111">Alpha</div>
  <div class="t" style="left:251px;top:415px;font-size:15.3px;color:#111">1</div>
  <div class="a" style="left:248px;top:432px;width:1px;height:19px;background:#e6e6e6"></div>
  <div class="t" style="left:23px;top:434px;font-size:15.3px;color:#111">Decay Time</div>
  <div class="t" style="left:251px;top:434px;font-size:15.3px;color:#111">0</div>
  <div class="a" style="left:534px;top:0;width:14px;height:445px;background:#f7f7f7;border-left:1px solid #dadada"></div>
  <div class="a" style="left:535px;top:0;width:13px;height:155px;background:#e4e4e4;border-bottom:1px solid #cfcfcf"></div>
  <div class="a" style="left:537px;top:434px;width:0;height:0;border-top:5px solid #555;border-left:5px solid transparent;border-right:5px solid transparent"></div>
</div>
<div class="a" style="left:258px;top:810px;width:18px;height:1px;border-top:1px dotted #aaa"></div>
<div class="a" style="left:-2px;top:813px;width:550px;height:78px;background:#fff;border:1px solid #bcbcbc"></div>
<div class="t" style="left:-11px;top:819px;font-size:15.5px;font-weight:bold;color:#111">Topic</div>
<div class="t" style="left:-16px;top:836px;font-size:15.5px;color:#111">sensor_msgs/msg/PointCloud2 topic to subscribe to.</div>
<div class="a" style="left:-19px;top:897px;width:136px;height:25px;background:linear-gradient(#fbfbfb,#f0f0f0);border:1px solid #c3c3c3;border-radius:3px;font-size:15px;color:#222;text-align:center;line-height:23px">Add</div>
<div class="a" style="left:124px;top:897px;width:136px;height:25px;background:linear-gradient(#fbfbfb,#f0f0f0);border:1px solid #c3c3c3;border-radius:3px;font-size:15px;color:#b3b3b3;text-align:center;line-height:23px">Duplicate</div>
<div class="a" style="left:267px;top:897px;width:137px;height:25px;background:linear-gradient(#fbfbfb,#f0f0f0);border:1px solid #c3c3c3;border-radius:3px;font-size:15px;color:#b3b3b3;text-align:center;line-height:23px">Remove</div>
<div class="a" style="left:410px;top:897px;width:137px;height:25px;background:linear-gradient(#fbfbfb,#f0f0f0);border:1px solid #c3c3c3;border-radius:3px;font-size:15px;color:#b3b3b3;text-align:center;line-height:23px">Rename</div>

<!-- ============ GAZEBO WINDOW ============ -->
<div class="a" style="left:3px;top:0;width:1px;height:392px;background:#8a8a8a"></div>
<div class="a" style="left:863px;top:0;width:9px;height:392px;background:linear-gradient(90deg,rgba(0,0,0,.22),rgba(0,0,0,0))"></div>
<div class="a" style="left:4px;top:392px;width:868px;height:6px;background:linear-gradient(rgba(0,0,0,.18),rgba(0,0,0,0))"></div>
<div class="a" style="left:3px;top:0;width:860px;height:10px;background:#e9e9e9;border-bottom:1px solid #a9a9a9;border-right:1px solid #8a8a8a;border-left:1px solid #9a9a9a"></div>
<div class="a" style="left:769px;top:-7px;width:14px;height:14px;border-radius:50%;background:#dcdcdc"></div>
<div class="a" style="left:803px;top:-7px;width:14px;height:14px;border-radius:50%;background:#dcdcdc"></div>
<div class="a" style="left:837px;top:-7px;width:14px;height:14px;border-radius:50%;background:#dcdcdc"></div>
<div class="a" id="gz" style="left:4px;top:10px;width:858px;height:382px;background:#f5f5f5;border-right:1px solid #8a8a8a;box-sizing:content-box">
  <div class="a" style="left:0;top:0;width:858px;height:48px;background:#f2f2f2;box-shadow:0 1px 2px rgba(0,0,0,.2);z-index:3"></div>
  <div class="a" style="left:15px;top:17px;width:18px;height:2.5px;background:#111;z-index:4"></div>
  <div class="a" style="left:15px;top:22.5px;width:18px;height:2.5px;background:#111;z-index:4"></div>
  <div class="a" style="left:15px;top:28px;width:18px;height:2.5px;background:#111;z-index:4"></div>
  <div class="t" style="left:68px;top:14px;font-size:19.5px;color:#111;z-index:4">Gazebo</div>
  <div class="a" style="left:831px;top:14.5px;width:5px;height:5px;border-radius:50%;background:#222;z-index:4"></div>
  <div class="a" style="left:831px;top:21.5px;width:5px;height:5px;border-radius:50%;background:#222;z-index:4"></div>
  <div class="a" style="left:831px;top:28.5px;width:5px;height:5px;border-radius:50%;background:#222;z-index:4"></div>
  <!-- scene -->
  <svg class="a" style="left:0;top:48px" width="440" height="334" viewBox="4 58 440 334">
    <rect x="4" y="58" width="440" height="334" fill="#e8e8e8"/>
    <!-- left grid plane -->
    <g stroke="#222" stroke-width="0.9" fill="none">
      <path d="M4 225.6 L80 207.3 M4 231.7 L80 213.1 M4 237.8 L80 218.8 M4 244.0 L80 224.6 M4 251.0 L80 231.2 M4 259.0 L80 238.7 M4 267.5 L80 246.7 M4 276.7 L80 255.4 M4 286.0 L80 264.1 M4 296.0 L80 273.5 M4 307.0 L80 283.8 M4 318.6 L80 294.7 M4 331.0 L80 306.4 M4 343.0 L80 317.7 M4 356.4 L80 330.3 M4 370.0 L80 343.1 M4 384.0 L80 356.2 "/>
      <path d="M4 262 L31 220 M4 312 L50 216 M16 392 L68 212 M41 392 L78 300 M4 370 L20 330"/>
    </g>
    <!-- right ribbon grid -->
    <g stroke="#ffffff" stroke-width="1" fill="none">
      <path d="M214 172 L444 268 M220 175 L444 262"/>
      <path d="M78 202 L214 172 M72 207 L212 176 M78 202 L46 392 M70 206 L38 392"/>
    </g>
    <g stroke="#333" stroke-width="0.8" fill="none">
      <path d="M222 171 L444 256 M226 173 L222 178 M238 178 L234 183 M250 183 L246 188 M262 188 L258 193 M274 193 L270 198 M286 198 L282 203 M298 203 L294 208 M310 208 L306 213 M322 213 L318 218 M334 218 L330 223 M346 223 L342 228 M358 228 L354 233 M370 233 L366 238 M382 238 L378 243 M394 243 L390 248 M406 248 L402 253 M418 253 L414 258 M430 258 L426 263 M442 263 L438 268"/>
    </g>
    <!-- outer black walls -->
    <polygon points="78,204.5 214,174.5 444,271 444,392 49,392" fill="#1b1b1b"/>
    <!-- floor dark band -->
    <polygon points="121.5,253.7 215,217 400,350 392,392 162,392" fill="#474747"/>
    <!-- inner floor -->
    <polygon points="125,256 216.7,220.7 397,351 389,392 166,392" fill="#ababab"/>
    <!-- left ledge -->
    <polygon points="110,265 113,264 131,392 124,392" fill="#a8a8a8"/>
    <!-- pipe -->
    <polygon points="118,255 126,256 165,392 146,392" fill="#4a4a4a"/><polygon points="107,218 114,217 147,392 131,392" fill="#2a2a2a"/><path d="M110 240h6M112 260h7M114 280h8M117 300h9M120 320h10M123 340h11M126 360h12M129 380h13" stroke="#222" stroke-width="0.8"/>
    <path d="M95 230 L101 392" stroke="#3a3a3a" stroke-width="1.2"/>
    <!-- right inner wall -->
    <polygon points="392,350 444,336 444,392 392,392" fill="#1e1e1e"/>
    <polygon points="216.7,220.7 392,350 400,346 230,217" fill="#303030"/>
    <!-- floor grid -->
    <g stroke="#333" stroke-width="0.8" fill="none" opacity="0.85">
      <path d="M196 228 L262 283 M214 252 L244 226 M232 266 L265 237 M258 272 L292 250 M238 320 L300 268 M270 320 L318 290 M300 360 L345 322 M305 392 L370 344 M265 302 L320 350 M283 340 L355 392 M236 336 L290 392"/>
    </g>
    <!-- craters -->
    <ellipse cx="173" cy="261" rx="9" ry="6" fill="#b4b4b4" stroke="#8e8e8e" stroke-width="1.2"/>
    <ellipse cx="227" cy="277" rx="6" ry="5" fill="#b4b4b4" stroke="#8e8e8e" stroke-width="1.2"/>
    <!-- rocks -->
    <ellipse cx="186" cy="287" rx="7" ry="9" transform="rotate(25 186 287)" fill="#262626"/>
    <path d="M188 294 L194 298 L190 300Z" fill="#777"/>
    <ellipse cx="209" cy="305" rx="8.5" ry="10.5" fill="#232323"/>
    <ellipse cx="217.5" cy="245.5" rx="2" ry="2.3" fill="#2a2a2a"/>
    <ellipse cx="255" cy="260" rx="4" ry="4" fill="#282828"/>
    <ellipse cx="315" cy="321" rx="10.5" ry="10" fill="#262626"/>
    <path d="M316 330 L328 336 L322 338Z" fill="#555"/>
    <ellipse cx="330" cy="359" rx="5.5" ry="10" transform="rotate(-25 330 359)" fill="#282828"/>
    <path d="M268 303 L278 300 L283 314 L272 317Z" fill="#d8d8d8"/>
    <path d="M271 306 L278 304 M273 311 L280 309" stroke="#555" stroke-width="1"/>
    <!-- controls -->
    <circle cx="39" cy="343.5" r="18" fill="#f05b22"/>
    <rect x="31" y="335" width="5" height="17" fill="#1d1d1d"/>
    <rect x="42" y="335" width="5" height="17" fill="#1d1d1d"/>
    <circle cx="84" cy="343.5" r="13" fill="#f05b22"/>
    <path d="M76 338 L83 343.5 L76 349Z M83 338 L90 343.5 L83 349Z" fill="#1d1d1d"/>
    <path d="M344 358 L339 362 L344 366" stroke="#222" stroke-width="1.3" fill="none"/>
    <text x="369" y="367" font-family="Liberation Sans" font-size="15.5" fill="#2a2a2a">97.84 %</text>
  </svg>
  <!-- right panel -->
  <div class="a" style="left:440px;top:48px;width:418px;height:334px;background:#f4f4f4">
    <div class="a" style="left:0;top:0;width:403px;height:48px;background:#efefef"></div>
    <div class="a" style="left:0;top:48px;width:403px;height:24px;background:#f6f6f6"></div>
    <div class="a" style="left:0;top:72px;width:403px;height:19px;background:#ebebeb"></div>
    <div class="a" style="left:0;top:91px;width:403px;height:29px;background:#f6f6f6"></div>
    <div class="a" style="left:0;top:120px;width:403px;height:19px;background:#ebebeb"></div>
    <div class="a" style="left:0;top:139px;width:403px;height:29px;background:#f6f6f6"></div>
    <div class="a" style="left:0;top:168px;width:403px;height:19px;background:#ebebeb"></div>
    <div class="a" style="left:0;top:187px;width:403px;height:29px;background:#f6f6f6"></div>
    <div class="a" style="left:0;top:216px;width:403px;height:19px;background:#ebebeb"></div>
    <div class="a" style="left:0;top:235px;width:403px;height:99px;background:#f5f5f5"></div>
    <!-- scrollbar -->
    <div class="a" style="left:403px;top:0;width:15px;height:334px;background:#ebebeb"></div>
    <div class="a" style="left:403px;top:0;width:15px;height:150px;background:#b4b4b4"></div>
  </div>
  <svg class="a" style="left:443px;top:55px" width="36" height="36" viewBox="0 0 36 36">
    <path d="M18 7 L28 12 L28 23 L18 28 L8 23 L8 12Z" fill="#3cc8ee"/>
    <path d="M18 7 L28 12 L18 17 L8 12Z" fill="#6fdcf6"/>
    <path d="M18 17 L28 12 L28 23 L18 28Z" fill="#1fa9d8"/>
    <path d="M18 3 V8 M8 23 L4 27 M28 23 L32 27" stroke="#1b8fc9" stroke-width="2"/>
    <circle cx="18" cy="4" r="3.6" fill="#1689c4"/>
    <circle cx="4" cy="29" r="3.6" fill="#1689c4"/>
    <circle cx="32" cy="29" r="3.6" fill="#1689c4"/>
  </svg>
  <div class="t" style="left:482px;top:64px;font-size:17.5px;color:#444">Model</div>
  <svg class="a" style="left:632px;top:64px" width="22" height="22" viewBox="0 0 22 22">
    <rect x="3" y="10" width="11" height="9" rx="1" fill="#c4c4c4"/>
    <path d="M11 10 V7 A4 4 0 0 1 19 7 V8" stroke="#c4c4c4" stroke-width="2" fill="none"/>
  </svg>
  <div class="a" style="left:680px;top:66px;width:4px;height:14px;background:#c2c2c2"></div>
  <div class="a" style="left:691px;top:66px;width:4px;height:14px;background:#c2c2c2"></div>
  <div class="t" style="left:732px;top:65px;font-size:16px;color:#c2c2c2">+</div>
  <div class="t" style="left:766px;top:64px;font-size:17.5px;color:#555">Entity 4</div>
  <div class="t" style="left:466px;top:98px;font-size:16px;color:#333">Name</div>
  <div class="t" style="right:27px;top:98px;font-size:16px;color:#111">lunalab</div>
  <div class="t" style="left:466px;top:122px;font-size:16px;color:#333">Wind Mode</div>
  <div class="a" style="left:782px;top:125px;width:40px;height:12px;border-radius:6px;background:#d9d9d9"></div>
  <div class="a" style="left:781px;top:122px;width:18px;height:18px;border-radius:50%;background:#c6c6c6;box-shadow:0 1px 1px rgba(0,0,0,.15)"></div>
  <div class="t" style="left:466px;top:146px;font-size:16px;color:#333">Source File Path</div>
  <div class="t" style="right:27px;top:146px;font-size:16px;color:#111">…worlds/worlds/lunalab2024.sdf</div>
  <div class="t" style="left:466px;top:170px;font-size:16px;color:#333">Model Sdf</div>
  <div class="t" style="left:466px;top:194px;font-size:16px;color:#333">Parent Entity</div>
  <div class="t" style="right:27px;top:194px;font-size:16px;color:#111">1</div>
  <div class="t" style="left:466px;top:218px;font-size:16px;color:#333">Static</div>
  <div class="a" style="left:782px;top:221px;width:40px;height:12px;border-radius:6px;background:#d9d9d9"></div>
  <div class="a" style="left:781px;top:218px;width:18px;height:18px;border-radius:50%;background:#c6c6c6;box-shadow:0 1px 1px rgba(0,0,0,.15)"></div>
  <div class="t" style="left:466px;top:242px;font-size:16px;color:#333">Self Collide</div>
  <div class="a" style="left:782px;top:245px;width:40px;height:12px;border-radius:6px;background:#d9d9d9"></div>
  <div class="a" style="left:781px;top:242px;width:18px;height:18px;border-radius:50%;background:#c6c6c6;box-shadow:0 1px 1px rgba(0,0,0,.15)"></div>
  <div class="t" style="left:466px;top:266px;font-size:16px;color:#333">Model Canonical Link</div>
  <div class="t" style="left:450px;top:289px;font-size:17px;color:#555">+</div>
  <div class="t" style="left:466px;top:290px;font-size:16px;color:#333">Pose</div>
  <!-- toolbar -->
  <div class="a" style="left:0;top:48px;width:400px;height:50px;background:#666666"></div>
  <div class="a" style="left:0;top:98px;width:400px;height:49px;background:#777777"></div>
  <svg class="a" style="left:0;top:48px" width="400" height="99" viewBox="4 58 400 99">
    <defs>
      <radialGradient id="sph" cx="0.35" cy="0.3" r="0.7"><stop offset="0" stop-color="#e6e6e6"/><stop offset="1" stop-color="#bdbdbd"/></radialGradient>
      <linearGradient id="cyl" x1="0" x2="1"><stop offset="0" stop-color="#d8d8d8"/><stop offset="1" stop-color="#c4c4c4"/></linearGradient>
    </defs>
    <!-- cube -->
    <polygon points="16,73 32,70 40,76 40,92 24,94 16,89" fill="#cfcfcf"/>
    <polygon points="16,73 32,70 40,76 24,78" fill="#e4e4e4"/>
    <polygon points="16,73 24,78 24,94 16,89" fill="#dcdcdc"/>
    <!-- sphere -->
    <circle cx="78" cy="82" r="12" fill="url(#sph)"/>
    <!-- cylinder -->
    <path d="M118 73 Q127 68 136 73 L136 90 Q127 96 118 90Z" fill="url(#cyl)"/>
    <ellipse cx="127" cy="73" rx="9" ry="3.5" fill="#e2e2e2"/>
    <!-- capsule -->
    <rect x="170" y="70" width="15" height="23" rx="7.5" fill="url(#cyl)"/>
    <!-- ellipsoid -->
    <ellipse cx="228" cy="82" rx="11" ry="5.5" fill="url(#sph)"/>
    <!-- sun -->
    <g fill="#d8d8d8" stroke="#d8d8d8">
      <circle cx="278" cy="82" r="5.5" stroke="none"/>
      <path d="M278 70 V75 M278 89 V94 M266 82 H271 M285 82 H290 M269.5 73.5 L273 77 M283 87 L286.5 90.5 M286.5 73.5 L283 77 M273 87 L269.5 90.5" stroke-width="1.3"/>
      <path d="M278 69 l-2 3 h4z M278 95 l-2 -3 h4z M265 82 l3 -2 v4z M291 82 l-3 -2 v4z" stroke="none"/>
    </g>
    <!-- directional -->
    <g stroke="#d8d8d8" stroke-width="1.5" fill="#d8d8d8">
      <path d="M331 71 L318 80 M331 79 L318 88 M339 82 L326 91"/>
      <path d="M316 81.5 l5 -1 l-3 -3z M316 89.5 l5 -1 l-3 -3z M324 92.5 l5 -1 l-3 -3z" stroke="none"/>
    </g>
    <!-- spot -->
    <g stroke="#d8d8d8" stroke-width="1.2" fill="#d8d8d8">
      <circle cx="371" cy="77" r="6" stroke="none"/>
      <path d="M375 76 L389 78 M375 79 L387 84 M374 81 L383 88 M372 82 L378 92" fill="none"/>
    </g>
    <!-- selected arrow -->
    <circle cx="28" cy="132" r="16.5" fill="#6d6d6d"/>
    <path d="M16 122 L33 129 L28.5 132 L40 140 L37 143.5 L26 135 L23 139.5Z" fill="#d6d6d6"/>
    <!-- move -->
    <g fill="#d4d4d4" stroke="#d4d4d4">
      <path d="M78 122 V142 M68 132 H88" stroke-width="2.6"/>
      <path d="M78 119 l-5 5 h10z M78 145 l-5 -5 h10z M65 132 l5 -5 v10z M91 132 l-5 -5 v10z" stroke="none"/>
    </g>
    <!-- rotate -->
    <g fill="none" stroke="#d4d4d4" stroke-width="2.2">
      <path d="M118 135 A9.5 9.5 0 0 1 133 124"/>
      <path d="M136 129 A9.5 9.5 0 0 1 121 140"/>
    </g>
    <path d="M131 119 l5 5 l-6 2z M123 145 l-5 -5 l6 -2z" fill="#d4d4d4"/>
    <!-- snap -->
    <path d="M167 131 L171.5 129 L176 131 L176 137 L171.5 139 L167 137Z" fill="#0a6fd8"/>
    <path d="M167 131 L171.5 129 L176 131 L171.5 133Z" fill="#2b8cf0"/>
    <path d="M175 140 L182 137 L189 134" stroke="#3b8fe0" stroke-width="1.2" fill="none" stroke-dasharray="2 1"/>
    <path d="M178 125 L182.5 123 L187 125 L187 131 L182.5 133 L178 131Z M178 125 L182.5 127 L187 125 M182.5 127 V133" fill="none" stroke="#aaa" stroke-width="0.7"/>
    <!-- grid -->
    <rect x="216" y="121" width="24" height="21" fill="#f6f6f6"/>
    <g stroke="#9a9a9a" stroke-width="0.9" fill="none">
      <path d="M222 121 V142 M228 121 V142 M234 121 V142 M216 126.5 H240 M216 131.5 H240 M216 136.5 H240"/>
    </g>
    <path d="M230 144 A5 5 0 0 1 240 144" stroke="#f2f2f2" stroke-width="2.5" fill="none"/>
    <path d="M232.5 144 A2.5 2.5 0 0 1 237.5 144" stroke="#777" stroke-width="1.5" fill="none"/>
    <!-- camera -->
    <rect x="263" y="125.5" width="29" height="19" rx="2" fill="#d4d4d4"/>
    <rect x="268" y="122.5" width="9" height="4" rx="1" fill="#d4d4d4"/>
    <circle cx="278" cy="135.5" r="4.2" fill="none" stroke="#777" stroke-width="1.6"/>
    <rect x="283.5" y="128.5" width="6" height="2.5" fill="none" stroke="#777" stroke-width="0.8"/>
    <circle cx="271" cy="129.5" r="0.9" fill="#777"/>
    <!-- copy -->
    <path d="M319 122 H329 L332 125 V142 H319Z" fill="#e2e2e2"/>
    <path d="M324 126 H333 L336 130 V146 H324Z" fill="#d4d4d4" stroke="#eee" stroke-width="0.6"/>
    <path d="M320 127H323M320 130H323M320 133H323M320 136H323M326 132H334M326 135H334M326 138H334M326 141H334" stroke="#bbb" stroke-width="0.8"/>
    <!-- paste -->
    <rect x="367" y="123" width="15" height="21" rx="1.5" fill="none" stroke="#e0e0e0" stroke-width="1"/>
    <rect x="371" y="120.5" width="7" height="3" rx="1.5" fill="none" stroke="#e0e0e0" stroke-width="1"/>
    <path d="M376 127 H385 L388 131 V146 H376Z" fill="#d4d4d4"/>
    <path d="M378 133H386M378 136H386M378 139H386M378 142H386" stroke="#bbb" stroke-width="0.8"/>
  </svg>
</div>

</body></html>
